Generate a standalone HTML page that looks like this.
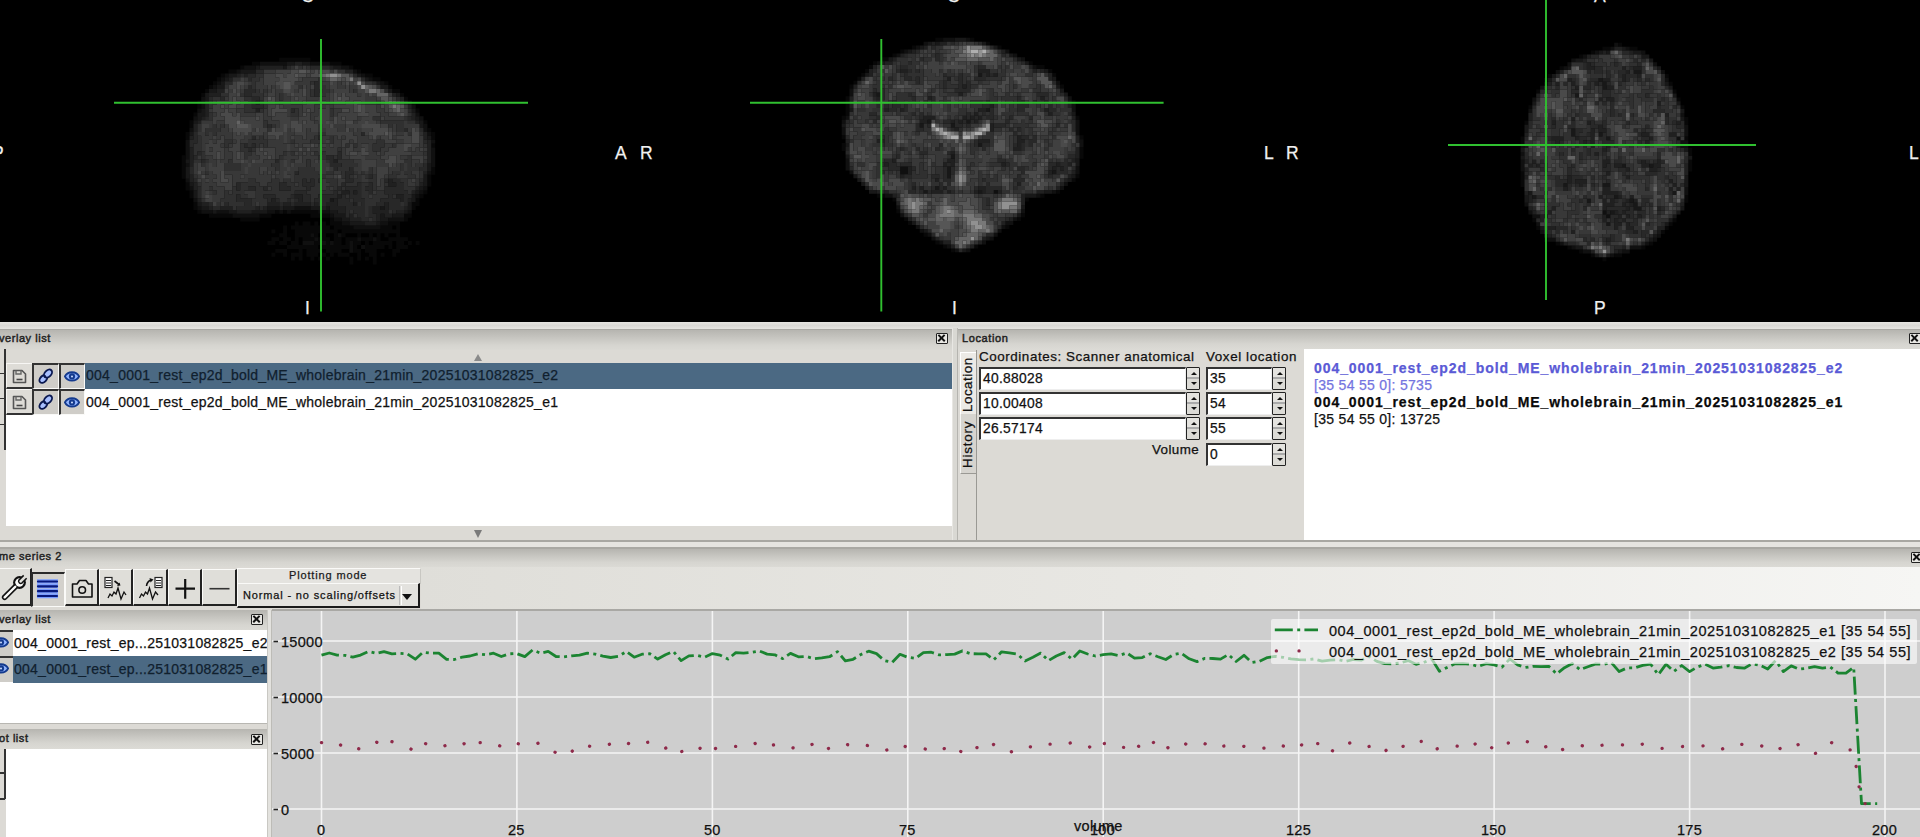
<!DOCTYPE html>
<html><head><meta charset="utf-8">
<style>
*{box-sizing:border-box;margin:0;padding:0}
html,body{width:1920px;height:837px;overflow:hidden;background:#dcdad5;font-family:"Liberation Sans",sans-serif;color:#1a1a1a}
.a{position:absolute}
.t{position:absolute;white-space:nowrap;line-height:1;-webkit-text-stroke:0.25px currentColor}
.hdr{position:absolute;background:linear-gradient(#b6b5b0,#c4c3be 30%,#d6d5d0 70%,#dcdbd6)}
.wh{position:absolute;background:#fff}
.sel{position:absolute;background:#4b6983}
.cls{position:absolute;width:12px;height:11px;border:1.5px solid #222;border-radius:1px;background:#e8e7e3}
.cls:before,.cls:after{content:"";position:absolute;left:0px;top:3px;width:9px;height:2.2px;background:#111;transform:rotate(45deg)}
.cls:after{transform:rotate(-45deg)}
.inp{position:absolute;background:#fff;border-top:2px solid #333;border-left:2px solid #333;border-right:1px solid #eee;border-bottom:1px solid #eee}
.spin{position:absolute;background:linear-gradient(#e4e3df 0,#e4e3df 45%,#aaa 45%,#aaa 52%,#dcdbd6 52%);border:1.5px solid #222;border-radius:1px}
.spin:before{content:"";position:absolute;left:3.5px;top:4px;border-left:3px solid transparent;border-right:3px solid transparent;border-bottom:3.5px solid #111}
.spin:after{content:"";position:absolute;left:3.5px;top:14px;border-left:3px solid transparent;border-right:3px solid transparent;border-top:3.5px solid #111}
.btn{position:absolute;background:#dcdad5;border-top:1px solid #fafaf8;border-left:1px solid #fafaf8;border-right:3px solid #222;border-bottom:3px solid #222}
</style></head><body>

<!-- ===== canvas ===== -->
<div class="a" id="cv" style="left:0;top:0;width:1920px;height:322px;background:#000;overflow:hidden">
<svg class="a" style="left:0;top:0;width:1920px;height:322px" viewBox="0 0 1920 322">
<defs>
<filter id="tex" x="-10%" y="-10%" width="120%" height="120%">
 <feGaussianBlur in="SourceAlpha" stdDeviation="3.5" result="ma"/>
 <feTurbulence type="fractalNoise" baseFrequency="0.3" numOctaves="2" seed="4" result="n"/>
 <feColorMatrix in="n" type="matrix" values="0 0 0 0 0  0 0 0 0 0  0 0 0 0 0  2.2 0 0 0 -1.0" result="na"/>
 <feFlood flood-color="#8c8c8c" result="fl"/>
 <feComposite in="fl" in2="na" operator="in" result="spk"/>
 <feMerge result="m"><feMergeNode in="SourceGraphic"/><feMergeNode in="spk"/></feMerge>
 <feGaussianBlur in="m" stdDeviation="0.9" result="mb"/>
 <feComposite in="mb" in2="ma" operator="in"/>
</filter>
<filter id="soft"><feGaussianBlur stdDeviation="4"/></filter>
<filter id="b2"><feGaussianBlur stdDeviation="2"/></filter>
</defs>
<rect width="1920" height="322" fill="#000"/>

<path fill="#080808" d="M279.2 57.8h31.2v3.9h-31.2zM251.9 61.7h7.8v3.9h-7.8zM329.9 61.7h11.7v3.9h-11.7zM240.2 65.6h3.9v3.9h-3.9zM349.4 65.6h3.9v3.9h-3.9zM228.5 69.5h7.8v3.9h-7.8zM357.2 69.5h3.9v3.9h-3.9zM220.7 73.4h3.9v3.9h-3.9zM365.0 73.4h7.8v3.9h-7.8zM216.8 77.3h3.9v3.9h-3.9zM372.8 77.3h7.8v3.9h-7.8zM212.9 81.2h3.9v3.9h-3.9zM384.5 81.2h3.9v3.9h-3.9zM209.0 85.1h3.9v3.9h-3.9zM388.4 85.1h3.9v3.9h-3.9zM205.1 89.0h3.9v3.9h-3.9zM392.3 89.0h7.8v3.9h-7.8zM201.2 92.9h3.9v3.9h-3.9zM400.1 92.9h3.9v3.9h-3.9zM404.0 96.8h3.9v3.9h-3.9zM197.3 100.7h3.9v3.9h-3.9zM197.3 104.6h3.9v3.9h-3.9zM415.7 108.5h3.9v3.9h-3.9zM193.4 112.4h3.9v3.9h-3.9zM189.5 120.2h3.9v3.9h-3.9zM423.5 120.2h3.9v3.9h-3.9zM189.5 124.1h3.9v3.9h-3.9zM427.4 128.0h3.9v3.9h-3.9zM185.6 131.9h3.9v3.9h-3.9zM431.3 131.9h3.9v3.9h-3.9zM185.6 135.8h3.9v3.9h-3.9zM431.3 135.8h3.9v3.9h-3.9zM431.3 143.6h3.9v3.9h-3.9zM181.7 155.3h3.9v3.9h-3.9zM181.7 159.2h3.9v3.9h-3.9zM181.7 163.1h3.9v3.9h-3.9zM181.7 167.0h3.9v3.9h-3.9zM431.3 167.0h3.9v3.9h-3.9zM181.7 170.9h3.9v3.9h-3.9zM431.3 170.9h3.9v3.9h-3.9zM181.7 174.8h3.9v3.9h-3.9zM427.4 174.8h3.9v3.9h-3.9zM427.4 178.7h3.9v3.9h-3.9zM185.6 182.6h3.9v3.9h-3.9zM427.4 182.6h3.9v3.9h-3.9zM185.6 186.5h3.9v3.9h-3.9zM189.5 190.4h3.9v3.9h-3.9zM423.5 190.4h3.9v3.9h-3.9zM189.5 194.3h3.9v3.9h-3.9zM419.6 194.3h3.9v3.9h-3.9zM415.7 198.2h3.9v3.9h-3.9zM193.4 202.1h3.9v3.9h-3.9zM411.8 202.1h7.8v3.9h-7.8zM193.4 206.0h3.9v3.9h-3.9zM411.8 206.0h3.9v3.9h-3.9zM197.3 209.9h3.9v3.9h-3.9zM275.3 209.9h3.9v3.9h-3.9zM283.1 209.9h3.9v3.9h-3.9zM290.9 209.9h27.3v3.9h-27.3zM209.0 213.8h23.4v3.9h-23.4zM259.7 213.8h11.7v3.9h-11.7zM310.4 213.8h19.5v3.9h-19.5zM404.0 213.8h7.8v3.9h-7.8zM240.2 217.7h19.5v3.9h-19.5zM329.9 217.7h3.9v3.9h-3.9zM404.0 217.7h3.9v3.9h-3.9zM294.8 221.6h3.9v3.9h-3.9zM302.6 221.6h7.8v3.9h-7.8zM314.3 221.6h3.9v3.9h-3.9zM322.1 221.6h3.9v3.9h-3.9zM329.9 221.6h11.7v3.9h-11.7zM388.4 221.6h11.7v3.9h-11.7zM283.1 225.5h3.9v3.9h-3.9zM290.9 225.5h39.0v3.9h-39.0zM333.8 225.5h19.5v3.9h-19.5zM380.6 225.5h11.7v3.9h-11.7zM396.2 225.5h3.9v3.9h-3.9zM271.4 229.4h3.9v3.9h-3.9zM283.1 229.4h3.9v3.9h-3.9zM294.8 229.4h42.9v3.9h-42.9zM341.6 229.4h58.5v3.9h-58.5zM279.2 233.3h7.8v3.9h-7.8zM294.8 233.3h15.6v3.9h-15.6zM314.3 233.3h3.9v3.9h-3.9zM322.1 233.3h3.9v3.9h-3.9zM333.8 233.3h3.9v3.9h-3.9zM341.6 233.3h3.9v3.9h-3.9zM357.2 233.3h3.9v3.9h-3.9zM368.9 233.3h3.9v3.9h-3.9zM376.7 233.3h3.9v3.9h-3.9zM384.5 233.3h3.9v3.9h-3.9zM396.2 233.3h3.9v3.9h-3.9zM271.4 237.2h7.8v3.9h-7.8zM283.1 237.2h7.8v3.9h-7.8zM294.8 237.2h3.9v3.9h-3.9zM302.6 237.2h11.7v3.9h-11.7zM318.2 237.2h11.7v3.9h-11.7zM333.8 237.2h7.8v3.9h-7.8zM345.5 237.2h11.7v3.9h-11.7zM361.1 237.2h11.7v3.9h-11.7zM376.7 237.2h3.9v3.9h-3.9zM388.4 237.2h19.5v3.9h-19.5zM267.5 241.1h7.8v3.9h-7.8zM279.2 241.1h7.8v3.9h-7.8zM290.9 241.1h7.8v3.9h-7.8zM314.3 241.1h7.8v3.9h-7.8zM326.0 241.1h3.9v3.9h-3.9zM333.8 241.1h7.8v3.9h-7.8zM345.5 241.1h3.9v3.9h-3.9zM353.3 241.1h7.8v3.9h-7.8zM365.0 241.1h3.9v3.9h-3.9zM372.8 241.1h19.5v3.9h-19.5zM396.2 241.1h7.8v3.9h-7.8zM407.9 241.1h3.9v3.9h-3.9zM415.7 241.1h3.9v3.9h-3.9zM287.0 245.0h31.2v3.9h-31.2zM322.1 245.0h27.3v3.9h-27.3zM353.3 245.0h3.9v3.9h-3.9zM365.0 245.0h19.5v3.9h-19.5zM388.4 245.0h3.9v3.9h-3.9zM396.2 245.0h11.7v3.9h-11.7zM275.3 248.9h11.7v3.9h-11.7zM298.7 248.9h3.9v3.9h-3.9zM306.5 248.9h15.6v3.9h-15.6zM326.0 248.9h15.6v3.9h-15.6zM353.3 248.9h7.8v3.9h-7.8zM365.0 248.9h11.7v3.9h-11.7zM392.3 248.9h7.8v3.9h-7.8zM271.4 252.8h3.9v3.9h-3.9zM283.1 252.8h3.9v3.9h-3.9zM290.9 252.8h11.7v3.9h-11.7zM306.5 252.8h11.7v3.9h-11.7zM322.1 252.8h3.9v3.9h-3.9zM329.9 252.8h3.9v3.9h-3.9zM337.7 252.8h11.7v3.9h-11.7zM357.2 252.8h3.9v3.9h-3.9zM368.9 252.8h7.8v3.9h-7.8zM380.6 252.8h3.9v3.9h-3.9zM392.3 252.8h3.9v3.9h-3.9zM290.9 256.7h3.9v3.9h-3.9zM298.7 256.7h3.9v3.9h-3.9zM310.4 256.7h3.9v3.9h-3.9zM318.2 256.7h3.9v3.9h-3.9zM326.0 256.7h3.9v3.9h-3.9zM349.4 256.7h3.9v3.9h-3.9zM357.2 256.7h3.9v3.9h-3.9zM365.0 256.7h3.9v3.9h-3.9zM372.8 256.7h3.9v3.9h-3.9zM349.4 260.6h3.9v3.9h-3.9zM372.8 260.6h3.9v3.9h-3.9z"/>
<path fill="#101010" d="M259.7 61.7h27.3v3.9h-27.3zM310.4 61.7h19.5v3.9h-19.5zM244.1 65.6h11.7v3.9h-11.7zM341.6 65.6h7.8v3.9h-7.8zM236.3 69.5h3.9v3.9h-3.9zM353.3 69.5h3.9v3.9h-3.9zM224.6 73.4h3.9v3.9h-3.9zM361.1 73.4h3.9v3.9h-3.9zM220.7 77.3h3.9v3.9h-3.9zM368.9 77.3h3.9v3.9h-3.9zM216.8 81.2h3.9v3.9h-3.9zM380.6 81.2h3.9v3.9h-3.9zM212.9 85.1h3.9v3.9h-3.9zM201.2 96.8h3.9v3.9h-3.9zM201.2 100.7h3.9v3.9h-3.9zM407.9 100.7h3.9v3.9h-3.9zM201.2 104.6h3.9v3.9h-3.9zM411.8 104.6h3.9v3.9h-3.9zM197.3 108.5h3.9v3.9h-3.9zM415.7 112.4h3.9v3.9h-3.9zM193.4 116.3h3.9v3.9h-3.9zM419.6 116.3h3.9v3.9h-3.9zM423.5 124.1h3.9v3.9h-3.9zM189.5 128.0h3.9v3.9h-3.9zM423.5 128.0h3.9v3.9h-3.9zM427.4 131.9h3.9v3.9h-3.9zM185.6 139.7h3.9v3.9h-3.9zM431.3 139.7h3.9v3.9h-3.9zM185.6 143.6h3.9v3.9h-3.9zM185.6 147.5h3.9v3.9h-3.9zM431.3 147.5h3.9v3.9h-3.9zM185.6 151.4h3.9v3.9h-3.9zM431.3 151.4h3.9v3.9h-3.9zM185.6 155.3h3.9v3.9h-3.9zM431.3 155.3h3.9v3.9h-3.9zM431.3 159.2h3.9v3.9h-3.9zM185.6 163.1h3.9v3.9h-3.9zM431.3 163.1h3.9v3.9h-3.9zM427.4 170.9h3.9v3.9h-3.9zM185.6 178.7h3.9v3.9h-3.9zM189.5 186.5h3.9v3.9h-3.9zM423.5 186.5h3.9v3.9h-3.9zM419.6 190.4h3.9v3.9h-3.9zM415.7 194.3h3.9v3.9h-3.9zM193.4 198.2h3.9v3.9h-3.9zM197.3 206.0h3.9v3.9h-3.9zM294.8 206.0h15.6v3.9h-15.6zM201.2 209.9h11.7v3.9h-11.7zM216.8 209.9h11.7v3.9h-11.7zM267.5 209.9h7.8v3.9h-7.8zM279.2 209.9h3.9v3.9h-3.9zM287.0 209.9h3.9v3.9h-3.9zM318.2 209.9h11.7v3.9h-11.7zM407.9 209.9h3.9v3.9h-3.9zM232.4 213.8h27.3v3.9h-27.3zM329.9 213.8h3.9v3.9h-3.9zM333.8 217.7h7.8v3.9h-7.8zM388.4 217.7h15.6v3.9h-15.6zM341.6 221.6h7.8v3.9h-7.8zM380.6 221.6h7.8v3.9h-7.8zM353.3 225.5h27.3v3.9h-27.3zM310.4 233.3h3.9v3.9h-3.9zM337.7 233.3h3.9v3.9h-3.9zM314.3 237.2h3.9v3.9h-3.9zM357.2 237.2h3.9v3.9h-3.9zM372.8 237.2h3.9v3.9h-3.9zM302.6 241.1h11.7v3.9h-11.7zM322.1 241.1h3.9v3.9h-3.9zM329.9 241.1h3.9v3.9h-3.9zM349.4 241.1h3.9v3.9h-3.9zM349.4 245.0h3.9v3.9h-3.9zM361.1 245.0h3.9v3.9h-3.9zM349.4 248.9h3.9v3.9h-3.9z"/>
<path fill="#181818" d="M287.0 61.7h7.8v3.9h-7.8zM302.6 61.7h7.8v3.9h-7.8zM255.8 65.6h3.9v3.9h-3.9zM283.1 65.6h3.9v3.9h-3.9zM333.8 65.6h7.8v3.9h-7.8zM240.2 69.5h15.6v3.9h-15.6zM228.5 73.4h7.8v3.9h-7.8zM357.2 73.4h3.9v3.9h-3.9zM224.6 77.3h3.9v3.9h-3.9zM365.0 77.3h3.9v3.9h-3.9zM220.7 81.2h3.9v3.9h-3.9zM376.7 81.2h3.9v3.9h-3.9zM216.8 85.1h7.8v3.9h-7.8zM380.6 85.1h7.8v3.9h-7.8zM209.0 89.0h7.8v3.9h-7.8zM388.4 89.0h3.9v3.9h-3.9zM205.1 92.9h3.9v3.9h-3.9zM396.2 92.9h3.9v3.9h-3.9zM205.1 96.8h3.9v3.9h-3.9zM201.2 108.5h3.9v3.9h-3.9zM411.8 108.5h3.9v3.9h-3.9zM197.3 112.4h7.8v3.9h-7.8zM197.3 116.3h3.9v3.9h-3.9zM415.7 116.3h3.9v3.9h-3.9zM193.4 120.2h3.9v3.9h-3.9zM419.6 120.2h3.9v3.9h-3.9zM419.6 124.1h3.9v3.9h-3.9zM189.5 131.9h3.9v3.9h-3.9zM427.4 135.8h3.9v3.9h-3.9zM185.6 159.2h3.9v3.9h-3.9zM427.4 163.1h3.9v3.9h-3.9zM185.6 167.0h3.9v3.9h-3.9zM427.4 167.0h3.9v3.9h-3.9zM185.6 170.9h3.9v3.9h-3.9zM185.6 174.8h3.9v3.9h-3.9zM423.5 174.8h3.9v3.9h-3.9zM423.5 178.7h3.9v3.9h-3.9zM189.5 182.6h3.9v3.9h-3.9zM423.5 182.6h3.9v3.9h-3.9zM419.6 186.5h3.9v3.9h-3.9zM193.4 190.4h3.9v3.9h-3.9zM415.7 190.4h3.9v3.9h-3.9zM193.4 194.3h3.9v3.9h-3.9zM411.8 194.3h3.9v3.9h-3.9zM329.9 198.2h3.9v3.9h-3.9zM411.8 198.2h3.9v3.9h-3.9zM197.3 202.1h3.9v3.9h-3.9zM407.9 202.1h3.9v3.9h-3.9zM201.2 206.0h7.8v3.9h-7.8zM267.5 206.0h11.7v3.9h-11.7zM283.1 206.0h11.7v3.9h-11.7zM310.4 206.0h11.7v3.9h-11.7zM326.0 206.0h3.9v3.9h-3.9zM380.6 206.0h3.9v3.9h-3.9zM407.9 206.0h3.9v3.9h-3.9zM212.9 209.9h3.9v3.9h-3.9zM228.5 209.9h7.8v3.9h-7.8zM251.9 209.9h15.6v3.9h-15.6zM329.9 209.9h7.8v3.9h-7.8zM404.0 209.9h3.9v3.9h-3.9zM333.8 213.8h11.7v3.9h-11.7zM380.6 213.8h3.9v3.9h-3.9zM392.3 213.8h11.7v3.9h-11.7zM341.6 217.7h7.8v3.9h-7.8zM380.6 217.7h7.8v3.9h-7.8zM349.4 221.6h15.6v3.9h-15.6zM376.7 221.6h3.9v3.9h-3.9z"/>
<path fill="#202020" d="M294.8 61.7h7.8v3.9h-7.8zM259.7 65.6h23.4v3.9h-23.4zM329.9 65.6h3.9v3.9h-3.9zM345.5 69.5h7.8v3.9h-7.8zM236.3 73.4h3.9v3.9h-3.9zM244.1 73.4h3.9v3.9h-3.9zM228.5 77.3h3.9v3.9h-3.9zM216.8 89.0h7.8v3.9h-7.8zM209.0 92.9h11.7v3.9h-11.7zM392.3 92.9h3.9v3.9h-3.9zM400.1 96.8h3.9v3.9h-3.9zM205.1 100.7h3.9v3.9h-3.9zM255.8 100.7h3.9v3.9h-3.9zM404.0 100.7h3.9v3.9h-3.9zM205.1 104.6h3.9v3.9h-3.9zM407.9 104.6h3.9v3.9h-3.9zM205.1 108.5h3.9v3.9h-3.9zM255.8 108.5h3.9v3.9h-3.9zM205.1 112.4h3.9v3.9h-3.9zM411.8 112.4h3.9v3.9h-3.9zM201.2 116.3h3.9v3.9h-3.9zM411.8 116.3h3.9v3.9h-3.9zM197.3 120.2h3.9v3.9h-3.9zM415.7 120.2h3.9v3.9h-3.9zM193.4 124.1h3.9v3.9h-3.9zM193.4 128.0h3.9v3.9h-3.9zM423.5 131.9h3.9v3.9h-3.9zM189.5 135.8h3.9v3.9h-3.9zM423.5 135.8h3.9v3.9h-3.9zM427.4 139.7h3.9v3.9h-3.9zM427.4 143.6h3.9v3.9h-3.9zM189.5 147.5h3.9v3.9h-3.9zM427.4 147.5h3.9v3.9h-3.9zM189.5 151.4h3.9v3.9h-3.9zM427.4 151.4h3.9v3.9h-3.9zM189.5 155.3h3.9v3.9h-3.9zM427.4 155.3h3.9v3.9h-3.9zM189.5 159.2h3.9v3.9h-3.9zM333.8 159.2h3.9v3.9h-3.9zM427.4 159.2h3.9v3.9h-3.9zM189.5 163.1h3.9v3.9h-3.9zM423.5 170.9h3.9v3.9h-3.9zM189.5 174.8h3.9v3.9h-3.9zM189.5 178.7h3.9v3.9h-3.9zM388.4 178.7h3.9v3.9h-3.9zM193.4 182.6h3.9v3.9h-3.9zM388.4 182.6h7.8v3.9h-7.8zM419.6 182.6h3.9v3.9h-3.9zM193.4 186.5h3.9v3.9h-3.9zM415.7 186.5h3.9v3.9h-3.9zM341.6 190.4h7.8v3.9h-7.8zM353.3 190.4h3.9v3.9h-3.9zM411.8 190.4h3.9v3.9h-3.9zM294.8 194.3h7.8v3.9h-7.8zM337.7 194.3h3.9v3.9h-3.9zM396.2 194.3h7.8v3.9h-7.8zM197.3 198.2h3.9v3.9h-3.9zM271.4 198.2h3.9v3.9h-3.9zM298.7 198.2h3.9v3.9h-3.9zM333.8 198.2h3.9v3.9h-3.9zM400.1 198.2h3.9v3.9h-3.9zM407.9 198.2h3.9v3.9h-3.9zM201.2 202.1h7.8v3.9h-7.8zM267.5 202.1h11.7v3.9h-11.7zM283.1 202.1h7.8v3.9h-7.8zM294.8 202.1h15.6v3.9h-15.6zM314.3 202.1h3.9v3.9h-3.9zM326.0 202.1h11.7v3.9h-11.7zM353.3 202.1h3.9v3.9h-3.9zM384.5 202.1h3.9v3.9h-3.9zM209.0 206.0h3.9v3.9h-3.9zM220.7 206.0h11.7v3.9h-11.7zM255.8 206.0h3.9v3.9h-3.9zM263.6 206.0h3.9v3.9h-3.9zM279.2 206.0h3.9v3.9h-3.9zM322.1 206.0h3.9v3.9h-3.9zM329.9 206.0h15.6v3.9h-15.6zM372.8 206.0h7.8v3.9h-7.8zM384.5 206.0h3.9v3.9h-3.9zM404.0 206.0h3.9v3.9h-3.9zM236.3 209.9h15.6v3.9h-15.6zM337.7 209.9h7.8v3.9h-7.8zM372.8 209.9h15.6v3.9h-15.6zM396.2 209.9h7.8v3.9h-7.8zM349.4 213.8h3.9v3.9h-3.9zM376.7 213.8h3.9v3.9h-3.9zM384.5 213.8h7.8v3.9h-7.8zM349.4 217.7h11.7v3.9h-11.7zM376.7 217.7h3.9v3.9h-3.9zM365.0 221.6h11.7v3.9h-11.7z"/>
<path fill="#282828" d="M287.0 65.6h3.9v3.9h-3.9zM310.4 65.6h19.5v3.9h-19.5zM255.8 69.5h7.8v3.9h-7.8zM240.2 73.4h3.9v3.9h-3.9zM248.0 73.4h7.8v3.9h-7.8zM353.3 73.4h3.9v3.9h-3.9zM248.0 77.3h3.9v3.9h-3.9zM361.1 77.3h3.9v3.9h-3.9zM224.6 81.2h7.8v3.9h-7.8zM314.3 81.2h3.9v3.9h-3.9zM372.8 81.2h3.9v3.9h-3.9zM248.0 85.1h3.9v3.9h-3.9zM314.3 85.1h3.9v3.9h-3.9zM244.1 89.0h11.7v3.9h-11.7zM314.3 89.0h7.8v3.9h-7.8zM384.5 89.0h3.9v3.9h-3.9zM244.1 92.9h7.8v3.9h-7.8zM314.3 92.9h3.9v3.9h-3.9zM209.0 96.8h3.9v3.9h-3.9zM220.7 96.8h3.9v3.9h-3.9zM251.9 96.8h7.8v3.9h-7.8zM396.2 96.8h3.9v3.9h-3.9zM251.9 100.7h3.9v3.9h-3.9zM259.7 100.7h3.9v3.9h-3.9zM251.9 104.6h11.7v3.9h-11.7zM290.9 108.5h3.9v3.9h-3.9zM407.9 108.5h3.9v3.9h-3.9zM205.1 116.3h3.9v3.9h-3.9zM407.9 116.3h3.9v3.9h-3.9zM267.5 124.1h3.9v3.9h-3.9zM404.0 128.0h3.9v3.9h-3.9zM419.6 128.0h3.9v3.9h-3.9zM193.4 131.9h3.9v3.9h-3.9zM361.1 131.9h3.9v3.9h-3.9zM193.4 135.8h3.9v3.9h-3.9zM251.9 135.8h3.9v3.9h-3.9zM318.2 135.8h3.9v3.9h-3.9zM189.5 139.7h7.8v3.9h-7.8zM423.5 139.7h3.9v3.9h-3.9zM189.5 143.6h3.9v3.9h-3.9zM244.1 143.6h3.9v3.9h-3.9zM251.9 143.6h3.9v3.9h-3.9zM248.0 147.5h3.9v3.9h-3.9zM197.3 151.4h3.9v3.9h-3.9zM337.7 151.4h3.9v3.9h-3.9zM193.4 155.3h3.9v3.9h-3.9zM326.0 155.3h7.8v3.9h-7.8zM337.7 155.3h3.9v3.9h-3.9zM201.2 159.2h3.9v3.9h-3.9zM275.3 159.2h3.9v3.9h-3.9zM329.9 159.2h3.9v3.9h-3.9zM329.9 163.1h11.7v3.9h-11.7zM423.5 163.1h3.9v3.9h-3.9zM189.5 167.0h3.9v3.9h-3.9zM333.8 167.0h3.9v3.9h-3.9zM349.4 167.0h3.9v3.9h-3.9zM419.6 167.0h7.8v3.9h-7.8zM189.5 170.9h3.9v3.9h-3.9zM294.8 170.9h3.9v3.9h-3.9zM345.5 170.9h7.8v3.9h-7.8zM345.5 174.8h3.9v3.9h-3.9zM368.9 174.8h3.9v3.9h-3.9zM193.4 178.7h3.9v3.9h-3.9zM302.6 178.7h3.9v3.9h-3.9zM310.4 178.7h3.9v3.9h-3.9zM318.2 178.7h3.9v3.9h-3.9zM345.5 178.7h7.8v3.9h-7.8zM384.5 178.7h3.9v3.9h-3.9zM392.3 178.7h7.8v3.9h-7.8zM419.6 178.7h3.9v3.9h-3.9zM236.3 182.6h3.9v3.9h-3.9zM279.2 182.6h7.8v3.9h-7.8zM302.6 182.6h11.7v3.9h-11.7zM341.6 182.6h3.9v3.9h-3.9zM357.2 182.6h3.9v3.9h-3.9zM368.9 182.6h3.9v3.9h-3.9zM396.2 182.6h7.8v3.9h-7.8zM197.3 186.5h3.9v3.9h-3.9zM236.3 186.5h3.9v3.9h-3.9zM248.0 186.5h7.8v3.9h-7.8zM263.6 186.5h3.9v3.9h-3.9zM279.2 186.5h11.7v3.9h-11.7zM306.5 186.5h3.9v3.9h-3.9zM337.7 186.5h3.9v3.9h-3.9zM345.5 186.5h15.6v3.9h-15.6zM365.0 186.5h7.8v3.9h-7.8zM384.5 186.5h19.5v3.9h-19.5zM197.3 190.4h3.9v3.9h-3.9zM294.8 190.4h11.7v3.9h-11.7zM333.8 190.4h3.9v3.9h-3.9zM349.4 190.4h3.9v3.9h-3.9zM357.2 190.4h3.9v3.9h-3.9zM368.9 190.4h3.9v3.9h-3.9zM384.5 190.4h23.4v3.9h-23.4zM197.3 194.3h3.9v3.9h-3.9zM236.3 194.3h3.9v3.9h-3.9zM263.6 194.3h11.7v3.9h-11.7zM290.9 194.3h3.9v3.9h-3.9zM302.6 194.3h7.8v3.9h-7.8zM318.2 194.3h19.5v3.9h-19.5zM341.6 194.3h3.9v3.9h-3.9zM349.4 194.3h11.7v3.9h-11.7zM388.4 194.3h3.9v3.9h-3.9zM404.0 194.3h7.8v3.9h-7.8zM236.3 198.2h15.6v3.9h-15.6zM267.5 198.2h3.9v3.9h-3.9zM275.3 198.2h3.9v3.9h-3.9zM287.0 198.2h3.9v3.9h-3.9zM294.8 198.2h3.9v3.9h-3.9zM302.6 198.2h7.8v3.9h-7.8zM314.3 198.2h15.6v3.9h-15.6zM337.7 198.2h11.7v3.9h-11.7zM353.3 198.2h11.7v3.9h-11.7zM380.6 198.2h19.5v3.9h-19.5zM404.0 198.2h3.9v3.9h-3.9zM209.0 202.1h3.9v3.9h-3.9zM224.6 202.1h3.9v3.9h-3.9zM244.1 202.1h7.8v3.9h-7.8zM279.2 202.1h3.9v3.9h-3.9zM290.9 202.1h3.9v3.9h-3.9zM310.4 202.1h3.9v3.9h-3.9zM318.2 202.1h7.8v3.9h-7.8zM337.7 202.1h15.6v3.9h-15.6zM361.1 202.1h3.9v3.9h-3.9zM376.7 202.1h7.8v3.9h-7.8zM388.4 202.1h11.7v3.9h-11.7zM404.0 202.1h3.9v3.9h-3.9zM212.9 206.0h7.8v3.9h-7.8zM236.3 206.0h19.5v3.9h-19.5zM259.7 206.0h3.9v3.9h-3.9zM345.5 206.0h19.5v3.9h-19.5zM368.9 206.0h3.9v3.9h-3.9zM388.4 206.0h15.6v3.9h-15.6zM345.5 209.9h3.9v3.9h-3.9zM353.3 209.9h11.7v3.9h-11.7zM368.9 209.9h3.9v3.9h-3.9zM392.3 209.9h3.9v3.9h-3.9zM345.5 213.8h3.9v3.9h-3.9zM357.2 213.8h7.8v3.9h-7.8zM368.9 213.8h7.8v3.9h-7.8zM361.1 217.7h7.8v3.9h-7.8zM372.8 217.7h3.9v3.9h-3.9z"/>
<path fill="#303030" d="M290.9 65.6h3.9v3.9h-3.9zM298.7 65.6h3.9v3.9h-3.9zM306.5 65.6h3.9v3.9h-3.9zM337.7 69.5h7.8v3.9h-7.8zM255.8 73.4h7.8v3.9h-7.8zM232.4 77.3h7.8v3.9h-7.8zM251.9 77.3h7.8v3.9h-7.8zM318.2 77.3h3.9v3.9h-3.9zM251.9 81.2h3.9v3.9h-3.9zM310.4 81.2h3.9v3.9h-3.9zM318.2 81.2h3.9v3.9h-3.9zM365.0 81.2h7.8v3.9h-7.8zM224.6 85.1h3.9v3.9h-3.9zM251.9 85.1h3.9v3.9h-3.9zM298.7 85.1h3.9v3.9h-3.9zM318.2 85.1h7.8v3.9h-7.8zM376.7 85.1h3.9v3.9h-3.9zM255.8 89.0h3.9v3.9h-3.9zM263.6 89.0h3.9v3.9h-3.9zM310.4 89.0h3.9v3.9h-3.9zM322.1 89.0h7.8v3.9h-7.8zM353.3 89.0h3.9v3.9h-3.9zM220.7 92.9h7.8v3.9h-7.8zM240.2 92.9h3.9v3.9h-3.9zM251.9 92.9h11.7v3.9h-11.7zM279.2 92.9h3.9v3.9h-3.9zM310.4 92.9h3.9v3.9h-3.9zM318.2 92.9h7.8v3.9h-7.8zM212.9 96.8h7.8v3.9h-7.8zM244.1 96.8h7.8v3.9h-7.8zM259.7 96.8h3.9v3.9h-3.9zM279.2 96.8h3.9v3.9h-3.9zM209.0 100.7h3.9v3.9h-3.9zM248.0 100.7h3.9v3.9h-3.9zM376.7 100.7h3.9v3.9h-3.9zM209.0 104.6h3.9v3.9h-3.9zM244.1 104.6h7.8v3.9h-7.8zM263.6 104.6h3.9v3.9h-3.9zM244.1 108.5h11.7v3.9h-11.7zM259.7 108.5h3.9v3.9h-3.9zM294.8 108.5h3.9v3.9h-3.9zM329.9 108.5h3.9v3.9h-3.9zM209.0 112.4h3.9v3.9h-3.9zM290.9 112.4h7.8v3.9h-7.8zM329.9 112.4h3.9v3.9h-3.9zM407.9 112.4h3.9v3.9h-3.9zM209.0 116.3h3.9v3.9h-3.9zM372.8 116.3h7.8v3.9h-7.8zM404.0 116.3h3.9v3.9h-3.9zM263.6 120.2h3.9v3.9h-3.9zM380.6 120.2h23.4v3.9h-23.4zM407.9 120.2h7.8v3.9h-7.8zM197.3 124.1h3.9v3.9h-3.9zM212.9 124.1h3.9v3.9h-3.9zM220.7 124.1h3.9v3.9h-3.9zM263.6 124.1h3.9v3.9h-3.9zM271.4 124.1h3.9v3.9h-3.9zM388.4 124.1h3.9v3.9h-3.9zM396.2 124.1h7.8v3.9h-7.8zM197.3 128.0h3.9v3.9h-3.9zM205.1 128.0h15.6v3.9h-15.6zM267.5 128.0h3.9v3.9h-3.9zM396.2 128.0h7.8v3.9h-7.8zM205.1 131.9h3.9v3.9h-3.9zM212.9 131.9h3.9v3.9h-3.9zM318.2 131.9h7.8v3.9h-7.8zM407.9 131.9h3.9v3.9h-3.9zM419.6 131.9h3.9v3.9h-3.9zM197.3 135.8h3.9v3.9h-3.9zM259.7 135.8h3.9v3.9h-3.9zM314.3 135.8h3.9v3.9h-3.9zM329.9 135.8h3.9v3.9h-3.9zM197.3 139.7h3.9v3.9h-3.9zM224.6 139.7h7.8v3.9h-7.8zM248.0 139.7h19.5v3.9h-19.5zM290.9 139.7h3.9v3.9h-3.9zM310.4 139.7h11.7v3.9h-11.7zM329.9 139.7h3.9v3.9h-3.9zM376.7 139.7h7.8v3.9h-7.8zM193.4 143.6h7.8v3.9h-7.8zM224.6 143.6h3.9v3.9h-3.9zM240.2 143.6h3.9v3.9h-3.9zM248.0 143.6h3.9v3.9h-3.9zM255.8 143.6h3.9v3.9h-3.9zM263.6 143.6h3.9v3.9h-3.9zM345.5 143.6h3.9v3.9h-3.9zM353.3 143.6h3.9v3.9h-3.9zM372.8 143.6h11.7v3.9h-11.7zM392.3 143.6h3.9v3.9h-3.9zM423.5 143.6h3.9v3.9h-3.9zM193.4 147.5h7.8v3.9h-7.8zM240.2 147.5h7.8v3.9h-7.8zM251.9 147.5h3.9v3.9h-3.9zM337.7 147.5h3.9v3.9h-3.9zM372.8 147.5h7.8v3.9h-7.8zM193.4 151.4h3.9v3.9h-3.9zM201.2 151.4h3.9v3.9h-3.9zM244.1 151.4h7.8v3.9h-7.8zM283.1 151.4h3.9v3.9h-3.9zM290.9 151.4h3.9v3.9h-3.9zM314.3 151.4h3.9v3.9h-3.9zM322.1 151.4h3.9v3.9h-3.9zM423.5 151.4h3.9v3.9h-3.9zM201.2 155.3h3.9v3.9h-3.9zM244.1 155.3h3.9v3.9h-3.9zM279.2 155.3h3.9v3.9h-3.9zM318.2 155.3h7.8v3.9h-7.8zM333.8 155.3h3.9v3.9h-3.9zM407.9 155.3h3.9v3.9h-3.9zM193.4 159.2h7.8v3.9h-7.8zM205.1 159.2h3.9v3.9h-3.9zM228.5 159.2h3.9v3.9h-3.9zM290.9 159.2h3.9v3.9h-3.9zM306.5 159.2h3.9v3.9h-3.9zM326.0 159.2h3.9v3.9h-3.9zM337.7 159.2h15.6v3.9h-15.6zM404.0 159.2h7.8v3.9h-7.8zM423.5 159.2h3.9v3.9h-3.9zM201.2 163.1h3.9v3.9h-3.9zM224.6 163.1h15.6v3.9h-15.6zM271.4 163.1h7.8v3.9h-7.8zM306.5 163.1h3.9v3.9h-3.9zM341.6 163.1h15.6v3.9h-15.6zM400.1 163.1h3.9v3.9h-3.9zM407.9 163.1h3.9v3.9h-3.9zM415.7 163.1h7.8v3.9h-7.8zM224.6 167.0h15.6v3.9h-15.6zM275.3 167.0h3.9v3.9h-3.9zM298.7 167.0h15.6v3.9h-15.6zM337.7 167.0h11.7v3.9h-11.7zM368.9 167.0h3.9v3.9h-3.9zM400.1 167.0h3.9v3.9h-3.9zM407.9 167.0h11.7v3.9h-11.7zM205.1 170.9h3.9v3.9h-3.9zM298.7 170.9h19.5v3.9h-19.5zM326.0 170.9h7.8v3.9h-7.8zM341.6 170.9h3.9v3.9h-3.9zM353.3 170.9h3.9v3.9h-3.9zM361.1 170.9h3.9v3.9h-3.9zM368.9 170.9h3.9v3.9h-3.9zM392.3 170.9h7.8v3.9h-7.8zM404.0 170.9h7.8v3.9h-7.8zM419.6 170.9h3.9v3.9h-3.9zM193.4 174.8h3.9v3.9h-3.9zM294.8 174.8h31.2v3.9h-31.2zM341.6 174.8h3.9v3.9h-3.9zM349.4 174.8h3.9v3.9h-3.9zM357.2 174.8h3.9v3.9h-3.9zM365.0 174.8h3.9v3.9h-3.9zM372.8 174.8h3.9v3.9h-3.9zM388.4 174.8h7.8v3.9h-7.8zM407.9 174.8h7.8v3.9h-7.8zM419.6 174.8h3.9v3.9h-3.9zM248.0 178.7h7.8v3.9h-7.8zM271.4 178.7h7.8v3.9h-7.8zM283.1 178.7h7.8v3.9h-7.8zM294.8 178.7h7.8v3.9h-7.8zM306.5 178.7h3.9v3.9h-3.9zM314.3 178.7h3.9v3.9h-3.9zM326.0 178.7h11.7v3.9h-11.7zM353.3 178.7h7.8v3.9h-7.8zM368.9 178.7h7.8v3.9h-7.8zM400.1 178.7h7.8v3.9h-7.8zM415.7 178.7h3.9v3.9h-3.9zM197.3 182.6h3.9v3.9h-3.9zM240.2 182.6h19.5v3.9h-19.5zM267.5 182.6h11.7v3.9h-11.7zM287.0 182.6h7.8v3.9h-7.8zM298.7 182.6h3.9v3.9h-3.9zM314.3 182.6h7.8v3.9h-7.8zM329.9 182.6h7.8v3.9h-7.8zM345.5 182.6h11.7v3.9h-11.7zM361.1 182.6h7.8v3.9h-7.8zM372.8 182.6h3.9v3.9h-3.9zM384.5 182.6h3.9v3.9h-3.9zM404.0 182.6h3.9v3.9h-3.9zM415.7 182.6h3.9v3.9h-3.9zM209.0 186.5h3.9v3.9h-3.9zM232.4 186.5h3.9v3.9h-3.9zM240.2 186.5h7.8v3.9h-7.8zM255.8 186.5h7.8v3.9h-7.8zM271.4 186.5h7.8v3.9h-7.8zM290.9 186.5h15.6v3.9h-15.6zM310.4 186.5h11.7v3.9h-11.7zM326.0 186.5h3.9v3.9h-3.9zM333.8 186.5h3.9v3.9h-3.9zM341.6 186.5h3.9v3.9h-3.9zM361.1 186.5h3.9v3.9h-3.9zM372.8 186.5h3.9v3.9h-3.9zM404.0 186.5h11.7v3.9h-11.7zM212.9 190.4h3.9v3.9h-3.9zM224.6 190.4h3.9v3.9h-3.9zM232.4 190.4h11.7v3.9h-11.7zM255.8 190.4h39.0v3.9h-39.0zM306.5 190.4h27.3v3.9h-27.3zM337.7 190.4h3.9v3.9h-3.9zM361.1 190.4h7.8v3.9h-7.8zM376.7 190.4h7.8v3.9h-7.8zM407.9 190.4h3.9v3.9h-3.9zM224.6 194.3h11.7v3.9h-11.7zM240.2 194.3h7.8v3.9h-7.8zM255.8 194.3h7.8v3.9h-7.8zM275.3 194.3h15.6v3.9h-15.6zM310.4 194.3h7.8v3.9h-7.8zM345.5 194.3h3.9v3.9h-3.9zM361.1 194.3h7.8v3.9h-7.8zM372.8 194.3h15.6v3.9h-15.6zM392.3 194.3h3.9v3.9h-3.9zM201.2 198.2h3.9v3.9h-3.9zM220.7 198.2h15.6v3.9h-15.6zM251.9 198.2h15.6v3.9h-15.6zM279.2 198.2h7.8v3.9h-7.8zM290.9 198.2h3.9v3.9h-3.9zM310.4 198.2h3.9v3.9h-3.9zM349.4 198.2h3.9v3.9h-3.9zM365.0 198.2h15.6v3.9h-15.6zM216.8 202.1h3.9v3.9h-3.9zM228.5 202.1h15.6v3.9h-15.6zM251.9 202.1h3.9v3.9h-3.9zM259.7 202.1h7.8v3.9h-7.8zM357.2 202.1h3.9v3.9h-3.9zM365.0 202.1h11.7v3.9h-11.7zM400.1 202.1h3.9v3.9h-3.9zM232.4 206.0h3.9v3.9h-3.9zM365.0 206.0h3.9v3.9h-3.9zM349.4 209.9h3.9v3.9h-3.9zM365.0 209.9h3.9v3.9h-3.9zM388.4 209.9h3.9v3.9h-3.9zM353.3 213.8h3.9v3.9h-3.9zM365.0 213.8h3.9v3.9h-3.9zM368.9 217.7h3.9v3.9h-3.9z"/>
<path fill="#383838" d="M302.6 65.6h3.9v3.9h-3.9zM263.6 69.5h11.7v3.9h-11.7zM329.9 69.5h3.9v3.9h-3.9zM244.1 77.3h3.9v3.9h-3.9zM259.7 77.3h3.9v3.9h-3.9zM302.6 77.3h15.6v3.9h-15.6zM248.0 81.2h3.9v3.9h-3.9zM255.8 81.2h7.8v3.9h-7.8zM294.8 81.2h15.6v3.9h-15.6zM322.1 81.2h7.8v3.9h-7.8zM337.7 81.2h3.9v3.9h-3.9zM244.1 85.1h3.9v3.9h-3.9zM255.8 85.1h11.7v3.9h-11.7zM271.4 85.1h3.9v3.9h-3.9zM306.5 85.1h3.9v3.9h-3.9zM326.0 85.1h3.9v3.9h-3.9zM337.7 85.1h7.8v3.9h-7.8zM349.4 85.1h7.8v3.9h-7.8zM228.5 89.0h3.9v3.9h-3.9zM240.2 89.0h3.9v3.9h-3.9zM259.7 89.0h3.9v3.9h-3.9zM267.5 89.0h3.9v3.9h-3.9zM275.3 89.0h7.8v3.9h-7.8zM294.8 89.0h3.9v3.9h-3.9zM306.5 89.0h3.9v3.9h-3.9zM329.9 89.0h3.9v3.9h-3.9zM349.4 89.0h3.9v3.9h-3.9zM263.6 92.9h3.9v3.9h-3.9zM275.3 92.9h3.9v3.9h-3.9zM283.1 92.9h3.9v3.9h-3.9zM306.5 92.9h3.9v3.9h-3.9zM326.0 92.9h3.9v3.9h-3.9zM357.2 92.9h3.9v3.9h-3.9zM365.0 92.9h3.9v3.9h-3.9zM388.4 92.9h3.9v3.9h-3.9zM224.6 96.8h3.9v3.9h-3.9zM275.3 96.8h3.9v3.9h-3.9zM283.1 96.8h7.8v3.9h-7.8zM306.5 96.8h11.7v3.9h-11.7zM322.1 96.8h7.8v3.9h-7.8zM365.0 96.8h11.7v3.9h-11.7zM392.3 96.8h3.9v3.9h-3.9zM212.9 100.7h3.9v3.9h-3.9zM275.3 100.7h15.6v3.9h-15.6zM326.0 100.7h3.9v3.9h-3.9zM365.0 100.7h11.7v3.9h-11.7zM400.1 100.7h3.9v3.9h-3.9zM283.1 104.6h19.5v3.9h-19.5zM314.3 104.6h11.7v3.9h-11.7zM329.9 104.6h3.9v3.9h-3.9zM376.7 104.6h3.9v3.9h-3.9zM404.0 104.6h3.9v3.9h-3.9zM209.0 108.5h3.9v3.9h-3.9zM236.3 108.5h7.8v3.9h-7.8zM263.6 108.5h3.9v3.9h-3.9zM287.0 108.5h3.9v3.9h-3.9zM298.7 108.5h3.9v3.9h-3.9zM314.3 108.5h3.9v3.9h-3.9zM333.8 108.5h7.8v3.9h-7.8zM376.7 108.5h7.8v3.9h-7.8zM212.9 112.4h3.9v3.9h-3.9zM240.2 112.4h15.6v3.9h-15.6zM263.6 112.4h3.9v3.9h-3.9zM287.0 112.4h3.9v3.9h-3.9zM298.7 112.4h3.9v3.9h-3.9zM310.4 112.4h7.8v3.9h-7.8zM333.8 112.4h3.9v3.9h-3.9zM380.6 112.4h7.8v3.9h-7.8zM263.6 116.3h7.8v3.9h-7.8zM290.9 116.3h7.8v3.9h-7.8zM310.4 116.3h3.9v3.9h-3.9zM329.9 116.3h3.9v3.9h-3.9zM357.2 116.3h3.9v3.9h-3.9zM384.5 116.3h19.5v3.9h-19.5zM201.2 120.2h11.7v3.9h-11.7zM216.8 120.2h7.8v3.9h-7.8zM267.5 120.2h11.7v3.9h-11.7zM314.3 120.2h3.9v3.9h-3.9zM353.3 120.2h3.9v3.9h-3.9zM376.7 120.2h3.9v3.9h-3.9zM404.0 120.2h3.9v3.9h-3.9zM209.0 124.1h3.9v3.9h-3.9zM216.8 124.1h3.9v3.9h-3.9zM224.6 124.1h3.9v3.9h-3.9zM275.3 124.1h3.9v3.9h-3.9zM318.2 124.1h3.9v3.9h-3.9zM333.8 124.1h11.7v3.9h-11.7zM392.3 124.1h3.9v3.9h-3.9zM404.0 124.1h15.6v3.9h-15.6zM220.7 128.0h7.8v3.9h-7.8zM251.9 128.0h3.9v3.9h-3.9zM287.0 128.0h3.9v3.9h-3.9zM306.5 128.0h3.9v3.9h-3.9zM318.2 128.0h7.8v3.9h-7.8zM337.7 128.0h7.8v3.9h-7.8zM349.4 128.0h3.9v3.9h-3.9zM357.2 128.0h3.9v3.9h-3.9zM392.3 128.0h3.9v3.9h-3.9zM407.9 128.0h3.9v3.9h-3.9zM197.3 131.9h7.8v3.9h-7.8zM209.0 131.9h3.9v3.9h-3.9zM216.8 131.9h15.6v3.9h-15.6zM248.0 131.9h3.9v3.9h-3.9zM263.6 131.9h3.9v3.9h-3.9zM287.0 131.9h7.8v3.9h-7.8zM306.5 131.9h11.7v3.9h-11.7zM353.3 131.9h7.8v3.9h-7.8zM396.2 131.9h7.8v3.9h-7.8zM201.2 135.8h11.7v3.9h-11.7zM216.8 135.8h3.9v3.9h-3.9zM224.6 135.8h7.8v3.9h-7.8zM244.1 135.8h7.8v3.9h-7.8zM255.8 135.8h3.9v3.9h-3.9zM263.6 135.8h3.9v3.9h-3.9zM279.2 135.8h3.9v3.9h-3.9zM287.0 135.8h3.9v3.9h-3.9zM294.8 135.8h7.8v3.9h-7.8zM306.5 135.8h7.8v3.9h-7.8zM322.1 135.8h7.8v3.9h-7.8zM333.8 135.8h3.9v3.9h-3.9zM341.6 135.8h3.9v3.9h-3.9zM357.2 135.8h11.7v3.9h-11.7zM376.7 135.8h3.9v3.9h-3.9zM392.3 135.8h3.9v3.9h-3.9zM419.6 135.8h3.9v3.9h-3.9zM201.2 139.7h7.8v3.9h-7.8zM212.9 139.7h3.9v3.9h-3.9zM232.4 139.7h3.9v3.9h-3.9zM240.2 139.7h7.8v3.9h-7.8zM267.5 139.7h15.6v3.9h-15.6zM287.0 139.7h3.9v3.9h-3.9zM294.8 139.7h15.6v3.9h-15.6zM322.1 139.7h3.9v3.9h-3.9zM333.8 139.7h7.8v3.9h-7.8zM349.4 139.7h3.9v3.9h-3.9zM357.2 139.7h19.5v3.9h-19.5zM396.2 139.7h7.8v3.9h-7.8zM419.6 139.7h3.9v3.9h-3.9zM201.2 143.6h3.9v3.9h-3.9zM220.7 143.6h3.9v3.9h-3.9zM228.5 143.6h3.9v3.9h-3.9zM259.7 143.6h3.9v3.9h-3.9zM267.5 143.6h19.5v3.9h-19.5zM290.9 143.6h3.9v3.9h-3.9zM298.7 143.6h3.9v3.9h-3.9zM318.2 143.6h3.9v3.9h-3.9zM326.0 143.6h3.9v3.9h-3.9zM333.8 143.6h7.8v3.9h-7.8zM357.2 143.6h3.9v3.9h-3.9zM368.9 143.6h3.9v3.9h-3.9zM384.5 143.6h7.8v3.9h-7.8zM419.6 143.6h3.9v3.9h-3.9zM201.2 147.5h3.9v3.9h-3.9zM209.0 147.5h3.9v3.9h-3.9zM224.6 147.5h3.9v3.9h-3.9zM275.3 147.5h11.7v3.9h-11.7zM290.9 147.5h7.8v3.9h-7.8zM302.6 147.5h3.9v3.9h-3.9zM310.4 147.5h27.3v3.9h-27.3zM341.6 147.5h3.9v3.9h-3.9zM353.3 147.5h7.8v3.9h-7.8zM368.9 147.5h3.9v3.9h-3.9zM380.6 147.5h7.8v3.9h-7.8zM407.9 147.5h3.9v3.9h-3.9zM415.7 147.5h3.9v3.9h-3.9zM423.5 147.5h3.9v3.9h-3.9zM224.6 151.4h7.8v3.9h-7.8zM251.9 151.4h3.9v3.9h-3.9zM275.3 151.4h7.8v3.9h-7.8zM287.0 151.4h3.9v3.9h-3.9zM298.7 151.4h3.9v3.9h-3.9zM306.5 151.4h3.9v3.9h-3.9zM318.2 151.4h3.9v3.9h-3.9zM326.0 151.4h11.7v3.9h-11.7zM341.6 151.4h3.9v3.9h-3.9zM368.9 151.4h7.8v3.9h-7.8zM380.6 151.4h3.9v3.9h-3.9zM411.8 151.4h11.7v3.9h-11.7zM197.3 155.3h3.9v3.9h-3.9zM205.1 155.3h7.8v3.9h-7.8zM224.6 155.3h7.8v3.9h-7.8zM248.0 155.3h11.7v3.9h-11.7zM275.3 155.3h3.9v3.9h-3.9zM283.1 155.3h15.6v3.9h-15.6zM302.6 155.3h15.6v3.9h-15.6zM341.6 155.3h7.8v3.9h-7.8zM365.0 155.3h15.6v3.9h-15.6zM400.1 155.3h7.8v3.9h-7.8zM423.5 155.3h3.9v3.9h-3.9zM209.0 159.2h7.8v3.9h-7.8zM220.7 159.2h7.8v3.9h-7.8zM248.0 159.2h3.9v3.9h-3.9zM263.6 159.2h11.7v3.9h-11.7zM279.2 159.2h3.9v3.9h-3.9zM287.0 159.2h3.9v3.9h-3.9zM302.6 159.2h3.9v3.9h-3.9zM310.4 159.2h3.9v3.9h-3.9zM318.2 159.2h7.8v3.9h-7.8zM353.3 159.2h7.8v3.9h-7.8zM376.7 159.2h7.8v3.9h-7.8zM411.8 159.2h7.8v3.9h-7.8zM193.4 163.1h3.9v3.9h-3.9zM205.1 163.1h3.9v3.9h-3.9zM212.9 163.1h3.9v3.9h-3.9zM240.2 163.1h7.8v3.9h-7.8zM251.9 163.1h19.5v3.9h-19.5zM279.2 163.1h3.9v3.9h-3.9zM287.0 163.1h3.9v3.9h-3.9zM294.8 163.1h11.7v3.9h-11.7zM310.4 163.1h19.5v3.9h-19.5zM357.2 163.1h3.9v3.9h-3.9zM376.7 163.1h11.7v3.9h-11.7zM396.2 163.1h3.9v3.9h-3.9zM404.0 163.1h3.9v3.9h-3.9zM411.8 163.1h3.9v3.9h-3.9zM193.4 167.0h3.9v3.9h-3.9zM205.1 167.0h3.9v3.9h-3.9zM240.2 167.0h3.9v3.9h-3.9zM248.0 167.0h11.7v3.9h-11.7zM267.5 167.0h7.8v3.9h-7.8zM279.2 167.0h7.8v3.9h-7.8zM290.9 167.0h7.8v3.9h-7.8zM314.3 167.0h11.7v3.9h-11.7zM329.9 167.0h3.9v3.9h-3.9zM353.3 167.0h7.8v3.9h-7.8zM372.8 167.0h3.9v3.9h-3.9zM388.4 167.0h11.7v3.9h-11.7zM404.0 167.0h3.9v3.9h-3.9zM193.4 170.9h3.9v3.9h-3.9zM201.2 170.9h3.9v3.9h-3.9zM209.0 170.9h3.9v3.9h-3.9zM224.6 170.9h19.5v3.9h-19.5zM248.0 170.9h11.7v3.9h-11.7zM263.6 170.9h3.9v3.9h-3.9zM271.4 170.9h3.9v3.9h-3.9zM279.2 170.9h3.9v3.9h-3.9zM287.0 170.9h7.8v3.9h-7.8zM318.2 170.9h7.8v3.9h-7.8zM333.8 170.9h7.8v3.9h-7.8zM357.2 170.9h3.9v3.9h-3.9zM365.0 170.9h3.9v3.9h-3.9zM372.8 170.9h3.9v3.9h-3.9zM388.4 170.9h3.9v3.9h-3.9zM400.1 170.9h3.9v3.9h-3.9zM411.8 170.9h7.8v3.9h-7.8zM197.3 174.8h3.9v3.9h-3.9zM205.1 174.8h11.7v3.9h-11.7zM232.4 174.8h7.8v3.9h-7.8zM244.1 174.8h27.3v3.9h-27.3zM275.3 174.8h7.8v3.9h-7.8zM290.9 174.8h3.9v3.9h-3.9zM326.0 174.8h7.8v3.9h-7.8zM353.3 174.8h3.9v3.9h-3.9zM361.1 174.8h3.9v3.9h-3.9zM384.5 174.8h3.9v3.9h-3.9zM396.2 174.8h11.7v3.9h-11.7zM415.7 174.8h3.9v3.9h-3.9zM201.2 178.7h3.9v3.9h-3.9zM209.0 178.7h3.9v3.9h-3.9zM232.4 178.7h15.6v3.9h-15.6zM255.8 178.7h15.6v3.9h-15.6zM279.2 178.7h3.9v3.9h-3.9zM290.9 178.7h3.9v3.9h-3.9zM322.1 178.7h3.9v3.9h-3.9zM337.7 178.7h7.8v3.9h-7.8zM361.1 178.7h7.8v3.9h-7.8zM380.6 178.7h3.9v3.9h-3.9zM407.9 178.7h3.9v3.9h-3.9zM201.2 182.6h15.6v3.9h-15.6zM232.4 182.6h3.9v3.9h-3.9zM259.7 182.6h7.8v3.9h-7.8zM294.8 182.6h3.9v3.9h-3.9zM322.1 182.6h7.8v3.9h-7.8zM337.7 182.6h3.9v3.9h-3.9zM380.6 182.6h3.9v3.9h-3.9zM407.9 182.6h7.8v3.9h-7.8zM201.2 186.5h7.8v3.9h-7.8zM212.9 186.5h11.7v3.9h-11.7zM267.5 186.5h3.9v3.9h-3.9zM322.1 186.5h3.9v3.9h-3.9zM329.9 186.5h3.9v3.9h-3.9zM376.7 186.5h7.8v3.9h-7.8zM201.2 190.4h3.9v3.9h-3.9zM209.0 190.4h3.9v3.9h-3.9zM216.8 190.4h7.8v3.9h-7.8zM228.5 190.4h3.9v3.9h-3.9zM244.1 190.4h11.7v3.9h-11.7zM372.8 190.4h3.9v3.9h-3.9zM201.2 194.3h3.9v3.9h-3.9zM212.9 194.3h11.7v3.9h-11.7zM248.0 194.3h7.8v3.9h-7.8zM368.9 194.3h3.9v3.9h-3.9zM212.9 198.2h7.8v3.9h-7.8zM220.7 202.1h3.9v3.9h-3.9zM255.8 202.1h3.9v3.9h-3.9z"/>
<path fill="#404040" d="M294.8 65.6h3.9v3.9h-3.9zM275.3 69.5h15.6v3.9h-15.6zM310.4 69.5h3.9v3.9h-3.9zM318.2 69.5h3.9v3.9h-3.9zM263.6 73.4h11.7v3.9h-11.7zM283.1 73.4h3.9v3.9h-3.9zM306.5 73.4h3.9v3.9h-3.9zM349.4 73.4h3.9v3.9h-3.9zM240.2 77.3h3.9v3.9h-3.9zM263.6 77.3h15.6v3.9h-15.6zM298.7 77.3h3.9v3.9h-3.9zM322.1 77.3h3.9v3.9h-3.9zM353.3 77.3h3.9v3.9h-3.9zM232.4 81.2h3.9v3.9h-3.9zM244.1 81.2h3.9v3.9h-3.9zM263.6 81.2h11.7v3.9h-11.7zM333.8 81.2h3.9v3.9h-3.9zM341.6 81.2h3.9v3.9h-3.9zM349.4 81.2h3.9v3.9h-3.9zM228.5 85.1h7.8v3.9h-7.8zM240.2 85.1h3.9v3.9h-3.9zM267.5 85.1h3.9v3.9h-3.9zM275.3 85.1h3.9v3.9h-3.9zM290.9 85.1h7.8v3.9h-7.8zM302.6 85.1h3.9v3.9h-3.9zM310.4 85.1h3.9v3.9h-3.9zM329.9 85.1h7.8v3.9h-7.8zM345.5 85.1h3.9v3.9h-3.9zM224.6 89.0h3.9v3.9h-3.9zM236.3 89.0h3.9v3.9h-3.9zM271.4 89.0h3.9v3.9h-3.9zM290.9 89.0h3.9v3.9h-3.9zM298.7 89.0h3.9v3.9h-3.9zM333.8 89.0h15.6v3.9h-15.6zM357.2 89.0h7.8v3.9h-7.8zM228.5 92.9h7.8v3.9h-7.8zM267.5 92.9h7.8v3.9h-7.8zM287.0 92.9h3.9v3.9h-3.9zM294.8 92.9h7.8v3.9h-7.8zM329.9 92.9h3.9v3.9h-3.9zM337.7 92.9h3.9v3.9h-3.9zM345.5 92.9h11.7v3.9h-11.7zM361.1 92.9h3.9v3.9h-3.9zM372.8 92.9h3.9v3.9h-3.9zM228.5 96.8h3.9v3.9h-3.9zM236.3 96.8h7.8v3.9h-7.8zM263.6 96.8h3.9v3.9h-3.9zM290.9 96.8h3.9v3.9h-3.9zM298.7 96.8h7.8v3.9h-7.8zM318.2 96.8h3.9v3.9h-3.9zM329.9 96.8h3.9v3.9h-3.9zM349.4 96.8h15.6v3.9h-15.6zM376.7 96.8h3.9v3.9h-3.9zM216.8 100.7h15.6v3.9h-15.6zM240.2 100.7h7.8v3.9h-7.8zM263.6 100.7h3.9v3.9h-3.9zM290.9 100.7h11.7v3.9h-11.7zM306.5 100.7h19.5v3.9h-19.5zM329.9 100.7h3.9v3.9h-3.9zM345.5 100.7h7.8v3.9h-7.8zM361.1 100.7h3.9v3.9h-3.9zM380.6 100.7h3.9v3.9h-3.9zM212.9 104.6h7.8v3.9h-7.8zM224.6 104.6h3.9v3.9h-3.9zM236.3 104.6h7.8v3.9h-7.8zM267.5 104.6h7.8v3.9h-7.8zM279.2 104.6h3.9v3.9h-3.9zM302.6 104.6h11.7v3.9h-11.7zM326.0 104.6h3.9v3.9h-3.9zM333.8 104.6h19.5v3.9h-19.5zM365.0 104.6h11.7v3.9h-11.7zM384.5 104.6h3.9v3.9h-3.9zM212.9 108.5h11.7v3.9h-11.7zM228.5 108.5h7.8v3.9h-7.8zM267.5 108.5h3.9v3.9h-3.9zM302.6 108.5h3.9v3.9h-3.9zM310.4 108.5h3.9v3.9h-3.9zM318.2 108.5h11.7v3.9h-11.7zM349.4 108.5h3.9v3.9h-3.9zM365.0 108.5h11.7v3.9h-11.7zM384.5 108.5h3.9v3.9h-3.9zM404.0 108.5h3.9v3.9h-3.9zM216.8 112.4h3.9v3.9h-3.9zM232.4 112.4h3.9v3.9h-3.9zM255.8 112.4h7.8v3.9h-7.8zM267.5 112.4h3.9v3.9h-3.9zM275.3 112.4h11.7v3.9h-11.7zM306.5 112.4h3.9v3.9h-3.9zM318.2 112.4h11.7v3.9h-11.7zM337.7 112.4h19.5v3.9h-19.5zM368.9 112.4h11.7v3.9h-11.7zM388.4 112.4h7.8v3.9h-7.8zM404.0 112.4h3.9v3.9h-3.9zM212.9 116.3h11.7v3.9h-11.7zM240.2 116.3h15.6v3.9h-15.6zM259.7 116.3h3.9v3.9h-3.9zM271.4 116.3h19.5v3.9h-19.5zM298.7 116.3h11.7v3.9h-11.7zM314.3 116.3h15.6v3.9h-15.6zM337.7 116.3h3.9v3.9h-3.9zM345.5 116.3h11.7v3.9h-11.7zM361.1 116.3h11.7v3.9h-11.7zM380.6 116.3h3.9v3.9h-3.9zM212.9 120.2h3.9v3.9h-3.9zM244.1 120.2h19.5v3.9h-19.5zM279.2 120.2h11.7v3.9h-11.7zM298.7 120.2h3.9v3.9h-3.9zM306.5 120.2h7.8v3.9h-7.8zM318.2 120.2h7.8v3.9h-7.8zM329.9 120.2h3.9v3.9h-3.9zM337.7 120.2h7.8v3.9h-7.8zM357.2 120.2h7.8v3.9h-7.8zM368.9 120.2h7.8v3.9h-7.8zM201.2 124.1h7.8v3.9h-7.8zM251.9 124.1h11.7v3.9h-11.7zM279.2 124.1h3.9v3.9h-3.9zM287.0 124.1h3.9v3.9h-3.9zM302.6 124.1h15.6v3.9h-15.6zM322.1 124.1h7.8v3.9h-7.8zM345.5 124.1h15.6v3.9h-15.6zM380.6 124.1h7.8v3.9h-7.8zM201.2 128.0h3.9v3.9h-3.9zM228.5 128.0h3.9v3.9h-3.9zM259.7 128.0h7.8v3.9h-7.8zM275.3 128.0h7.8v3.9h-7.8zM290.9 128.0h3.9v3.9h-3.9zM302.6 128.0h3.9v3.9h-3.9zM310.4 128.0h7.8v3.9h-7.8zM326.0 128.0h11.7v3.9h-11.7zM353.3 128.0h3.9v3.9h-3.9zM361.1 128.0h11.7v3.9h-11.7zM388.4 128.0h3.9v3.9h-3.9zM415.7 128.0h3.9v3.9h-3.9zM232.4 131.9h3.9v3.9h-3.9zM240.2 131.9h3.9v3.9h-3.9zM251.9 131.9h11.7v3.9h-11.7zM283.1 131.9h3.9v3.9h-3.9zM294.8 131.9h11.7v3.9h-11.7zM326.0 131.9h27.3v3.9h-27.3zM365.0 131.9h3.9v3.9h-3.9zM392.3 131.9h3.9v3.9h-3.9zM404.0 131.9h3.9v3.9h-3.9zM212.9 135.8h3.9v3.9h-3.9zM220.7 135.8h3.9v3.9h-3.9zM232.4 135.8h11.7v3.9h-11.7zM267.5 135.8h7.8v3.9h-7.8zM283.1 135.8h3.9v3.9h-3.9zM290.9 135.8h3.9v3.9h-3.9zM302.6 135.8h3.9v3.9h-3.9zM337.7 135.8h3.9v3.9h-3.9zM345.5 135.8h11.7v3.9h-11.7zM368.9 135.8h3.9v3.9h-3.9zM380.6 135.8h7.8v3.9h-7.8zM396.2 135.8h15.6v3.9h-15.6zM209.0 139.7h3.9v3.9h-3.9zM216.8 139.7h7.8v3.9h-7.8zM236.3 139.7h3.9v3.9h-3.9zM283.1 139.7h3.9v3.9h-3.9zM326.0 139.7h3.9v3.9h-3.9zM341.6 139.7h7.8v3.9h-7.8zM353.3 139.7h3.9v3.9h-3.9zM384.5 139.7h11.7v3.9h-11.7zM404.0 139.7h7.8v3.9h-7.8zM205.1 143.6h15.6v3.9h-15.6zM232.4 143.6h7.8v3.9h-7.8zM287.0 143.6h3.9v3.9h-3.9zM294.8 143.6h3.9v3.9h-3.9zM302.6 143.6h7.8v3.9h-7.8zM314.3 143.6h3.9v3.9h-3.9zM322.1 143.6h3.9v3.9h-3.9zM329.9 143.6h3.9v3.9h-3.9zM341.6 143.6h3.9v3.9h-3.9zM349.4 143.6h3.9v3.9h-3.9zM361.1 143.6h7.8v3.9h-7.8zM396.2 143.6h7.8v3.9h-7.8zM411.8 143.6h7.8v3.9h-7.8zM205.1 147.5h3.9v3.9h-3.9zM212.9 147.5h11.7v3.9h-11.7zM228.5 147.5h11.7v3.9h-11.7zM255.8 147.5h3.9v3.9h-3.9zM263.6 147.5h11.7v3.9h-11.7zM287.0 147.5h3.9v3.9h-3.9zM345.5 147.5h7.8v3.9h-7.8zM365.0 147.5h3.9v3.9h-3.9zM388.4 147.5h15.6v3.9h-15.6zM411.8 147.5h3.9v3.9h-3.9zM419.6 147.5h3.9v3.9h-3.9zM205.1 151.4h11.7v3.9h-11.7zM220.7 151.4h3.9v3.9h-3.9zM232.4 151.4h3.9v3.9h-3.9zM240.2 151.4h3.9v3.9h-3.9zM255.8 151.4h7.8v3.9h-7.8zM267.5 151.4h7.8v3.9h-7.8zM294.8 151.4h3.9v3.9h-3.9zM302.6 151.4h3.9v3.9h-3.9zM310.4 151.4h3.9v3.9h-3.9zM345.5 151.4h3.9v3.9h-3.9zM357.2 151.4h3.9v3.9h-3.9zM376.7 151.4h3.9v3.9h-3.9zM384.5 151.4h27.3v3.9h-27.3zM212.9 155.3h3.9v3.9h-3.9zM220.7 155.3h3.9v3.9h-3.9zM232.4 155.3h3.9v3.9h-3.9zM240.2 155.3h3.9v3.9h-3.9zM259.7 155.3h7.8v3.9h-7.8zM271.4 155.3h3.9v3.9h-3.9zM298.7 155.3h3.9v3.9h-3.9zM349.4 155.3h15.6v3.9h-15.6zM380.6 155.3h7.8v3.9h-7.8zM396.2 155.3h3.9v3.9h-3.9zM411.8 155.3h11.7v3.9h-11.7zM216.8 159.2h3.9v3.9h-3.9zM232.4 159.2h7.8v3.9h-7.8zM244.1 159.2h3.9v3.9h-3.9zM255.8 159.2h7.8v3.9h-7.8zM283.1 159.2h3.9v3.9h-3.9zM294.8 159.2h7.8v3.9h-7.8zM314.3 159.2h3.9v3.9h-3.9zM361.1 159.2h15.6v3.9h-15.6zM396.2 159.2h7.8v3.9h-7.8zM419.6 159.2h3.9v3.9h-3.9zM197.3 163.1h3.9v3.9h-3.9zM209.0 163.1h3.9v3.9h-3.9zM216.8 163.1h7.8v3.9h-7.8zM248.0 163.1h3.9v3.9h-3.9zM283.1 163.1h3.9v3.9h-3.9zM290.9 163.1h3.9v3.9h-3.9zM361.1 163.1h15.6v3.9h-15.6zM392.3 163.1h3.9v3.9h-3.9zM197.3 167.0h7.8v3.9h-7.8zM209.0 167.0h15.6v3.9h-15.6zM244.1 167.0h3.9v3.9h-3.9zM259.7 167.0h7.8v3.9h-7.8zM287.0 167.0h3.9v3.9h-3.9zM326.0 167.0h3.9v3.9h-3.9zM361.1 167.0h7.8v3.9h-7.8zM376.7 167.0h11.7v3.9h-11.7zM212.9 170.9h7.8v3.9h-7.8zM244.1 170.9h3.9v3.9h-3.9zM259.7 170.9h3.9v3.9h-3.9zM267.5 170.9h3.9v3.9h-3.9zM275.3 170.9h3.9v3.9h-3.9zM283.1 170.9h3.9v3.9h-3.9zM376.7 170.9h11.7v3.9h-11.7zM216.8 174.8h3.9v3.9h-3.9zM224.6 174.8h7.8v3.9h-7.8zM240.2 174.8h3.9v3.9h-3.9zM271.4 174.8h3.9v3.9h-3.9zM283.1 174.8h7.8v3.9h-7.8zM333.8 174.8h3.9v3.9h-3.9zM376.7 174.8h7.8v3.9h-7.8zM197.3 178.7h3.9v3.9h-3.9zM205.1 178.7h3.9v3.9h-3.9zM212.9 178.7h7.8v3.9h-7.8zM228.5 178.7h3.9v3.9h-3.9zM376.7 178.7h3.9v3.9h-3.9zM411.8 178.7h3.9v3.9h-3.9zM216.8 182.6h15.6v3.9h-15.6zM376.7 182.6h3.9v3.9h-3.9zM224.6 186.5h7.8v3.9h-7.8zM205.1 190.4h3.9v3.9h-3.9zM209.0 194.3h3.9v3.9h-3.9zM205.1 198.2h7.8v3.9h-7.8zM212.9 202.1h3.9v3.9h-3.9z"/>
<path fill="#4a4a4a" d="M290.9 69.5h7.8v3.9h-7.8zM306.5 69.5h3.9v3.9h-3.9zM314.3 69.5h3.9v3.9h-3.9zM322.1 69.5h7.8v3.9h-7.8zM333.8 69.5h3.9v3.9h-3.9zM275.3 73.4h7.8v3.9h-7.8zM287.0 73.4h7.8v3.9h-7.8zM298.7 73.4h7.8v3.9h-7.8zM310.4 73.4h7.8v3.9h-7.8zM279.2 77.3h19.5v3.9h-19.5zM326.0 77.3h3.9v3.9h-3.9zM341.6 77.3h3.9v3.9h-3.9zM357.2 77.3h3.9v3.9h-3.9zM236.3 81.2h7.8v3.9h-7.8zM275.3 81.2h7.8v3.9h-7.8zM290.9 81.2h3.9v3.9h-3.9zM329.9 81.2h3.9v3.9h-3.9zM345.5 81.2h3.9v3.9h-3.9zM353.3 81.2h3.9v3.9h-3.9zM361.1 81.2h3.9v3.9h-3.9zM236.3 85.1h3.9v3.9h-3.9zM279.2 85.1h3.9v3.9h-3.9zM357.2 85.1h3.9v3.9h-3.9zM372.8 85.1h3.9v3.9h-3.9zM232.4 89.0h3.9v3.9h-3.9zM283.1 89.0h7.8v3.9h-7.8zM302.6 89.0h3.9v3.9h-3.9zM380.6 89.0h3.9v3.9h-3.9zM236.3 92.9h3.9v3.9h-3.9zM290.9 92.9h3.9v3.9h-3.9zM302.6 92.9h3.9v3.9h-3.9zM333.8 92.9h3.9v3.9h-3.9zM341.6 92.9h3.9v3.9h-3.9zM368.9 92.9h3.9v3.9h-3.9zM232.4 96.8h3.9v3.9h-3.9zM271.4 96.8h3.9v3.9h-3.9zM294.8 96.8h3.9v3.9h-3.9zM333.8 96.8h3.9v3.9h-3.9zM341.6 96.8h7.8v3.9h-7.8zM388.4 96.8h3.9v3.9h-3.9zM232.4 100.7h7.8v3.9h-7.8zM267.5 100.7h7.8v3.9h-7.8zM302.6 100.7h3.9v3.9h-3.9zM333.8 100.7h11.7v3.9h-11.7zM353.3 100.7h7.8v3.9h-7.8zM396.2 100.7h3.9v3.9h-3.9zM220.7 104.6h3.9v3.9h-3.9zM228.5 104.6h7.8v3.9h-7.8zM275.3 104.6h3.9v3.9h-3.9zM353.3 104.6h3.9v3.9h-3.9zM361.1 104.6h3.9v3.9h-3.9zM380.6 104.6h3.9v3.9h-3.9zM224.6 108.5h3.9v3.9h-3.9zM271.4 108.5h15.6v3.9h-15.6zM306.5 108.5h3.9v3.9h-3.9zM341.6 108.5h7.8v3.9h-7.8zM353.3 108.5h3.9v3.9h-3.9zM361.1 108.5h3.9v3.9h-3.9zM388.4 108.5h3.9v3.9h-3.9zM400.1 108.5h3.9v3.9h-3.9zM220.7 112.4h11.7v3.9h-11.7zM236.3 112.4h3.9v3.9h-3.9zM271.4 112.4h3.9v3.9h-3.9zM302.6 112.4h3.9v3.9h-3.9zM357.2 112.4h11.7v3.9h-11.7zM396.2 112.4h3.9v3.9h-3.9zM224.6 116.3h15.6v3.9h-15.6zM255.8 116.3h3.9v3.9h-3.9zM333.8 116.3h3.9v3.9h-3.9zM341.6 116.3h3.9v3.9h-3.9zM224.6 120.2h11.7v3.9h-11.7zM240.2 120.2h3.9v3.9h-3.9zM290.9 120.2h7.8v3.9h-7.8zM302.6 120.2h3.9v3.9h-3.9zM326.0 120.2h3.9v3.9h-3.9zM333.8 120.2h3.9v3.9h-3.9zM345.5 120.2h7.8v3.9h-7.8zM365.0 120.2h3.9v3.9h-3.9zM228.5 124.1h7.8v3.9h-7.8zM248.0 124.1h3.9v3.9h-3.9zM283.1 124.1h3.9v3.9h-3.9zM290.9 124.1h11.7v3.9h-11.7zM329.9 124.1h3.9v3.9h-3.9zM361.1 124.1h19.5v3.9h-19.5zM232.4 128.0h19.5v3.9h-19.5zM255.8 128.0h3.9v3.9h-3.9zM271.4 128.0h3.9v3.9h-3.9zM283.1 128.0h3.9v3.9h-3.9zM294.8 128.0h7.8v3.9h-7.8zM345.5 128.0h3.9v3.9h-3.9zM372.8 128.0h15.6v3.9h-15.6zM411.8 128.0h3.9v3.9h-3.9zM236.3 131.9h3.9v3.9h-3.9zM244.1 131.9h3.9v3.9h-3.9zM267.5 131.9h15.6v3.9h-15.6zM368.9 131.9h15.6v3.9h-15.6zM388.4 131.9h3.9v3.9h-3.9zM411.8 131.9h7.8v3.9h-7.8zM275.3 135.8h3.9v3.9h-3.9zM372.8 135.8h3.9v3.9h-3.9zM388.4 135.8h3.9v3.9h-3.9zM411.8 135.8h7.8v3.9h-7.8zM411.8 139.7h7.8v3.9h-7.8zM310.4 143.6h3.9v3.9h-3.9zM404.0 143.6h7.8v3.9h-7.8zM259.7 147.5h3.9v3.9h-3.9zM298.7 147.5h3.9v3.9h-3.9zM306.5 147.5h3.9v3.9h-3.9zM361.1 147.5h3.9v3.9h-3.9zM404.0 147.5h3.9v3.9h-3.9zM216.8 151.4h3.9v3.9h-3.9zM236.3 151.4h3.9v3.9h-3.9zM263.6 151.4h3.9v3.9h-3.9zM349.4 151.4h7.8v3.9h-7.8zM361.1 151.4h7.8v3.9h-7.8zM216.8 155.3h3.9v3.9h-3.9zM236.3 155.3h3.9v3.9h-3.9zM267.5 155.3h3.9v3.9h-3.9zM388.4 155.3h7.8v3.9h-7.8zM240.2 159.2h3.9v3.9h-3.9zM251.9 159.2h3.9v3.9h-3.9zM384.5 159.2h11.7v3.9h-11.7zM388.4 163.1h3.9v3.9h-3.9zM197.3 170.9h3.9v3.9h-3.9zM220.7 170.9h3.9v3.9h-3.9zM201.2 174.8h3.9v3.9h-3.9zM220.7 174.8h3.9v3.9h-3.9zM337.7 174.8h3.9v3.9h-3.9zM220.7 178.7h7.8v3.9h-7.8zM205.1 194.3h3.9v3.9h-3.9z"/>
<path fill="#565656" d="M298.7 69.5h7.8v3.9h-7.8zM294.8 73.4h3.9v3.9h-3.9zM318.2 73.4h3.9v3.9h-3.9zM341.6 73.4h7.8v3.9h-7.8zM337.7 77.3h3.9v3.9h-3.9zM345.5 77.3h3.9v3.9h-3.9zM283.1 81.2h7.8v3.9h-7.8zM283.1 85.1h7.8v3.9h-7.8zM368.9 85.1h3.9v3.9h-3.9zM365.0 89.0h3.9v3.9h-3.9zM267.5 96.8h3.9v3.9h-3.9zM337.7 96.8h3.9v3.9h-3.9zM380.6 96.8h7.8v3.9h-7.8zM384.5 100.7h3.9v3.9h-3.9zM392.3 100.7h3.9v3.9h-3.9zM357.2 104.6h3.9v3.9h-3.9zM388.4 104.6h3.9v3.9h-3.9zM400.1 104.6h3.9v3.9h-3.9zM357.2 108.5h3.9v3.9h-3.9zM392.3 108.5h3.9v3.9h-3.9zM400.1 112.4h3.9v3.9h-3.9zM236.3 124.1h11.7v3.9h-11.7zM384.5 131.9h3.9v3.9h-3.9z"/>
<path fill="#646464" d="M322.1 73.4h3.9v3.9h-3.9zM329.9 77.3h7.8v3.9h-7.8zM365.0 85.1h3.9v3.9h-3.9zM376.7 89.0h3.9v3.9h-3.9zM376.7 92.9h11.7v3.9h-11.7zM388.4 100.7h3.9v3.9h-3.9zM396.2 104.6h3.9v3.9h-3.9zM396.2 108.5h3.9v3.9h-3.9zM236.3 120.2h3.9v3.9h-3.9z"/>
<path fill="#787878" d="M326.0 73.4h3.9v3.9h-3.9zM337.7 73.4h3.9v3.9h-3.9zM349.4 77.3h3.9v3.9h-3.9zM368.9 89.0h7.8v3.9h-7.8zM392.3 104.6h3.9v3.9h-3.9z"/>
<path fill="#919191" d="M329.9 73.4h7.8v3.9h-7.8zM357.2 81.2h3.9v3.9h-3.9zM361.1 85.1h3.9v3.9h-3.9z"/>
<path fill="#080808" d="M935.3 37.8h7.8v3.9h-7.8zM970.4 37.8h3.9v3.9h-3.9zM986.0 41.7h3.9v3.9h-3.9zM911.9 45.6h3.9v3.9h-3.9zM997.7 45.6h3.9v3.9h-3.9zM900.2 49.5h3.9v3.9h-3.9zM892.4 53.4h3.9v3.9h-3.9zM880.7 57.3h7.8v3.9h-7.8zM872.9 61.2h3.9v3.9h-3.9zM1028.9 61.2h3.9v3.9h-3.9zM869.0 65.1h3.9v3.9h-3.9zM1036.7 65.1h7.8v3.9h-7.8zM865.1 69.0h3.9v3.9h-3.9zM1048.4 69.0h3.9v3.9h-3.9zM861.2 72.9h3.9v3.9h-3.9zM1052.3 72.9h3.9v3.9h-3.9zM857.3 76.8h3.9v3.9h-3.9zM853.4 80.7h3.9v3.9h-3.9zM849.5 84.6h3.9v3.9h-3.9zM1060.1 84.6h3.9v3.9h-3.9zM845.6 96.3h3.9v3.9h-3.9zM845.6 100.2h3.9v3.9h-3.9zM1071.8 100.2h3.9v3.9h-3.9zM845.6 104.1h3.9v3.9h-3.9zM845.6 108.0h3.9v3.9h-3.9zM845.6 111.9h3.9v3.9h-3.9zM841.7 115.8h3.9v3.9h-3.9zM1075.7 115.8h3.9v3.9h-3.9zM841.7 135.3h3.9v3.9h-3.9zM1079.6 135.3h3.9v3.9h-3.9zM841.7 143.1h3.9v3.9h-3.9zM841.7 147.0h3.9v3.9h-3.9zM1079.6 147.0h3.9v3.9h-3.9zM1079.6 150.9h3.9v3.9h-3.9zM1079.6 154.8h3.9v3.9h-3.9zM1075.7 174.3h3.9v3.9h-3.9zM1071.8 178.2h3.9v3.9h-3.9zM1056.2 189.9h3.9v3.9h-3.9zM876.8 193.8h7.8v3.9h-7.8zM1040.6 193.8h3.9v3.9h-3.9zM892.4 197.7h3.9v3.9h-3.9zM1025.0 197.7h3.9v3.9h-3.9zM896.3 209.4h3.9v3.9h-3.9zM1021.1 213.3h3.9v3.9h-3.9zM904.1 217.2h3.9v3.9h-3.9zM1017.2 217.2h3.9v3.9h-3.9zM908.0 221.1h3.9v3.9h-3.9zM1005.5 225.0h3.9v3.9h-3.9zM923.6 232.8h3.9v3.9h-3.9zM935.3 240.6h3.9v3.9h-3.9zM943.1 244.5h3.9v3.9h-3.9zM974.3 244.5h3.9v3.9h-3.9zM950.9 248.4h3.9v3.9h-3.9z"/>
<path fill="#101010" d="M943.1 37.8h11.7v3.9h-11.7zM966.5 37.8h3.9v3.9h-3.9zM923.6 41.7h3.9v3.9h-3.9zM915.8 45.6h3.9v3.9h-3.9zM904.1 49.5h3.9v3.9h-3.9zM1005.5 49.5h3.9v3.9h-3.9zM896.3 53.4h3.9v3.9h-3.9zM1013.3 53.4h3.9v3.9h-3.9zM1021.1 57.3h3.9v3.9h-3.9zM876.8 61.2h3.9v3.9h-3.9zM1032.8 65.1h3.9v3.9h-3.9zM1056.2 80.7h3.9v3.9h-3.9zM849.5 88.5h3.9v3.9h-3.9zM849.5 92.4h3.9v3.9h-3.9zM1067.9 96.3h3.9v3.9h-3.9zM1071.8 104.1h3.9v3.9h-3.9zM1071.8 108.0h3.9v3.9h-3.9zM845.6 115.8h3.9v3.9h-3.9zM841.7 119.7h3.9v3.9h-3.9zM1075.7 119.7h3.9v3.9h-3.9zM1075.7 123.6h3.9v3.9h-3.9zM841.7 127.5h3.9v3.9h-3.9zM1075.7 127.5h3.9v3.9h-3.9zM841.7 131.4h3.9v3.9h-3.9zM1075.7 131.4h3.9v3.9h-3.9zM1079.6 139.2h3.9v3.9h-3.9zM1079.6 143.1h3.9v3.9h-3.9zM845.6 158.7h3.9v3.9h-3.9zM845.6 162.6h3.9v3.9h-3.9zM845.6 166.5h3.9v3.9h-3.9zM900.2 166.5h7.8v3.9h-7.8zM1075.7 166.5h3.9v3.9h-3.9zM849.5 170.4h3.9v3.9h-3.9zM900.2 170.4h7.8v3.9h-7.8zM1075.7 170.4h3.9v3.9h-3.9zM1064.0 182.1h3.9v3.9h-3.9zM1060.1 186.0h3.9v3.9h-3.9zM993.8 189.9h3.9v3.9h-3.9zM1052.3 189.9h3.9v3.9h-3.9zM884.6 193.8h7.8v3.9h-7.8zM1036.7 193.8h3.9v3.9h-3.9zM896.3 205.5h3.9v3.9h-3.9zM1021.1 209.4h3.9v3.9h-3.9zM900.2 213.3h3.9v3.9h-3.9zM1013.3 217.2h3.9v3.9h-3.9zM1005.5 221.1h7.8v3.9h-7.8zM915.8 225.0h3.9v3.9h-3.9zM1001.6 225.0h3.9v3.9h-3.9zM919.7 228.9h3.9v3.9h-3.9zM997.7 228.9h3.9v3.9h-3.9zM927.5 232.8h3.9v3.9h-3.9zM993.8 232.8h3.9v3.9h-3.9zM931.4 236.7h3.9v3.9h-3.9zM989.9 236.7h3.9v3.9h-3.9zM939.2 240.6h3.9v3.9h-3.9zM982.1 240.6h3.9v3.9h-3.9zM947.0 244.5h3.9v3.9h-3.9zM954.8 248.4h3.9v3.9h-3.9zM966.5 248.4h3.9v3.9h-3.9z"/>
<path fill="#181818" d="M954.8 37.8h11.7v3.9h-11.7zM927.5 41.7h3.9v3.9h-3.9zM935.3 41.7h3.9v3.9h-3.9zM982.1 41.7h3.9v3.9h-3.9zM919.7 45.6h3.9v3.9h-3.9zM993.8 45.6h3.9v3.9h-3.9zM908.0 49.5h3.9v3.9h-3.9zM1009.4 53.4h3.9v3.9h-3.9zM888.5 57.3h3.9v3.9h-3.9zM1017.2 57.3h3.9v3.9h-3.9zM880.7 61.2h3.9v3.9h-3.9zM1025.0 61.2h3.9v3.9h-3.9zM1044.5 69.0h3.9v3.9h-3.9zM865.1 72.9h3.9v3.9h-3.9zM978.2 72.9h3.9v3.9h-3.9zM1052.3 76.8h3.9v3.9h-3.9zM1056.2 84.6h3.9v3.9h-3.9zM1060.1 88.5h3.9v3.9h-3.9zM876.8 92.4h3.9v3.9h-3.9zM1064.0 92.4h3.9v3.9h-3.9zM1067.9 100.2h3.9v3.9h-3.9zM849.5 108.0h3.9v3.9h-3.9zM986.0 108.0h3.9v3.9h-3.9zM1071.8 111.9h3.9v3.9h-3.9zM927.5 119.7h3.9v3.9h-3.9zM966.5 119.7h3.9v3.9h-3.9zM841.7 123.6h3.9v3.9h-3.9zM919.7 123.6h3.9v3.9h-3.9zM950.9 123.6h3.9v3.9h-3.9zM845.6 143.1h3.9v3.9h-3.9zM978.2 143.1h3.9v3.9h-3.9zM845.6 154.8h3.9v3.9h-3.9zM950.9 154.8h3.9v3.9h-3.9zM1075.7 158.7h3.9v3.9h-3.9zM1075.7 162.6h3.9v3.9h-3.9zM947.0 166.5h3.9v3.9h-3.9zM947.0 170.4h3.9v3.9h-3.9zM1052.3 170.4h3.9v3.9h-3.9zM853.4 174.3h3.9v3.9h-3.9zM947.0 174.3h3.9v3.9h-3.9zM1071.8 174.3h3.9v3.9h-3.9zM857.3 178.2h3.9v3.9h-3.9zM1067.9 178.2h3.9v3.9h-3.9zM861.2 182.1h3.9v3.9h-3.9zM865.1 186.0h3.9v3.9h-3.9zM935.3 186.0h3.9v3.9h-3.9zM869.0 189.9h7.8v3.9h-7.8zM923.6 189.9h3.9v3.9h-3.9zM978.2 189.9h3.9v3.9h-3.9zM1044.5 189.9h7.8v3.9h-7.8zM1025.0 193.8h11.7v3.9h-11.7zM1021.1 205.5h3.9v3.9h-3.9zM1017.2 213.3h3.9v3.9h-3.9zM911.9 221.1h3.9v3.9h-3.9zM923.6 228.9h3.9v3.9h-3.9zM986.0 236.7h3.9v3.9h-3.9zM962.6 248.4h3.9v3.9h-3.9z"/>
<path fill="#202020" d="M931.4 41.7h3.9v3.9h-3.9zM939.2 41.7h7.8v3.9h-7.8zM923.6 45.6h3.9v3.9h-3.9zM911.9 49.5h3.9v3.9h-3.9zM1001.6 49.5h3.9v3.9h-3.9zM900.2 53.4h3.9v3.9h-3.9zM892.4 57.3h3.9v3.9h-3.9zM884.6 61.2h7.8v3.9h-7.8zM872.9 65.1h3.9v3.9h-3.9zM1028.9 65.1h3.9v3.9h-3.9zM869.0 69.0h3.9v3.9h-3.9zM900.2 69.0h7.8v3.9h-7.8zM978.2 69.0h11.7v3.9h-11.7zM1032.8 69.0h3.9v3.9h-3.9zM1040.6 69.0h3.9v3.9h-3.9zM869.0 72.9h3.9v3.9h-3.9zM986.0 72.9h3.9v3.9h-3.9zM993.8 72.9h3.9v3.9h-3.9zM1048.4 72.9h3.9v3.9h-3.9zM861.2 76.8h3.9v3.9h-3.9zM947.0 76.8h3.9v3.9h-3.9zM1048.4 76.8h3.9v3.9h-3.9zM853.4 84.6h3.9v3.9h-3.9zM962.6 84.6h3.9v3.9h-3.9zM872.9 92.4h3.9v3.9h-3.9zM958.7 92.4h3.9v3.9h-3.9zM849.5 96.3h3.9v3.9h-3.9zM876.8 96.3h3.9v3.9h-3.9zM927.5 96.3h3.9v3.9h-3.9zM1040.6 96.3h3.9v3.9h-3.9zM849.5 100.2h3.9v3.9h-3.9zM849.5 104.1h3.9v3.9h-3.9zM989.9 104.1h3.9v3.9h-3.9zM1067.9 104.1h3.9v3.9h-3.9zM884.6 108.0h3.9v3.9h-3.9zM900.2 108.0h3.9v3.9h-3.9zM978.2 108.0h7.8v3.9h-7.8zM1044.5 108.0h3.9v3.9h-3.9zM974.3 111.9h3.9v3.9h-3.9zM1048.4 111.9h3.9v3.9h-3.9zM923.6 115.8h11.7v3.9h-11.7zM962.6 115.8h3.9v3.9h-3.9zM970.4 115.8h3.9v3.9h-3.9zM978.2 115.8h3.9v3.9h-3.9zM1071.8 115.8h3.9v3.9h-3.9zM919.7 119.7h7.8v3.9h-7.8zM950.9 119.7h3.9v3.9h-3.9zM958.7 119.7h3.9v3.9h-3.9zM974.3 119.7h3.9v3.9h-3.9zM989.9 123.6h3.9v3.9h-3.9zM954.8 127.5h3.9v3.9h-3.9zM989.9 127.5h3.9v3.9h-3.9zM1017.2 135.3h3.9v3.9h-3.9zM1075.7 135.3h3.9v3.9h-3.9zM845.6 139.2h3.9v3.9h-3.9zM876.8 139.2h7.8v3.9h-7.8zM978.2 139.2h11.7v3.9h-11.7zM1017.2 139.2h7.8v3.9h-7.8zM1075.7 139.2h3.9v3.9h-3.9zM1017.2 143.1h3.9v3.9h-3.9zM845.6 147.0h3.9v3.9h-3.9zM1013.3 147.0h7.8v3.9h-7.8zM1075.7 147.0h3.9v3.9h-3.9zM950.9 150.9h3.9v3.9h-3.9zM1075.7 150.9h3.9v3.9h-3.9zM1075.7 154.8h3.9v3.9h-3.9zM892.4 158.7h3.9v3.9h-3.9zM947.0 158.7h7.8v3.9h-7.8zM1071.8 158.7h3.9v3.9h-3.9zM884.6 162.6h3.9v3.9h-3.9zM943.1 162.6h3.9v3.9h-3.9zM950.9 162.6h3.9v3.9h-3.9zM1001.6 162.6h3.9v3.9h-3.9zM1056.2 162.6h3.9v3.9h-3.9zM1067.9 162.6h3.9v3.9h-3.9zM908.0 166.5h3.9v3.9h-3.9zM1052.3 166.5h3.9v3.9h-3.9zM1060.1 166.5h3.9v3.9h-3.9zM908.0 170.4h3.9v3.9h-3.9zM1048.4 170.4h3.9v3.9h-3.9zM1071.8 170.4h3.9v3.9h-3.9zM900.2 174.3h3.9v3.9h-3.9zM1067.9 174.3h3.9v3.9h-3.9zM935.3 178.2h3.9v3.9h-3.9zM1064.0 178.2h3.9v3.9h-3.9zM1017.2 182.1h3.9v3.9h-3.9zM1060.1 182.1h3.9v3.9h-3.9zM911.9 186.0h3.9v3.9h-3.9zM919.7 186.0h3.9v3.9h-3.9zM943.1 186.0h3.9v3.9h-3.9zM978.2 186.0h7.8v3.9h-7.8zM1056.2 186.0h3.9v3.9h-3.9zM876.8 189.9h3.9v3.9h-3.9zM884.6 189.9h3.9v3.9h-3.9zM931.4 189.9h11.7v3.9h-11.7zM947.0 189.9h3.9v3.9h-3.9zM974.3 189.9h3.9v3.9h-3.9zM982.1 189.9h3.9v3.9h-3.9zM997.7 189.9h3.9v3.9h-3.9zM1036.7 189.9h7.8v3.9h-7.8zM892.4 193.8h3.9v3.9h-3.9zM1021.1 193.8h3.9v3.9h-3.9zM1021.1 197.7h3.9v3.9h-3.9zM896.3 201.6h3.9v3.9h-3.9zM1021.1 201.6h3.9v3.9h-3.9zM908.0 217.2h3.9v3.9h-3.9zM1009.4 217.2h3.9v3.9h-3.9zM1001.6 221.1h3.9v3.9h-3.9zM935.3 236.7h3.9v3.9h-3.9zM982.1 236.7h3.9v3.9h-3.9zM943.1 240.6h7.8v3.9h-7.8zM978.2 240.6h3.9v3.9h-3.9zM950.9 244.5h3.9v3.9h-3.9zM970.4 244.5h3.9v3.9h-3.9z"/>
<path fill="#282828" d="M950.9 41.7h3.9v3.9h-3.9zM978.2 41.7h3.9v3.9h-3.9zM931.4 45.6h3.9v3.9h-3.9zM989.9 45.6h3.9v3.9h-3.9zM915.8 49.5h3.9v3.9h-3.9zM904.1 53.4h3.9v3.9h-3.9zM935.3 53.4h3.9v3.9h-3.9zM1001.6 53.4h3.9v3.9h-3.9zM919.7 57.3h3.9v3.9h-3.9zM935.3 57.3h3.9v3.9h-3.9zM1013.3 57.3h3.9v3.9h-3.9zM908.0 61.2h3.9v3.9h-3.9zM1021.1 61.2h3.9v3.9h-3.9zM900.2 65.1h7.8v3.9h-7.8zM978.2 65.1h7.8v3.9h-7.8zM872.9 69.0h3.9v3.9h-3.9zM896.3 69.0h3.9v3.9h-3.9zM908.0 69.0h3.9v3.9h-3.9zM915.8 69.0h3.9v3.9h-3.9zM1036.7 69.0h3.9v3.9h-3.9zM904.1 72.9h3.9v3.9h-3.9zM943.1 72.9h3.9v3.9h-3.9zM958.7 72.9h3.9v3.9h-3.9zM982.1 72.9h3.9v3.9h-3.9zM989.9 72.9h3.9v3.9h-3.9zM888.5 76.8h3.9v3.9h-3.9zM904.1 76.8h7.8v3.9h-7.8zM915.8 76.8h3.9v3.9h-3.9zM958.7 76.8h3.9v3.9h-3.9zM974.3 76.8h11.7v3.9h-11.7zM857.3 80.7h3.9v3.9h-3.9zM915.8 80.7h3.9v3.9h-3.9zM943.1 80.7h3.9v3.9h-3.9zM958.7 80.7h3.9v3.9h-3.9zM966.5 80.7h3.9v3.9h-3.9zM1052.3 80.7h3.9v3.9h-3.9zM943.1 84.6h3.9v3.9h-3.9zM958.7 84.6h3.9v3.9h-3.9zM966.5 84.6h3.9v3.9h-3.9zM872.9 88.5h3.9v3.9h-3.9zM880.7 88.5h3.9v3.9h-3.9zM954.8 88.5h15.6v3.9h-15.6zM880.7 92.4h3.9v3.9h-3.9zM908.0 92.4h3.9v3.9h-3.9zM1036.7 92.4h11.7v3.9h-11.7zM1060.1 92.4h3.9v3.9h-3.9zM872.9 96.3h3.9v3.9h-3.9zM880.7 96.3h3.9v3.9h-3.9zM911.9 96.3h3.9v3.9h-3.9zM931.4 96.3h3.9v3.9h-3.9zM1017.2 96.3h3.9v3.9h-3.9zM1064.0 96.3h3.9v3.9h-3.9zM892.4 100.2h3.9v3.9h-3.9zM986.0 100.2h3.9v3.9h-3.9zM1017.2 100.2h7.8v3.9h-7.8zM1032.8 100.2h3.9v3.9h-3.9zM1044.5 100.2h3.9v3.9h-3.9zM876.8 104.1h3.9v3.9h-3.9zM884.6 104.1h3.9v3.9h-3.9zM892.4 104.1h7.8v3.9h-7.8zM904.1 104.1h3.9v3.9h-3.9zM982.1 104.1h7.8v3.9h-7.8zM1017.2 104.1h11.7v3.9h-11.7zM1048.4 104.1h3.9v3.9h-3.9zM888.5 108.0h7.8v3.9h-7.8zM904.1 108.0h3.9v3.9h-3.9zM989.9 108.0h3.9v3.9h-3.9zM1017.2 108.0h7.8v3.9h-7.8zM1048.4 108.0h7.8v3.9h-7.8zM869.0 111.9h7.8v3.9h-7.8zM911.9 111.9h3.9v3.9h-3.9zM919.7 111.9h3.9v3.9h-3.9zM966.5 111.9h3.9v3.9h-3.9zM982.1 111.9h3.9v3.9h-3.9zM989.9 111.9h3.9v3.9h-3.9zM1067.9 111.9h3.9v3.9h-3.9zM876.8 115.8h3.9v3.9h-3.9zM919.7 115.8h3.9v3.9h-3.9zM966.5 115.8h3.9v3.9h-3.9zM974.3 115.8h3.9v3.9h-3.9zM986.0 115.8h7.8v3.9h-7.8zM1009.4 115.8h3.9v3.9h-3.9zM1028.9 115.8h3.9v3.9h-3.9zM845.6 119.7h3.9v3.9h-3.9zM872.9 119.7h3.9v3.9h-3.9zM943.1 119.7h7.8v3.9h-7.8zM954.8 119.7h3.9v3.9h-3.9zM962.6 119.7h3.9v3.9h-3.9zM970.4 119.7h3.9v3.9h-3.9zM1005.5 119.7h3.9v3.9h-3.9zM1071.8 119.7h3.9v3.9h-3.9zM915.8 123.6h3.9v3.9h-3.9zM927.5 123.6h3.9v3.9h-3.9zM954.8 123.6h7.8v3.9h-7.8zM966.5 123.6h3.9v3.9h-3.9zM993.8 123.6h11.7v3.9h-11.7zM1056.2 123.6h3.9v3.9h-3.9zM1071.8 123.6h3.9v3.9h-3.9zM915.8 127.5h7.8v3.9h-7.8zM950.9 127.5h3.9v3.9h-3.9zM1009.4 127.5h3.9v3.9h-3.9zM1017.2 127.5h3.9v3.9h-3.9zM1071.8 127.5h3.9v3.9h-3.9zM1013.3 131.4h3.9v3.9h-3.9zM845.6 135.3h3.9v3.9h-3.9zM880.7 135.3h3.9v3.9h-3.9zM1021.1 135.3h7.8v3.9h-7.8zM1032.8 135.3h3.9v3.9h-3.9zM974.3 139.2h3.9v3.9h-3.9zM1028.9 139.2h7.8v3.9h-7.8zM880.7 143.1h3.9v3.9h-3.9zM939.2 143.1h3.9v3.9h-3.9zM974.3 143.1h3.9v3.9h-3.9zM982.1 143.1h7.8v3.9h-7.8zM1013.3 143.1h3.9v3.9h-3.9zM1021.1 143.1h3.9v3.9h-3.9zM1028.9 143.1h3.9v3.9h-3.9zM900.2 147.0h3.9v3.9h-3.9zM915.8 147.0h3.9v3.9h-3.9zM935.3 147.0h3.9v3.9h-3.9zM982.1 147.0h3.9v3.9h-3.9zM1021.1 147.0h3.9v3.9h-3.9zM845.6 150.9h3.9v3.9h-3.9zM919.7 150.9h7.8v3.9h-7.8zM947.0 150.9h3.9v3.9h-3.9zM896.3 154.8h3.9v3.9h-3.9zM1067.9 154.8h7.8v3.9h-7.8zM884.6 158.7h7.8v3.9h-7.8zM997.7 158.7h7.8v3.9h-7.8zM1064.0 158.7h3.9v3.9h-3.9zM880.7 162.6h3.9v3.9h-3.9zM888.5 162.6h7.8v3.9h-7.8zM900.2 162.6h11.7v3.9h-11.7zM947.0 162.6h3.9v3.9h-3.9zM1005.5 162.6h3.9v3.9h-3.9zM1048.4 162.6h7.8v3.9h-7.8zM1060.1 162.6h7.8v3.9h-7.8zM849.5 166.5h3.9v3.9h-3.9zM888.5 166.5h11.7v3.9h-11.7zM911.9 166.5h3.9v3.9h-3.9zM943.1 166.5h3.9v3.9h-3.9zM950.9 166.5h3.9v3.9h-3.9zM1017.2 166.5h7.8v3.9h-7.8zM1048.4 166.5h3.9v3.9h-3.9zM1056.2 166.5h3.9v3.9h-3.9zM1064.0 166.5h3.9v3.9h-3.9zM1071.8 166.5h3.9v3.9h-3.9zM880.7 170.4h3.9v3.9h-3.9zM943.1 170.4h3.9v3.9h-3.9zM950.9 170.4h3.9v3.9h-3.9zM1021.1 170.4h3.9v3.9h-3.9zM1056.2 170.4h11.7v3.9h-11.7zM904.1 174.3h7.8v3.9h-7.8zM931.4 174.3h7.8v3.9h-7.8zM943.1 174.3h3.9v3.9h-3.9zM1017.2 174.3h3.9v3.9h-3.9zM1048.4 174.3h3.9v3.9h-3.9zM943.1 178.2h7.8v3.9h-7.8zM982.1 178.2h3.9v3.9h-3.9zM1013.3 178.2h11.7v3.9h-11.7zM911.9 182.1h3.9v3.9h-3.9zM939.2 182.1h3.9v3.9h-3.9zM947.0 182.1h3.9v3.9h-3.9zM986.0 182.1h3.9v3.9h-3.9zM931.4 186.0h3.9v3.9h-3.9zM939.2 186.0h3.9v3.9h-3.9zM974.3 186.0h3.9v3.9h-3.9zM986.0 186.0h15.6v3.9h-15.6zM1013.3 186.0h3.9v3.9h-3.9zM880.7 189.9h3.9v3.9h-3.9zM908.0 189.9h7.8v3.9h-7.8zM919.7 189.9h3.9v3.9h-3.9zM927.5 189.9h3.9v3.9h-3.9zM950.9 189.9h3.9v3.9h-3.9zM986.0 189.9h7.8v3.9h-7.8zM896.3 193.8h3.9v3.9h-3.9zM986.0 197.7h3.9v3.9h-3.9zM986.0 201.6h3.9v3.9h-3.9zM900.2 209.4h3.9v3.9h-3.9zM904.1 213.3h3.9v3.9h-3.9zM1005.5 217.2h3.9v3.9h-3.9zM919.7 225.0h3.9v3.9h-3.9zM997.7 225.0h3.9v3.9h-3.9zM927.5 228.9h3.9v3.9h-3.9zM931.4 232.8h3.9v3.9h-3.9zM986.0 232.8h7.8v3.9h-7.8zM958.7 248.4h3.9v3.9h-3.9z"/>
<path fill="#303030" d="M947.0 41.7h3.9v3.9h-3.9zM954.8 41.7h3.9v3.9h-3.9zM974.3 41.7h3.9v3.9h-3.9zM935.3 45.6h7.8v3.9h-7.8zM935.3 49.5h3.9v3.9h-3.9zM997.7 49.5h3.9v3.9h-3.9zM908.0 53.4h7.8v3.9h-7.8zM931.4 53.4h3.9v3.9h-3.9zM939.2 53.4h3.9v3.9h-3.9zM1005.5 53.4h3.9v3.9h-3.9zM896.3 57.3h11.7v3.9h-11.7zM911.9 57.3h3.9v3.9h-3.9zM923.6 57.3h7.8v3.9h-7.8zM939.2 57.3h3.9v3.9h-3.9zM892.4 61.2h3.9v3.9h-3.9zM900.2 61.2h7.8v3.9h-7.8zM911.9 61.2h7.8v3.9h-7.8zM1017.2 61.2h3.9v3.9h-3.9zM876.8 65.1h3.9v3.9h-3.9zM896.3 65.1h3.9v3.9h-3.9zM908.0 65.1h7.8v3.9h-7.8zM974.3 65.1h3.9v3.9h-3.9zM997.7 65.1h3.9v3.9h-3.9zM1005.5 65.1h3.9v3.9h-3.9zM880.7 69.0h3.9v3.9h-3.9zM911.9 69.0h3.9v3.9h-3.9zM919.7 69.0h3.9v3.9h-3.9zM939.2 69.0h3.9v3.9h-3.9zM947.0 69.0h3.9v3.9h-3.9zM974.3 69.0h3.9v3.9h-3.9zM989.9 69.0h7.8v3.9h-7.8zM1001.6 69.0h3.9v3.9h-3.9zM1028.9 69.0h3.9v3.9h-3.9zM876.8 72.9h3.9v3.9h-3.9zM892.4 72.9h3.9v3.9h-3.9zM900.2 72.9h3.9v3.9h-3.9zM908.0 72.9h15.6v3.9h-15.6zM947.0 72.9h7.8v3.9h-7.8zM962.6 72.9h7.8v3.9h-7.8zM997.7 72.9h7.8v3.9h-7.8zM1025.0 72.9h7.8v3.9h-7.8zM1044.5 72.9h3.9v3.9h-3.9zM872.9 76.8h3.9v3.9h-3.9zM880.7 76.8h3.9v3.9h-3.9zM892.4 76.8h3.9v3.9h-3.9zM911.9 76.8h3.9v3.9h-3.9zM919.7 76.8h3.9v3.9h-3.9zM943.1 76.8h3.9v3.9h-3.9zM954.8 76.8h3.9v3.9h-3.9zM962.6 76.8h3.9v3.9h-3.9zM986.0 76.8h15.6v3.9h-15.6zM876.8 80.7h3.9v3.9h-3.9zM919.7 80.7h3.9v3.9h-3.9zM939.2 80.7h3.9v3.9h-3.9zM947.0 80.7h3.9v3.9h-3.9zM962.6 80.7h3.9v3.9h-3.9zM978.2 80.7h3.9v3.9h-3.9zM872.9 84.6h11.7v3.9h-11.7zM888.5 84.6h3.9v3.9h-3.9zM939.2 84.6h3.9v3.9h-3.9zM947.0 84.6h11.7v3.9h-11.7zM970.4 84.6h7.8v3.9h-7.8zM1013.3 84.6h3.9v3.9h-3.9zM1036.7 84.6h3.9v3.9h-3.9zM853.4 88.5h3.9v3.9h-3.9zM876.8 88.5h3.9v3.9h-3.9zM931.4 88.5h3.9v3.9h-3.9zM943.1 88.5h3.9v3.9h-3.9zM989.9 88.5h3.9v3.9h-3.9zM1032.8 88.5h7.8v3.9h-7.8zM1056.2 88.5h3.9v3.9h-3.9zM869.0 92.4h3.9v3.9h-3.9zM896.3 92.4h11.7v3.9h-11.7zM911.9 92.4h3.9v3.9h-3.9zM927.5 92.4h3.9v3.9h-3.9zM947.0 92.4h11.7v3.9h-11.7zM962.6 92.4h3.9v3.9h-3.9zM989.9 92.4h3.9v3.9h-3.9zM1005.5 92.4h3.9v3.9h-3.9zM1017.2 92.4h3.9v3.9h-3.9zM1056.2 92.4h3.9v3.9h-3.9zM896.3 96.3h15.6v3.9h-15.6zM943.1 96.3h3.9v3.9h-3.9zM989.9 96.3h7.8v3.9h-7.8zM1001.6 96.3h15.6v3.9h-15.6zM1036.7 96.3h3.9v3.9h-3.9zM1044.5 96.3h3.9v3.9h-3.9zM1052.3 96.3h3.9v3.9h-3.9zM876.8 100.2h3.9v3.9h-3.9zM888.5 100.2h3.9v3.9h-3.9zM896.3 100.2h7.8v3.9h-7.8zM908.0 100.2h7.8v3.9h-7.8zM923.6 100.2h3.9v3.9h-3.9zM931.4 100.2h3.9v3.9h-3.9zM943.1 100.2h3.9v3.9h-3.9zM970.4 100.2h11.7v3.9h-11.7zM989.9 100.2h7.8v3.9h-7.8zM1013.3 100.2h3.9v3.9h-3.9zM1036.7 100.2h7.8v3.9h-7.8zM888.5 104.1h3.9v3.9h-3.9zM900.2 104.1h3.9v3.9h-3.9zM927.5 104.1h3.9v3.9h-3.9zM947.0 104.1h3.9v3.9h-3.9zM970.4 104.1h11.7v3.9h-11.7zM993.8 104.1h3.9v3.9h-3.9zM1009.4 104.1h3.9v3.9h-3.9zM1036.7 104.1h3.9v3.9h-3.9zM1056.2 104.1h3.9v3.9h-3.9zM1064.0 104.1h3.9v3.9h-3.9zM857.3 108.0h7.8v3.9h-7.8zM872.9 108.0h11.7v3.9h-11.7zM896.3 108.0h3.9v3.9h-3.9zM915.8 108.0h3.9v3.9h-3.9zM947.0 108.0h3.9v3.9h-3.9zM958.7 108.0h7.8v3.9h-7.8zM974.3 108.0h3.9v3.9h-3.9zM1009.4 108.0h7.8v3.9h-7.8zM1040.6 108.0h3.9v3.9h-3.9zM1060.1 108.0h11.7v3.9h-11.7zM849.5 111.9h3.9v3.9h-3.9zM896.3 111.9h3.9v3.9h-3.9zM908.0 111.9h3.9v3.9h-3.9zM927.5 111.9h3.9v3.9h-3.9zM958.7 111.9h7.8v3.9h-7.8zM970.4 111.9h3.9v3.9h-3.9zM978.2 111.9h3.9v3.9h-3.9zM986.0 111.9h3.9v3.9h-3.9zM1001.6 111.9h11.7v3.9h-11.7zM1017.2 111.9h11.7v3.9h-11.7zM1044.5 111.9h3.9v3.9h-3.9zM1052.3 111.9h7.8v3.9h-7.8zM853.4 115.8h3.9v3.9h-3.9zM869.0 115.8h7.8v3.9h-7.8zM904.1 115.8h7.8v3.9h-7.8zM915.8 115.8h3.9v3.9h-3.9zM947.0 115.8h3.9v3.9h-3.9zM954.8 115.8h3.9v3.9h-3.9zM982.1 115.8h3.9v3.9h-3.9zM993.8 115.8h3.9v3.9h-3.9zM1005.5 115.8h3.9v3.9h-3.9zM849.5 119.7h3.9v3.9h-3.9zM865.1 119.7h3.9v3.9h-3.9zM935.3 119.7h3.9v3.9h-3.9zM978.2 119.7h3.9v3.9h-3.9zM989.9 119.7h3.9v3.9h-3.9zM1021.1 119.7h3.9v3.9h-3.9zM1028.9 119.7h3.9v3.9h-3.9zM1056.2 119.7h3.9v3.9h-3.9zM1067.9 119.7h3.9v3.9h-3.9zM845.6 123.6h3.9v3.9h-3.9zM923.6 123.6h3.9v3.9h-3.9zM943.1 123.6h7.8v3.9h-7.8zM962.6 123.6h3.9v3.9h-3.9zM1005.5 123.6h3.9v3.9h-3.9zM1013.3 123.6h15.6v3.9h-15.6zM1064.0 123.6h3.9v3.9h-3.9zM884.6 127.5h3.9v3.9h-3.9zM923.6 127.5h7.8v3.9h-7.8zM958.7 127.5h3.9v3.9h-3.9zM993.8 127.5h7.8v3.9h-7.8zM1021.1 127.5h3.9v3.9h-3.9zM1028.9 127.5h3.9v3.9h-3.9zM1052.3 127.5h3.9v3.9h-3.9zM880.7 131.4h11.7v3.9h-11.7zM915.8 131.4h3.9v3.9h-3.9zM927.5 131.4h3.9v3.9h-3.9zM986.0 131.4h7.8v3.9h-7.8zM1021.1 131.4h3.9v3.9h-3.9zM1028.9 131.4h3.9v3.9h-3.9zM1048.4 131.4h3.9v3.9h-3.9zM876.8 135.3h3.9v3.9h-3.9zM884.6 135.3h3.9v3.9h-3.9zM982.1 135.3h11.7v3.9h-11.7zM1013.3 135.3h3.9v3.9h-3.9zM1052.3 135.3h3.9v3.9h-3.9zM849.5 139.2h3.9v3.9h-3.9zM884.6 139.2h3.9v3.9h-3.9zM989.9 139.2h3.9v3.9h-3.9zM1013.3 139.2h3.9v3.9h-3.9zM1025.0 139.2h3.9v3.9h-3.9zM1044.5 139.2h3.9v3.9h-3.9zM872.9 143.1h7.8v3.9h-7.8zM884.6 143.1h7.8v3.9h-7.8zM911.9 143.1h3.9v3.9h-3.9zM970.4 143.1h3.9v3.9h-3.9zM989.9 143.1h3.9v3.9h-3.9zM1025.0 143.1h3.9v3.9h-3.9zM1048.4 143.1h3.9v3.9h-3.9zM1071.8 143.1h3.9v3.9h-3.9zM896.3 147.0h3.9v3.9h-3.9zM904.1 147.0h3.9v3.9h-3.9zM923.6 147.0h3.9v3.9h-3.9zM939.2 147.0h3.9v3.9h-3.9zM950.9 147.0h3.9v3.9h-3.9zM970.4 147.0h7.8v3.9h-7.8zM1044.5 147.0h3.9v3.9h-3.9zM896.3 150.9h3.9v3.9h-3.9zM908.0 150.9h3.9v3.9h-3.9zM970.4 150.9h3.9v3.9h-3.9zM1013.3 150.9h7.8v3.9h-7.8zM1067.9 150.9h7.8v3.9h-7.8zM892.4 154.8h3.9v3.9h-3.9zM919.7 154.8h3.9v3.9h-3.9zM947.0 154.8h3.9v3.9h-3.9zM954.8 154.8h3.9v3.9h-3.9zM997.7 154.8h3.9v3.9h-3.9zM880.7 158.7h3.9v3.9h-3.9zM908.0 158.7h3.9v3.9h-3.9zM943.1 158.7h3.9v3.9h-3.9zM954.8 158.7h3.9v3.9h-3.9zM1005.5 158.7h7.8v3.9h-7.8zM1048.4 158.7h3.9v3.9h-3.9zM1056.2 158.7h3.9v3.9h-3.9zM1067.9 158.7h3.9v3.9h-3.9zM849.5 162.6h3.9v3.9h-3.9zM857.3 162.6h7.8v3.9h-7.8zM876.8 162.6h3.9v3.9h-3.9zM896.3 162.6h3.9v3.9h-3.9zM919.7 162.6h3.9v3.9h-3.9zM931.4 162.6h3.9v3.9h-3.9zM970.4 162.6h3.9v3.9h-3.9zM989.9 162.6h11.7v3.9h-11.7zM1009.4 162.6h7.8v3.9h-7.8zM1032.8 162.6h3.9v3.9h-3.9zM876.8 166.5h11.7v3.9h-11.7zM919.7 166.5h3.9v3.9h-3.9zM935.3 166.5h7.8v3.9h-7.8zM966.5 166.5h3.9v3.9h-3.9zM1001.6 166.5h3.9v3.9h-3.9zM1009.4 166.5h3.9v3.9h-3.9zM1025.0 166.5h3.9v3.9h-3.9zM876.8 170.4h3.9v3.9h-3.9zM888.5 170.4h3.9v3.9h-3.9zM896.3 170.4h3.9v3.9h-3.9zM911.9 170.4h3.9v3.9h-3.9zM919.7 170.4h7.8v3.9h-7.8zM935.3 170.4h7.8v3.9h-7.8zM978.2 170.4h3.9v3.9h-3.9zM1067.9 170.4h3.9v3.9h-3.9zM857.3 174.3h3.9v3.9h-3.9zM876.8 174.3h3.9v3.9h-3.9zM896.3 174.3h3.9v3.9h-3.9zM911.9 174.3h15.6v3.9h-15.6zM939.2 174.3h3.9v3.9h-3.9zM950.9 174.3h3.9v3.9h-3.9zM978.2 174.3h3.9v3.9h-3.9zM986.0 174.3h3.9v3.9h-3.9zM993.8 174.3h3.9v3.9h-3.9zM1044.5 174.3h3.9v3.9h-3.9zM1052.3 174.3h7.8v3.9h-7.8zM861.2 178.2h3.9v3.9h-3.9zM908.0 178.2h3.9v3.9h-3.9zM931.4 178.2h3.9v3.9h-3.9zM950.9 178.2h3.9v3.9h-3.9zM978.2 178.2h3.9v3.9h-3.9zM986.0 178.2h11.7v3.9h-11.7zM1060.1 178.2h3.9v3.9h-3.9zM865.1 182.1h3.9v3.9h-3.9zM908.0 182.1h3.9v3.9h-3.9zM931.4 182.1h7.8v3.9h-7.8zM978.2 182.1h3.9v3.9h-3.9zM1013.3 182.1h3.9v3.9h-3.9zM1056.2 182.1h3.9v3.9h-3.9zM869.0 186.0h3.9v3.9h-3.9zM908.0 186.0h3.9v3.9h-3.9zM915.8 186.0h3.9v3.9h-3.9zM923.6 186.0h7.8v3.9h-7.8zM947.0 186.0h7.8v3.9h-7.8zM1017.2 186.0h7.8v3.9h-7.8zM1048.4 186.0h3.9v3.9h-3.9zM888.5 189.9h7.8v3.9h-7.8zM915.8 189.9h3.9v3.9h-3.9zM943.1 189.9h3.9v3.9h-3.9zM958.7 189.9h3.9v3.9h-3.9zM970.4 189.9h3.9v3.9h-3.9zM1001.6 189.9h7.8v3.9h-7.8zM1013.3 189.9h7.8v3.9h-7.8zM1025.0 189.9h7.8v3.9h-7.8zM978.2 193.8h3.9v3.9h-3.9zM993.8 193.8h3.9v3.9h-3.9zM896.3 197.7h3.9v3.9h-3.9zM982.1 197.7h3.9v3.9h-3.9zM982.1 201.6h3.9v3.9h-3.9zM982.1 205.5h7.8v3.9h-7.8zM1013.3 213.3h3.9v3.9h-3.9zM911.9 217.2h3.9v3.9h-3.9zM997.7 217.2h7.8v3.9h-7.8zM915.8 221.1h3.9v3.9h-3.9zM993.8 221.1h3.9v3.9h-3.9zM993.8 228.9h3.9v3.9h-3.9zM939.2 236.7h3.9v3.9h-3.9zM974.3 240.6h3.9v3.9h-3.9zM966.5 244.5h3.9v3.9h-3.9z"/>
<path fill="#383838" d="M958.7 41.7h3.9v3.9h-3.9zM966.5 41.7h7.8v3.9h-7.8zM927.5 45.6h3.9v3.9h-3.9zM919.7 49.5h3.9v3.9h-3.9zM927.5 49.5h3.9v3.9h-3.9zM939.2 49.5h7.8v3.9h-7.8zM915.8 53.4h3.9v3.9h-3.9zM923.6 53.4h3.9v3.9h-3.9zM908.0 57.3h3.9v3.9h-3.9zM943.1 57.3h3.9v3.9h-3.9zM1005.5 57.3h7.8v3.9h-7.8zM896.3 61.2h3.9v3.9h-3.9zM923.6 61.2h3.9v3.9h-3.9zM939.2 61.2h3.9v3.9h-3.9zM978.2 61.2h3.9v3.9h-3.9zM1001.6 61.2h3.9v3.9h-3.9zM1013.3 61.2h3.9v3.9h-3.9zM884.6 65.1h3.9v3.9h-3.9zM892.4 65.1h3.9v3.9h-3.9zM919.7 65.1h3.9v3.9h-3.9zM1001.6 65.1h3.9v3.9h-3.9zM1013.3 65.1h7.8v3.9h-7.8zM876.8 69.0h3.9v3.9h-3.9zM892.4 69.0h3.9v3.9h-3.9zM923.6 69.0h7.8v3.9h-7.8zM950.9 69.0h3.9v3.9h-3.9zM958.7 69.0h3.9v3.9h-3.9zM997.7 69.0h3.9v3.9h-3.9zM1005.5 69.0h7.8v3.9h-7.8zM1021.1 69.0h3.9v3.9h-3.9zM872.9 72.9h3.9v3.9h-3.9zM884.6 72.9h7.8v3.9h-7.8zM923.6 72.9h11.7v3.9h-11.7zM939.2 72.9h3.9v3.9h-3.9zM954.8 72.9h3.9v3.9h-3.9zM974.3 72.9h3.9v3.9h-3.9zM1032.8 72.9h3.9v3.9h-3.9zM876.8 76.8h3.9v3.9h-3.9zM884.6 76.8h3.9v3.9h-3.9zM900.2 76.8h3.9v3.9h-3.9zM927.5 76.8h15.6v3.9h-15.6zM950.9 76.8h3.9v3.9h-3.9zM966.5 76.8h3.9v3.9h-3.9zM1001.6 76.8h3.9v3.9h-3.9zM1009.4 76.8h3.9v3.9h-3.9zM1032.8 76.8h3.9v3.9h-3.9zM872.9 80.7h3.9v3.9h-3.9zM880.7 80.7h7.8v3.9h-7.8zM892.4 80.7h3.9v3.9h-3.9zM900.2 80.7h3.9v3.9h-3.9zM908.0 80.7h7.8v3.9h-7.8zM950.9 80.7h7.8v3.9h-7.8zM970.4 80.7h7.8v3.9h-7.8zM982.1 80.7h7.8v3.9h-7.8zM997.7 80.7h3.9v3.9h-3.9zM1009.4 80.7h3.9v3.9h-3.9zM1032.8 80.7h3.9v3.9h-3.9zM869.0 84.6h3.9v3.9h-3.9zM935.3 84.6h3.9v3.9h-3.9zM1009.4 84.6h3.9v3.9h-3.9zM1028.9 84.6h7.8v3.9h-7.8zM1040.6 84.6h3.9v3.9h-3.9zM869.0 88.5h3.9v3.9h-3.9zM884.6 88.5h3.9v3.9h-3.9zM927.5 88.5h3.9v3.9h-3.9zM939.2 88.5h3.9v3.9h-3.9zM947.0 88.5h7.8v3.9h-7.8zM986.0 88.5h3.9v3.9h-3.9zM1009.4 88.5h3.9v3.9h-3.9zM1021.1 88.5h7.8v3.9h-7.8zM1040.6 88.5h7.8v3.9h-7.8zM884.6 92.4h3.9v3.9h-3.9zM923.6 92.4h3.9v3.9h-3.9zM939.2 92.4h7.8v3.9h-7.8zM986.0 92.4h3.9v3.9h-3.9zM993.8 92.4h3.9v3.9h-3.9zM1013.3 92.4h3.9v3.9h-3.9zM1032.8 92.4h3.9v3.9h-3.9zM1048.4 92.4h3.9v3.9h-3.9zM884.6 96.3h3.9v3.9h-3.9zM892.4 96.3h3.9v3.9h-3.9zM915.8 96.3h7.8v3.9h-7.8zM986.0 96.3h3.9v3.9h-3.9zM997.7 96.3h3.9v3.9h-3.9zM1021.1 96.3h3.9v3.9h-3.9zM1032.8 96.3h3.9v3.9h-3.9zM1048.4 96.3h3.9v3.9h-3.9zM872.9 100.2h3.9v3.9h-3.9zM880.7 100.2h7.8v3.9h-7.8zM904.1 100.2h3.9v3.9h-3.9zM915.8 100.2h3.9v3.9h-3.9zM927.5 100.2h3.9v3.9h-3.9zM939.2 100.2h3.9v3.9h-3.9zM947.0 100.2h3.9v3.9h-3.9zM982.1 100.2h3.9v3.9h-3.9zM1005.5 100.2h7.8v3.9h-7.8zM1025.0 100.2h3.9v3.9h-3.9zM1052.3 100.2h3.9v3.9h-3.9zM1064.0 100.2h3.9v3.9h-3.9zM861.2 104.1h3.9v3.9h-3.9zM869.0 104.1h7.8v3.9h-7.8zM880.7 104.1h3.9v3.9h-3.9zM908.0 104.1h3.9v3.9h-3.9zM943.1 104.1h3.9v3.9h-3.9zM954.8 104.1h3.9v3.9h-3.9zM962.6 104.1h3.9v3.9h-3.9zM1001.6 104.1h3.9v3.9h-3.9zM1013.3 104.1h3.9v3.9h-3.9zM1028.9 104.1h7.8v3.9h-7.8zM1040.6 104.1h3.9v3.9h-3.9zM1052.3 104.1h3.9v3.9h-3.9zM1060.1 104.1h3.9v3.9h-3.9zM865.1 108.0h7.8v3.9h-7.8zM908.0 108.0h7.8v3.9h-7.8zM923.6 108.0h7.8v3.9h-7.8zM943.1 108.0h3.9v3.9h-3.9zM966.5 108.0h7.8v3.9h-7.8zM993.8 108.0h3.9v3.9h-3.9zM1005.5 108.0h3.9v3.9h-3.9zM1032.8 108.0h3.9v3.9h-3.9zM1056.2 108.0h3.9v3.9h-3.9zM857.3 111.9h11.7v3.9h-11.7zM876.8 111.9h15.6v3.9h-15.6zM900.2 111.9h7.8v3.9h-7.8zM915.8 111.9h3.9v3.9h-3.9zM923.6 111.9h3.9v3.9h-3.9zM947.0 111.9h11.7v3.9h-11.7zM993.8 111.9h3.9v3.9h-3.9zM1013.3 111.9h3.9v3.9h-3.9zM1032.8 111.9h3.9v3.9h-3.9zM1060.1 111.9h3.9v3.9h-3.9zM861.2 115.8h7.8v3.9h-7.8zM911.9 115.8h3.9v3.9h-3.9zM935.3 115.8h3.9v3.9h-3.9zM950.9 115.8h3.9v3.9h-3.9zM958.7 115.8h3.9v3.9h-3.9zM997.7 115.8h3.9v3.9h-3.9zM1025.0 115.8h3.9v3.9h-3.9zM1044.5 115.8h7.8v3.9h-7.8zM1056.2 115.8h11.7v3.9h-11.7zM857.3 119.7h7.8v3.9h-7.8zM880.7 119.7h3.9v3.9h-3.9zM908.0 119.7h3.9v3.9h-3.9zM915.8 119.7h3.9v3.9h-3.9zM939.2 119.7h3.9v3.9h-3.9zM993.8 119.7h11.7v3.9h-11.7zM1009.4 119.7h7.8v3.9h-7.8zM1025.0 119.7h3.9v3.9h-3.9zM1060.1 119.7h3.9v3.9h-3.9zM849.5 123.6h3.9v3.9h-3.9zM869.0 123.6h3.9v3.9h-3.9zM876.8 123.6h3.9v3.9h-3.9zM970.4 123.6h7.8v3.9h-7.8zM1028.9 123.6h7.8v3.9h-7.8zM1052.3 123.6h3.9v3.9h-3.9zM845.6 127.5h3.9v3.9h-3.9zM853.4 127.5h7.8v3.9h-7.8zM888.5 127.5h7.8v3.9h-7.8zM947.0 127.5h3.9v3.9h-3.9zM966.5 127.5h3.9v3.9h-3.9zM1005.5 127.5h3.9v3.9h-3.9zM1013.3 127.5h3.9v3.9h-3.9zM1025.0 127.5h3.9v3.9h-3.9zM1048.4 127.5h3.9v3.9h-3.9zM1060.1 127.5h7.8v3.9h-7.8zM845.6 131.4h3.9v3.9h-3.9zM857.3 131.4h7.8v3.9h-7.8zM904.1 131.4h3.9v3.9h-3.9zM911.9 131.4h3.9v3.9h-3.9zM958.7 131.4h3.9v3.9h-3.9zM1017.2 131.4h3.9v3.9h-3.9zM1025.0 131.4h3.9v3.9h-3.9zM1032.8 131.4h3.9v3.9h-3.9zM1052.3 131.4h7.8v3.9h-7.8zM853.4 135.3h7.8v3.9h-7.8zM872.9 135.3h3.9v3.9h-3.9zM888.5 135.3h3.9v3.9h-3.9zM978.2 135.3h3.9v3.9h-3.9zM1009.4 135.3h3.9v3.9h-3.9zM1028.9 135.3h3.9v3.9h-3.9zM1040.6 135.3h7.8v3.9h-7.8zM861.2 139.2h3.9v3.9h-3.9zM872.9 139.2h3.9v3.9h-3.9zM888.5 139.2h3.9v3.9h-3.9zM908.0 139.2h3.9v3.9h-3.9zM923.6 139.2h15.6v3.9h-15.6zM970.4 139.2h3.9v3.9h-3.9zM1009.4 139.2h3.9v3.9h-3.9zM1048.4 139.2h3.9v3.9h-3.9zM861.2 143.1h3.9v3.9h-3.9zM869.0 143.1h3.9v3.9h-3.9zM892.4 143.1h3.9v3.9h-3.9zM900.2 143.1h3.9v3.9h-3.9zM908.0 143.1h3.9v3.9h-3.9zM915.8 143.1h7.8v3.9h-7.8zM931.4 143.1h7.8v3.9h-7.8zM947.0 143.1h3.9v3.9h-3.9zM966.5 143.1h3.9v3.9h-3.9zM1009.4 143.1h3.9v3.9h-3.9zM1036.7 143.1h3.9v3.9h-3.9zM1044.5 143.1h3.9v3.9h-3.9zM1075.7 143.1h3.9v3.9h-3.9zM865.1 147.0h7.8v3.9h-7.8zM876.8 147.0h7.8v3.9h-7.8zM888.5 147.0h3.9v3.9h-3.9zM908.0 147.0h3.9v3.9h-3.9zM919.7 147.0h3.9v3.9h-3.9zM927.5 147.0h3.9v3.9h-3.9zM943.1 147.0h3.9v3.9h-3.9zM978.2 147.0h3.9v3.9h-3.9zM986.0 147.0h3.9v3.9h-3.9zM1009.4 147.0h3.9v3.9h-3.9zM1025.0 147.0h7.8v3.9h-7.8zM1064.0 147.0h3.9v3.9h-3.9zM1071.8 147.0h3.9v3.9h-3.9zM872.9 150.9h3.9v3.9h-3.9zM892.4 150.9h3.9v3.9h-3.9zM904.1 150.9h3.9v3.9h-3.9zM915.8 150.9h3.9v3.9h-3.9zM927.5 150.9h15.6v3.9h-15.6zM954.8 150.9h3.9v3.9h-3.9zM974.3 150.9h3.9v3.9h-3.9zM986.0 150.9h3.9v3.9h-3.9zM1021.1 150.9h3.9v3.9h-3.9zM1032.8 150.9h3.9v3.9h-3.9zM1064.0 150.9h3.9v3.9h-3.9zM849.5 154.8h3.9v3.9h-3.9zM876.8 154.8h3.9v3.9h-3.9zM908.0 154.8h3.9v3.9h-3.9zM923.6 154.8h3.9v3.9h-3.9zM935.3 154.8h11.7v3.9h-11.7zM974.3 154.8h3.9v3.9h-3.9zM1009.4 154.8h3.9v3.9h-3.9zM1028.9 154.8h3.9v3.9h-3.9zM1044.5 154.8h3.9v3.9h-3.9zM1064.0 154.8h3.9v3.9h-3.9zM876.8 158.7h3.9v3.9h-3.9zM904.1 158.7h3.9v3.9h-3.9zM911.9 158.7h11.7v3.9h-11.7zM935.3 158.7h7.8v3.9h-7.8zM966.5 158.7h15.6v3.9h-15.6zM989.9 158.7h7.8v3.9h-7.8zM1028.9 158.7h7.8v3.9h-7.8zM1052.3 158.7h3.9v3.9h-3.9zM1060.1 158.7h3.9v3.9h-3.9zM911.9 162.6h7.8v3.9h-7.8zM923.6 162.6h3.9v3.9h-3.9zM935.3 162.6h7.8v3.9h-7.8zM966.5 162.6h3.9v3.9h-3.9zM974.3 162.6h3.9v3.9h-3.9zM986.0 162.6h3.9v3.9h-3.9zM1021.1 162.6h11.7v3.9h-11.7zM1071.8 162.6h3.9v3.9h-3.9zM872.9 166.5h3.9v3.9h-3.9zM915.8 166.5h3.9v3.9h-3.9zM923.6 166.5h3.9v3.9h-3.9zM931.4 166.5h3.9v3.9h-3.9zM954.8 166.5h3.9v3.9h-3.9zM989.9 166.5h3.9v3.9h-3.9zM1005.5 166.5h3.9v3.9h-3.9zM1028.9 166.5h3.9v3.9h-3.9zM853.4 170.4h3.9v3.9h-3.9zM872.9 170.4h3.9v3.9h-3.9zM884.6 170.4h3.9v3.9h-3.9zM892.4 170.4h3.9v3.9h-3.9zM915.8 170.4h3.9v3.9h-3.9zM931.4 170.4h3.9v3.9h-3.9zM970.4 170.4h3.9v3.9h-3.9zM986.0 170.4h3.9v3.9h-3.9zM997.7 170.4h11.7v3.9h-11.7zM1013.3 170.4h7.8v3.9h-7.8zM1044.5 170.4h3.9v3.9h-3.9zM872.9 174.3h3.9v3.9h-3.9zM884.6 174.3h3.9v3.9h-3.9zM927.5 174.3h3.9v3.9h-3.9zM982.1 174.3h3.9v3.9h-3.9zM997.7 174.3h3.9v3.9h-3.9zM1009.4 174.3h7.8v3.9h-7.8zM1021.1 174.3h7.8v3.9h-7.8zM1064.0 174.3h3.9v3.9h-3.9zM884.6 178.2h3.9v3.9h-3.9zM900.2 178.2h3.9v3.9h-3.9zM911.9 178.2h19.5v3.9h-19.5zM939.2 178.2h3.9v3.9h-3.9zM970.4 178.2h7.8v3.9h-7.8zM997.7 178.2h3.9v3.9h-3.9zM1052.3 178.2h3.9v3.9h-3.9zM904.1 182.1h3.9v3.9h-3.9zM915.8 182.1h3.9v3.9h-3.9zM923.6 182.1h3.9v3.9h-3.9zM966.5 182.1h7.8v3.9h-7.8zM982.1 182.1h3.9v3.9h-3.9zM989.9 182.1h11.7v3.9h-11.7zM1009.4 182.1h3.9v3.9h-3.9zM1021.1 182.1h7.8v3.9h-7.8zM880.7 186.0h3.9v3.9h-3.9zM904.1 186.0h3.9v3.9h-3.9zM970.4 186.0h3.9v3.9h-3.9zM1001.6 186.0h3.9v3.9h-3.9zM1009.4 186.0h3.9v3.9h-3.9zM1044.5 186.0h3.9v3.9h-3.9zM1052.3 186.0h3.9v3.9h-3.9zM896.3 189.9h3.9v3.9h-3.9zM954.8 189.9h3.9v3.9h-3.9zM962.6 189.9h7.8v3.9h-7.8zM1021.1 189.9h3.9v3.9h-3.9zM1032.8 189.9h3.9v3.9h-3.9zM927.5 193.8h3.9v3.9h-3.9zM974.3 193.8h3.9v3.9h-3.9zM982.1 193.8h11.7v3.9h-11.7zM997.7 193.8h3.9v3.9h-3.9zM989.9 197.7h3.9v3.9h-3.9zM927.5 201.6h3.9v3.9h-3.9zM989.9 201.6h3.9v3.9h-3.9zM927.5 209.4h3.9v3.9h-3.9zM986.0 209.4h7.8v3.9h-7.8zM1017.2 209.4h3.9v3.9h-3.9zM908.0 213.3h3.9v3.9h-3.9zM923.6 213.3h3.9v3.9h-3.9zM993.8 213.3h3.9v3.9h-3.9zM1005.5 213.3h7.8v3.9h-7.8zM989.9 217.2h3.9v3.9h-3.9zM997.7 221.1h3.9v3.9h-3.9zM923.6 225.0h3.9v3.9h-3.9zM954.8 225.0h3.9v3.9h-3.9zM993.8 225.0h3.9v3.9h-3.9zM947.0 232.8h3.9v3.9h-3.9zM943.1 236.7h7.8v3.9h-7.8z"/>
<path fill="#404040" d="M962.6 41.7h3.9v3.9h-3.9zM986.0 45.6h3.9v3.9h-3.9zM923.6 49.5h3.9v3.9h-3.9zM931.4 49.5h3.9v3.9h-3.9zM947.0 49.5h3.9v3.9h-3.9zM919.7 53.4h3.9v3.9h-3.9zM927.5 53.4h3.9v3.9h-3.9zM943.1 53.4h3.9v3.9h-3.9zM997.7 53.4h3.9v3.9h-3.9zM915.8 57.3h3.9v3.9h-3.9zM931.4 57.3h3.9v3.9h-3.9zM950.9 57.3h3.9v3.9h-3.9zM997.7 57.3h3.9v3.9h-3.9zM919.7 61.2h3.9v3.9h-3.9zM927.5 61.2h11.7v3.9h-11.7zM947.0 61.2h3.9v3.9h-3.9zM958.7 61.2h7.8v3.9h-7.8zM970.4 61.2h7.8v3.9h-7.8zM997.7 61.2h3.9v3.9h-3.9zM1009.4 61.2h3.9v3.9h-3.9zM915.8 65.1h3.9v3.9h-3.9zM927.5 65.1h15.6v3.9h-15.6zM966.5 65.1h7.8v3.9h-7.8zM986.0 65.1h7.8v3.9h-7.8zM1025.0 65.1h3.9v3.9h-3.9zM888.5 69.0h3.9v3.9h-3.9zM931.4 69.0h7.8v3.9h-7.8zM943.1 69.0h3.9v3.9h-3.9zM954.8 69.0h3.9v3.9h-3.9zM962.6 69.0h3.9v3.9h-3.9zM970.4 69.0h3.9v3.9h-3.9zM1013.3 69.0h7.8v3.9h-7.8zM880.7 72.9h3.9v3.9h-3.9zM896.3 72.9h3.9v3.9h-3.9zM935.3 72.9h3.9v3.9h-3.9zM1005.5 72.9h3.9v3.9h-3.9zM1017.2 72.9h7.8v3.9h-7.8zM865.1 76.8h3.9v3.9h-3.9zM896.3 76.8h3.9v3.9h-3.9zM923.6 76.8h3.9v3.9h-3.9zM970.4 76.8h3.9v3.9h-3.9zM1028.9 76.8h3.9v3.9h-3.9zM861.2 80.7h3.9v3.9h-3.9zM888.5 80.7h3.9v3.9h-3.9zM927.5 80.7h11.7v3.9h-11.7zM989.9 80.7h7.8v3.9h-7.8zM1013.3 80.7h3.9v3.9h-3.9zM1036.7 80.7h3.9v3.9h-3.9zM857.3 84.6h3.9v3.9h-3.9zM884.6 84.6h3.9v3.9h-3.9zM911.9 84.6h11.7v3.9h-11.7zM931.4 84.6h3.9v3.9h-3.9zM982.1 84.6h15.6v3.9h-15.6zM1005.5 84.6h3.9v3.9h-3.9zM1017.2 84.6h3.9v3.9h-3.9zM1052.3 84.6h3.9v3.9h-3.9zM861.2 88.5h7.8v3.9h-7.8zM888.5 88.5h11.7v3.9h-11.7zM904.1 88.5h11.7v3.9h-11.7zM919.7 88.5h3.9v3.9h-3.9zM935.3 88.5h3.9v3.9h-3.9zM970.4 88.5h3.9v3.9h-3.9zM993.8 88.5h7.8v3.9h-7.8zM1005.5 88.5h3.9v3.9h-3.9zM1013.3 88.5h7.8v3.9h-7.8zM1048.4 88.5h3.9v3.9h-3.9zM853.4 92.4h3.9v3.9h-3.9zM865.1 92.4h3.9v3.9h-3.9zM892.4 92.4h3.9v3.9h-3.9zM931.4 92.4h7.8v3.9h-7.8zM966.5 92.4h3.9v3.9h-3.9zM982.1 92.4h3.9v3.9h-3.9zM997.7 92.4h7.8v3.9h-7.8zM1009.4 92.4h3.9v3.9h-3.9zM1021.1 92.4h11.7v3.9h-11.7zM1052.3 92.4h3.9v3.9h-3.9zM853.4 96.3h3.9v3.9h-3.9zM865.1 96.3h7.8v3.9h-7.8zM923.6 96.3h3.9v3.9h-3.9zM935.3 96.3h7.8v3.9h-7.8zM947.0 96.3h3.9v3.9h-3.9zM954.8 96.3h3.9v3.9h-3.9zM962.6 96.3h23.4v3.9h-23.4zM1028.9 96.3h3.9v3.9h-3.9zM857.3 100.2h7.8v3.9h-7.8zM935.3 100.2h3.9v3.9h-3.9zM958.7 100.2h11.7v3.9h-11.7zM1001.6 100.2h3.9v3.9h-3.9zM1028.9 100.2h3.9v3.9h-3.9zM1048.4 100.2h3.9v3.9h-3.9zM1056.2 100.2h3.9v3.9h-3.9zM857.3 104.1h3.9v3.9h-3.9zM911.9 104.1h3.9v3.9h-3.9zM919.7 104.1h3.9v3.9h-3.9zM931.4 104.1h7.8v3.9h-7.8zM950.9 104.1h3.9v3.9h-3.9zM958.7 104.1h3.9v3.9h-3.9zM966.5 104.1h3.9v3.9h-3.9zM1005.5 104.1h3.9v3.9h-3.9zM1044.5 104.1h3.9v3.9h-3.9zM853.4 108.0h3.9v3.9h-3.9zM919.7 108.0h3.9v3.9h-3.9zM931.4 108.0h11.7v3.9h-11.7zM950.9 108.0h7.8v3.9h-7.8zM1025.0 108.0h7.8v3.9h-7.8zM1036.7 108.0h3.9v3.9h-3.9zM853.4 111.9h3.9v3.9h-3.9zM892.4 111.9h3.9v3.9h-3.9zM931.4 111.9h3.9v3.9h-3.9zM939.2 111.9h3.9v3.9h-3.9zM1028.9 111.9h3.9v3.9h-3.9zM1064.0 111.9h3.9v3.9h-3.9zM849.5 115.8h3.9v3.9h-3.9zM857.3 115.8h3.9v3.9h-3.9zM880.7 115.8h3.9v3.9h-3.9zM900.2 115.8h3.9v3.9h-3.9zM943.1 115.8h3.9v3.9h-3.9zM1001.6 115.8h3.9v3.9h-3.9zM1013.3 115.8h11.7v3.9h-11.7zM1032.8 115.8h7.8v3.9h-7.8zM1052.3 115.8h3.9v3.9h-3.9zM1067.9 115.8h3.9v3.9h-3.9zM853.4 119.7h3.9v3.9h-3.9zM869.0 119.7h3.9v3.9h-3.9zM876.8 119.7h3.9v3.9h-3.9zM884.6 119.7h3.9v3.9h-3.9zM982.1 119.7h3.9v3.9h-3.9zM1017.2 119.7h3.9v3.9h-3.9zM1032.8 119.7h3.9v3.9h-3.9zM1052.3 119.7h3.9v3.9h-3.9zM1064.0 119.7h3.9v3.9h-3.9zM853.4 123.6h7.8v3.9h-7.8zM872.9 123.6h3.9v3.9h-3.9zM880.7 123.6h7.8v3.9h-7.8zM896.3 123.6h3.9v3.9h-3.9zM904.1 123.6h11.7v3.9h-11.7zM939.2 123.6h3.9v3.9h-3.9zM978.2 123.6h3.9v3.9h-3.9zM1009.4 123.6h3.9v3.9h-3.9zM1048.4 123.6h3.9v3.9h-3.9zM1060.1 123.6h3.9v3.9h-3.9zM876.8 127.5h7.8v3.9h-7.8zM896.3 127.5h19.5v3.9h-19.5zM962.6 127.5h3.9v3.9h-3.9zM970.4 127.5h3.9v3.9h-3.9zM1001.6 127.5h3.9v3.9h-3.9zM1032.8 127.5h7.8v3.9h-7.8zM1044.5 127.5h3.9v3.9h-3.9zM1056.2 127.5h3.9v3.9h-3.9zM849.5 131.4h7.8v3.9h-7.8zM865.1 131.4h7.8v3.9h-7.8zM908.0 131.4h3.9v3.9h-3.9zM919.7 131.4h7.8v3.9h-7.8zM993.8 131.4h7.8v3.9h-7.8zM1005.5 131.4h7.8v3.9h-7.8zM1040.6 131.4h7.8v3.9h-7.8zM1060.1 131.4h7.8v3.9h-7.8zM1071.8 131.4h3.9v3.9h-3.9zM849.5 135.3h3.9v3.9h-3.9zM861.2 135.3h7.8v3.9h-7.8zM904.1 135.3h7.8v3.9h-7.8zM915.8 135.3h11.7v3.9h-11.7zM931.4 135.3h3.9v3.9h-3.9zM958.7 135.3h3.9v3.9h-3.9zM1005.5 135.3h3.9v3.9h-3.9zM1036.7 135.3h3.9v3.9h-3.9zM1048.4 135.3h3.9v3.9h-3.9zM853.4 139.2h7.8v3.9h-7.8zM865.1 139.2h7.8v3.9h-7.8zM892.4 139.2h3.9v3.9h-3.9zM911.9 139.2h11.7v3.9h-11.7zM943.1 139.2h3.9v3.9h-3.9zM950.9 139.2h3.9v3.9h-3.9zM958.7 139.2h3.9v3.9h-3.9zM1005.5 139.2h3.9v3.9h-3.9zM1040.6 139.2h3.9v3.9h-3.9zM1052.3 139.2h7.8v3.9h-7.8zM1067.9 139.2h3.9v3.9h-3.9zM853.4 143.1h7.8v3.9h-7.8zM865.1 143.1h3.9v3.9h-3.9zM904.1 143.1h3.9v3.9h-3.9zM923.6 143.1h3.9v3.9h-3.9zM950.9 143.1h7.8v3.9h-7.8zM1005.5 143.1h3.9v3.9h-3.9zM1032.8 143.1h3.9v3.9h-3.9zM1052.3 143.1h7.8v3.9h-7.8zM1067.9 143.1h3.9v3.9h-3.9zM853.4 147.0h3.9v3.9h-3.9zM872.9 147.0h3.9v3.9h-3.9zM884.6 147.0h3.9v3.9h-3.9zM892.4 147.0h3.9v3.9h-3.9zM911.9 147.0h3.9v3.9h-3.9zM931.4 147.0h3.9v3.9h-3.9zM947.0 147.0h3.9v3.9h-3.9zM966.5 147.0h3.9v3.9h-3.9zM989.9 147.0h3.9v3.9h-3.9zM1032.8 147.0h3.9v3.9h-3.9zM1040.6 147.0h3.9v3.9h-3.9zM1048.4 147.0h15.6v3.9h-15.6zM1067.9 147.0h3.9v3.9h-3.9zM857.3 150.9h3.9v3.9h-3.9zM865.1 150.9h7.8v3.9h-7.8zM876.8 150.9h3.9v3.9h-3.9zM900.2 150.9h3.9v3.9h-3.9zM966.5 150.9h3.9v3.9h-3.9zM978.2 150.9h7.8v3.9h-7.8zM989.9 150.9h7.8v3.9h-7.8zM1005.5 150.9h3.9v3.9h-3.9zM1025.0 150.9h7.8v3.9h-7.8zM1040.6 150.9h3.9v3.9h-3.9zM1048.4 150.9h3.9v3.9h-3.9zM1060.1 150.9h3.9v3.9h-3.9zM869.0 154.8h7.8v3.9h-7.8zM880.7 154.8h11.7v3.9h-11.7zM900.2 154.8h7.8v3.9h-7.8zM911.9 154.8h7.8v3.9h-7.8zM927.5 154.8h7.8v3.9h-7.8zM962.6 154.8h11.7v3.9h-11.7zM982.1 154.8h15.6v3.9h-15.6zM1001.6 154.8h3.9v3.9h-3.9zM1017.2 154.8h3.9v3.9h-3.9zM1025.0 154.8h3.9v3.9h-3.9zM1032.8 154.8h11.7v3.9h-11.7zM1052.3 154.8h3.9v3.9h-3.9zM849.5 158.7h3.9v3.9h-3.9zM857.3 158.7h3.9v3.9h-3.9zM865.1 158.7h11.7v3.9h-11.7zM896.3 158.7h7.8v3.9h-7.8zM923.6 158.7h3.9v3.9h-3.9zM931.4 158.7h3.9v3.9h-3.9zM982.1 158.7h7.8v3.9h-7.8zM1017.2 158.7h3.9v3.9h-3.9zM1036.7 158.7h3.9v3.9h-3.9zM853.4 162.6h3.9v3.9h-3.9zM865.1 162.6h3.9v3.9h-3.9zM954.8 162.6h3.9v3.9h-3.9zM978.2 162.6h7.8v3.9h-7.8zM1017.2 162.6h3.9v3.9h-3.9zM853.4 166.5h3.9v3.9h-3.9zM861.2 166.5h7.8v3.9h-7.8zM927.5 166.5h3.9v3.9h-3.9zM970.4 166.5h7.8v3.9h-7.8zM986.0 166.5h3.9v3.9h-3.9zM993.8 166.5h7.8v3.9h-7.8zM1032.8 166.5h3.9v3.9h-3.9zM1044.5 166.5h3.9v3.9h-3.9zM1067.9 166.5h3.9v3.9h-3.9zM857.3 170.4h3.9v3.9h-3.9zM869.0 170.4h3.9v3.9h-3.9zM927.5 170.4h3.9v3.9h-3.9zM974.3 170.4h3.9v3.9h-3.9zM982.1 170.4h3.9v3.9h-3.9zM993.8 170.4h3.9v3.9h-3.9zM1009.4 170.4h3.9v3.9h-3.9zM869.0 174.3h3.9v3.9h-3.9zM888.5 174.3h7.8v3.9h-7.8zM966.5 174.3h11.7v3.9h-11.7zM989.9 174.3h3.9v3.9h-3.9zM1005.5 174.3h3.9v3.9h-3.9zM1040.6 174.3h3.9v3.9h-3.9zM872.9 178.2h3.9v3.9h-3.9zM904.1 178.2h3.9v3.9h-3.9zM966.5 178.2h3.9v3.9h-3.9zM1028.9 178.2h3.9v3.9h-3.9zM1044.5 178.2h7.8v3.9h-7.8zM888.5 182.1h3.9v3.9h-3.9zM919.7 182.1h3.9v3.9h-3.9zM943.1 182.1h3.9v3.9h-3.9zM974.3 182.1h3.9v3.9h-3.9zM1032.8 182.1h3.9v3.9h-3.9zM1048.4 182.1h7.8v3.9h-7.8zM872.9 186.0h3.9v3.9h-3.9zM896.3 186.0h7.8v3.9h-7.8zM954.8 186.0h3.9v3.9h-3.9zM962.6 186.0h7.8v3.9h-7.8zM1025.0 186.0h7.8v3.9h-7.8zM900.2 189.9h3.9v3.9h-3.9zM1009.4 189.9h3.9v3.9h-3.9zM919.7 193.8h3.9v3.9h-3.9zM931.4 193.8h11.7v3.9h-11.7zM950.9 193.8h3.9v3.9h-3.9zM1001.6 193.8h3.9v3.9h-3.9zM1017.2 193.8h3.9v3.9h-3.9zM935.3 197.7h3.9v3.9h-3.9zM950.9 197.7h3.9v3.9h-3.9zM978.2 197.7h3.9v3.9h-3.9zM993.8 197.7h3.9v3.9h-3.9zM978.2 201.6h3.9v3.9h-3.9zM900.2 205.5h3.9v3.9h-3.9zM931.4 205.5h3.9v3.9h-3.9zM978.2 205.5h3.9v3.9h-3.9zM989.9 205.5h3.9v3.9h-3.9zM978.2 209.4h7.8v3.9h-7.8zM989.9 213.3h3.9v3.9h-3.9zM997.7 213.3h7.8v3.9h-7.8zM993.8 217.2h3.9v3.9h-3.9zM919.7 221.1h3.9v3.9h-3.9zM927.5 221.1h7.8v3.9h-7.8zM954.8 221.1h3.9v3.9h-3.9zM927.5 225.0h11.7v3.9h-11.7zM958.7 225.0h3.9v3.9h-3.9zM950.9 228.9h7.8v3.9h-7.8zM939.2 232.8h3.9v3.9h-3.9zM950.9 232.8h7.8v3.9h-7.8zM982.1 232.8h3.9v3.9h-3.9zM950.9 236.7h3.9v3.9h-3.9zM950.9 240.6h3.9v3.9h-3.9zM970.4 240.6h3.9v3.9h-3.9zM954.8 244.5h3.9v3.9h-3.9z"/>
<path fill="#4a4a4a" d="M943.1 45.6h7.8v3.9h-7.8zM954.8 45.6h3.9v3.9h-3.9zM950.9 49.5h3.9v3.9h-3.9zM993.8 49.5h3.9v3.9h-3.9zM947.0 53.4h11.7v3.9h-11.7zM947.0 57.3h3.9v3.9h-3.9zM993.8 57.3h3.9v3.9h-3.9zM1001.6 57.3h3.9v3.9h-3.9zM943.1 61.2h3.9v3.9h-3.9zM954.8 61.2h3.9v3.9h-3.9zM966.5 61.2h3.9v3.9h-3.9zM982.1 61.2h15.6v3.9h-15.6zM1005.5 61.2h3.9v3.9h-3.9zM888.5 65.1h3.9v3.9h-3.9zM923.6 65.1h3.9v3.9h-3.9zM943.1 65.1h23.4v3.9h-23.4zM993.8 65.1h3.9v3.9h-3.9zM1009.4 65.1h3.9v3.9h-3.9zM1021.1 65.1h3.9v3.9h-3.9zM966.5 69.0h3.9v3.9h-3.9zM1025.0 69.0h3.9v3.9h-3.9zM970.4 72.9h3.9v3.9h-3.9zM1009.4 72.9h7.8v3.9h-7.8zM1036.7 72.9h3.9v3.9h-3.9zM869.0 76.8h3.9v3.9h-3.9zM1005.5 76.8h3.9v3.9h-3.9zM1021.1 76.8h7.8v3.9h-7.8zM869.0 80.7h3.9v3.9h-3.9zM896.3 80.7h3.9v3.9h-3.9zM904.1 80.7h3.9v3.9h-3.9zM923.6 80.7h3.9v3.9h-3.9zM1001.6 80.7h7.8v3.9h-7.8zM1021.1 80.7h11.7v3.9h-11.7zM861.2 84.6h7.8v3.9h-7.8zM892.4 84.6h3.9v3.9h-3.9zM904.1 84.6h7.8v3.9h-7.8zM923.6 84.6h7.8v3.9h-7.8zM978.2 84.6h3.9v3.9h-3.9zM997.7 84.6h7.8v3.9h-7.8zM1021.1 84.6h7.8v3.9h-7.8zM857.3 88.5h3.9v3.9h-3.9zM900.2 88.5h3.9v3.9h-3.9zM915.8 88.5h3.9v3.9h-3.9zM974.3 88.5h3.9v3.9h-3.9zM982.1 88.5h3.9v3.9h-3.9zM1001.6 88.5h3.9v3.9h-3.9zM1028.9 88.5h3.9v3.9h-3.9zM1052.3 88.5h3.9v3.9h-3.9zM861.2 92.4h3.9v3.9h-3.9zM888.5 92.4h3.9v3.9h-3.9zM915.8 92.4h7.8v3.9h-7.8zM970.4 92.4h7.8v3.9h-7.8zM857.3 96.3h7.8v3.9h-7.8zM888.5 96.3h3.9v3.9h-3.9zM950.9 96.3h3.9v3.9h-3.9zM958.7 96.3h3.9v3.9h-3.9zM1025.0 96.3h3.9v3.9h-3.9zM1056.2 96.3h7.8v3.9h-7.8zM869.0 100.2h3.9v3.9h-3.9zM919.7 100.2h3.9v3.9h-3.9zM950.9 100.2h7.8v3.9h-7.8zM997.7 100.2h3.9v3.9h-3.9zM1060.1 100.2h3.9v3.9h-3.9zM865.1 104.1h3.9v3.9h-3.9zM915.8 104.1h3.9v3.9h-3.9zM923.6 104.1h3.9v3.9h-3.9zM939.2 104.1h3.9v3.9h-3.9zM997.7 104.1h3.9v3.9h-3.9zM997.7 108.0h7.8v3.9h-7.8zM935.3 111.9h3.9v3.9h-3.9zM943.1 111.9h3.9v3.9h-3.9zM997.7 111.9h3.9v3.9h-3.9zM1036.7 111.9h7.8v3.9h-7.8zM884.6 115.8h15.6v3.9h-15.6zM939.2 115.8h3.9v3.9h-3.9zM1040.6 115.8h3.9v3.9h-3.9zM896.3 119.7h3.9v3.9h-3.9zM904.1 119.7h3.9v3.9h-3.9zM911.9 119.7h3.9v3.9h-3.9zM931.4 119.7h3.9v3.9h-3.9zM1044.5 119.7h7.8v3.9h-7.8zM861.2 123.6h7.8v3.9h-7.8zM888.5 123.6h7.8v3.9h-7.8zM900.2 123.6h3.9v3.9h-3.9zM1036.7 123.6h3.9v3.9h-3.9zM1067.9 123.6h3.9v3.9h-3.9zM849.5 127.5h3.9v3.9h-3.9zM865.1 127.5h11.7v3.9h-11.7zM1040.6 127.5h3.9v3.9h-3.9zM1067.9 127.5h3.9v3.9h-3.9zM872.9 131.4h7.8v3.9h-7.8zM892.4 131.4h3.9v3.9h-3.9zM900.2 131.4h3.9v3.9h-3.9zM931.4 131.4h3.9v3.9h-3.9zM1001.6 131.4h3.9v3.9h-3.9zM1036.7 131.4h3.9v3.9h-3.9zM1067.9 131.4h3.9v3.9h-3.9zM869.0 135.3h3.9v3.9h-3.9zM892.4 135.3h3.9v3.9h-3.9zM900.2 135.3h3.9v3.9h-3.9zM911.9 135.3h3.9v3.9h-3.9zM927.5 135.3h3.9v3.9h-3.9zM935.3 135.3h3.9v3.9h-3.9zM997.7 135.3h7.8v3.9h-7.8zM1056.2 135.3h11.7v3.9h-11.7zM1071.8 135.3h3.9v3.9h-3.9zM904.1 139.2h3.9v3.9h-3.9zM939.2 139.2h3.9v3.9h-3.9zM947.0 139.2h3.9v3.9h-3.9zM966.5 139.2h3.9v3.9h-3.9zM993.8 139.2h3.9v3.9h-3.9zM1036.7 139.2h3.9v3.9h-3.9zM1060.1 139.2h3.9v3.9h-3.9zM1071.8 139.2h3.9v3.9h-3.9zM849.5 143.1h3.9v3.9h-3.9zM896.3 143.1h3.9v3.9h-3.9zM927.5 143.1h3.9v3.9h-3.9zM943.1 143.1h3.9v3.9h-3.9zM962.6 143.1h3.9v3.9h-3.9zM1040.6 143.1h3.9v3.9h-3.9zM1060.1 143.1h7.8v3.9h-7.8zM849.5 147.0h3.9v3.9h-3.9zM857.3 147.0h7.8v3.9h-7.8zM954.8 147.0h3.9v3.9h-3.9zM1005.5 147.0h3.9v3.9h-3.9zM1036.7 147.0h3.9v3.9h-3.9zM849.5 150.9h7.8v3.9h-7.8zM861.2 150.9h3.9v3.9h-3.9zM880.7 150.9h11.7v3.9h-11.7zM911.9 150.9h3.9v3.9h-3.9zM943.1 150.9h3.9v3.9h-3.9zM962.6 150.9h3.9v3.9h-3.9zM997.7 150.9h7.8v3.9h-7.8zM1009.4 150.9h3.9v3.9h-3.9zM1036.7 150.9h3.9v3.9h-3.9zM1044.5 150.9h3.9v3.9h-3.9zM1052.3 150.9h7.8v3.9h-7.8zM861.2 154.8h7.8v3.9h-7.8zM958.7 154.8h3.9v3.9h-3.9zM978.2 154.8h3.9v3.9h-3.9zM1005.5 154.8h3.9v3.9h-3.9zM1013.3 154.8h3.9v3.9h-3.9zM1021.1 154.8h3.9v3.9h-3.9zM1048.4 154.8h3.9v3.9h-3.9zM1056.2 154.8h7.8v3.9h-7.8zM853.4 158.7h3.9v3.9h-3.9zM861.2 158.7h3.9v3.9h-3.9zM927.5 158.7h3.9v3.9h-3.9zM962.6 158.7h3.9v3.9h-3.9zM1013.3 158.7h3.9v3.9h-3.9zM1021.1 158.7h7.8v3.9h-7.8zM1040.6 158.7h3.9v3.9h-3.9zM869.0 162.6h7.8v3.9h-7.8zM927.5 162.6h3.9v3.9h-3.9zM962.6 162.6h3.9v3.9h-3.9zM1036.7 162.6h3.9v3.9h-3.9zM1044.5 162.6h3.9v3.9h-3.9zM857.3 166.5h3.9v3.9h-3.9zM869.0 166.5h3.9v3.9h-3.9zM978.2 166.5h7.8v3.9h-7.8zM1013.3 166.5h3.9v3.9h-3.9zM1036.7 166.5h7.8v3.9h-7.8zM861.2 170.4h3.9v3.9h-3.9zM954.8 170.4h3.9v3.9h-3.9zM966.5 170.4h3.9v3.9h-3.9zM989.9 170.4h3.9v3.9h-3.9zM1025.0 170.4h19.5v3.9h-19.5zM861.2 174.3h3.9v3.9h-3.9zM880.7 174.3h3.9v3.9h-3.9zM1001.6 174.3h3.9v3.9h-3.9zM1028.9 174.3h7.8v3.9h-7.8zM1060.1 174.3h3.9v3.9h-3.9zM869.0 178.2h3.9v3.9h-3.9zM876.8 178.2h7.8v3.9h-7.8zM888.5 178.2h11.7v3.9h-11.7zM1009.4 178.2h3.9v3.9h-3.9zM1025.0 178.2h3.9v3.9h-3.9zM1032.8 178.2h7.8v3.9h-7.8zM872.9 182.1h7.8v3.9h-7.8zM884.6 182.1h3.9v3.9h-3.9zM892.4 182.1h11.7v3.9h-11.7zM927.5 182.1h3.9v3.9h-3.9zM950.9 182.1h3.9v3.9h-3.9zM1001.6 182.1h7.8v3.9h-7.8zM1028.9 182.1h3.9v3.9h-3.9zM1040.6 182.1h7.8v3.9h-7.8zM876.8 186.0h3.9v3.9h-3.9zM884.6 186.0h11.7v3.9h-11.7zM958.7 186.0h3.9v3.9h-3.9zM1005.5 186.0h3.9v3.9h-3.9zM1036.7 186.0h7.8v3.9h-7.8zM904.1 189.9h3.9v3.9h-3.9zM904.1 193.8h3.9v3.9h-3.9zM911.9 193.8h7.8v3.9h-7.8zM923.6 193.8h3.9v3.9h-3.9zM943.1 193.8h7.8v3.9h-7.8zM954.8 193.8h3.9v3.9h-3.9zM962.6 193.8h11.7v3.9h-11.7zM1013.3 193.8h3.9v3.9h-3.9zM900.2 197.7h3.9v3.9h-3.9zM931.4 197.7h3.9v3.9h-3.9zM939.2 197.7h3.9v3.9h-3.9zM947.0 197.7h3.9v3.9h-3.9zM954.8 197.7h11.7v3.9h-11.7zM970.4 197.7h7.8v3.9h-7.8zM1017.2 197.7h3.9v3.9h-3.9zM931.4 201.6h7.8v3.9h-7.8zM947.0 201.6h11.7v3.9h-11.7zM970.4 201.6h7.8v3.9h-7.8zM927.5 205.5h3.9v3.9h-3.9zM958.7 205.5h3.9v3.9h-3.9zM974.3 205.5h3.9v3.9h-3.9zM904.1 209.4h3.9v3.9h-3.9zM923.6 209.4h3.9v3.9h-3.9zM931.4 209.4h3.9v3.9h-3.9zM958.7 209.4h3.9v3.9h-3.9zM919.7 213.3h3.9v3.9h-3.9zM927.5 213.3h7.8v3.9h-7.8zM982.1 213.3h7.8v3.9h-7.8zM915.8 217.2h3.9v3.9h-3.9zM923.6 217.2h3.9v3.9h-3.9zM954.8 217.2h3.9v3.9h-3.9zM986.0 217.2h3.9v3.9h-3.9zM950.9 221.1h3.9v3.9h-3.9zM958.7 221.1h3.9v3.9h-3.9zM986.0 221.1h7.8v3.9h-7.8zM950.9 225.0h3.9v3.9h-3.9zM931.4 228.9h7.8v3.9h-7.8zM943.1 228.9h7.8v3.9h-7.8zM958.7 228.9h7.8v3.9h-7.8zM943.1 232.8h3.9v3.9h-3.9zM958.7 232.8h3.9v3.9h-3.9zM978.2 236.7h3.9v3.9h-3.9zM962.6 244.5h3.9v3.9h-3.9z"/>
<path fill="#565656" d="M950.9 45.6h3.9v3.9h-3.9zM958.7 45.6h3.9v3.9h-3.9zM982.1 45.6h3.9v3.9h-3.9zM954.8 49.5h7.8v3.9h-7.8zM954.8 57.3h11.7v3.9h-11.7zM978.2 57.3h11.7v3.9h-11.7zM950.9 61.2h3.9v3.9h-3.9zM880.7 65.1h3.9v3.9h-3.9zM884.6 69.0h3.9v3.9h-3.9zM1040.6 72.9h3.9v3.9h-3.9zM1013.3 76.8h7.8v3.9h-7.8zM1036.7 76.8h11.7v3.9h-11.7zM1017.2 80.7h3.9v3.9h-3.9zM1040.6 80.7h11.7v3.9h-11.7zM896.3 84.6h7.8v3.9h-7.8zM1044.5 84.6h3.9v3.9h-3.9zM923.6 88.5h3.9v3.9h-3.9zM978.2 88.5h3.9v3.9h-3.9zM857.3 92.4h3.9v3.9h-3.9zM978.2 92.4h3.9v3.9h-3.9zM853.4 100.2h3.9v3.9h-3.9zM865.1 100.2h3.9v3.9h-3.9zM853.4 104.1h3.9v3.9h-3.9zM888.5 119.7h7.8v3.9h-7.8zM900.2 119.7h3.9v3.9h-3.9zM986.0 119.7h3.9v3.9h-3.9zM1036.7 119.7h7.8v3.9h-7.8zM935.3 123.6h3.9v3.9h-3.9zM1040.6 123.6h7.8v3.9h-7.8zM861.2 127.5h3.9v3.9h-3.9zM943.1 127.5h3.9v3.9h-3.9zM896.3 131.4h3.9v3.9h-3.9zM896.3 135.3h3.9v3.9h-3.9zM939.2 135.3h3.9v3.9h-3.9zM993.8 135.3h3.9v3.9h-3.9zM900.2 139.2h3.9v3.9h-3.9zM997.7 139.2h7.8v3.9h-7.8zM1064.0 139.2h3.9v3.9h-3.9zM958.7 143.1h3.9v3.9h-3.9zM993.8 143.1h11.7v3.9h-11.7zM962.6 147.0h3.9v3.9h-3.9zM993.8 147.0h11.7v3.9h-11.7zM958.7 150.9h3.9v3.9h-3.9zM853.4 154.8h7.8v3.9h-7.8zM958.7 158.7h3.9v3.9h-3.9zM1044.5 158.7h3.9v3.9h-3.9zM958.7 162.6h3.9v3.9h-3.9zM1040.6 162.6h3.9v3.9h-3.9zM962.6 166.5h3.9v3.9h-3.9zM865.1 170.4h3.9v3.9h-3.9zM865.1 174.3h3.9v3.9h-3.9zM1036.7 174.3h3.9v3.9h-3.9zM865.1 178.2h3.9v3.9h-3.9zM1001.6 178.2h7.8v3.9h-7.8zM1040.6 178.2h3.9v3.9h-3.9zM1056.2 178.2h3.9v3.9h-3.9zM869.0 182.1h3.9v3.9h-3.9zM880.7 182.1h3.9v3.9h-3.9zM954.8 182.1h3.9v3.9h-3.9zM962.6 182.1h3.9v3.9h-3.9zM1032.8 186.0h3.9v3.9h-3.9zM900.2 193.8h3.9v3.9h-3.9zM908.0 193.8h3.9v3.9h-3.9zM958.7 193.8h3.9v3.9h-3.9zM1009.4 193.8h3.9v3.9h-3.9zM923.6 197.7h7.8v3.9h-7.8zM966.5 197.7h3.9v3.9h-3.9zM997.7 197.7h3.9v3.9h-3.9zM900.2 201.6h3.9v3.9h-3.9zM939.2 201.6h3.9v3.9h-3.9zM958.7 201.6h11.7v3.9h-11.7zM993.8 201.6h3.9v3.9h-3.9zM1017.2 201.6h3.9v3.9h-3.9zM904.1 205.5h3.9v3.9h-3.9zM923.6 205.5h3.9v3.9h-3.9zM935.3 205.5h3.9v3.9h-3.9zM954.8 205.5h3.9v3.9h-3.9zM962.6 205.5h11.7v3.9h-11.7zM993.8 205.5h3.9v3.9h-3.9zM1017.2 205.5h3.9v3.9h-3.9zM919.7 209.4h3.9v3.9h-3.9zM935.3 209.4h3.9v3.9h-3.9zM974.3 209.4h3.9v3.9h-3.9zM993.8 209.4h3.9v3.9h-3.9zM1001.6 209.4h7.8v3.9h-7.8zM911.9 213.3h7.8v3.9h-7.8zM919.7 217.2h3.9v3.9h-3.9zM927.5 217.2h7.8v3.9h-7.8zM943.1 217.2h3.9v3.9h-3.9zM958.7 217.2h3.9v3.9h-3.9zM982.1 217.2h3.9v3.9h-3.9zM923.6 221.1h3.9v3.9h-3.9zM935.3 221.1h15.6v3.9h-15.6zM962.6 221.1h3.9v3.9h-3.9zM939.2 225.0h11.7v3.9h-11.7zM962.6 225.0h3.9v3.9h-3.9zM989.9 225.0h3.9v3.9h-3.9zM966.5 228.9h3.9v3.9h-3.9zM989.9 228.9h3.9v3.9h-3.9zM935.3 232.8h3.9v3.9h-3.9zM962.6 232.8h3.9v3.9h-3.9zM978.2 232.8h3.9v3.9h-3.9zM954.8 236.7h3.9v3.9h-3.9z"/>
<path fill="#646464" d="M962.6 45.6h3.9v3.9h-3.9zM989.9 49.5h3.9v3.9h-3.9zM958.7 53.4h7.8v3.9h-7.8zM986.0 53.4h11.7v3.9h-11.7zM966.5 57.3h11.7v3.9h-11.7zM989.9 57.3h3.9v3.9h-3.9zM865.1 80.7h3.9v3.9h-3.9zM1048.4 84.6h3.9v3.9h-3.9zM982.1 123.6h3.9v3.9h-3.9zM974.3 127.5h3.9v3.9h-3.9zM935.3 131.4h3.9v3.9h-3.9zM954.8 131.4h3.9v3.9h-3.9zM982.1 131.4h3.9v3.9h-3.9zM974.3 135.3h3.9v3.9h-3.9zM1067.9 135.3h3.9v3.9h-3.9zM896.3 139.2h3.9v3.9h-3.9zM954.8 139.2h3.9v3.9h-3.9zM962.6 139.2h3.9v3.9h-3.9zM958.7 147.0h3.9v3.9h-3.9zM958.7 166.5h3.9v3.9h-3.9zM962.6 170.4h3.9v3.9h-3.9zM954.8 174.3h3.9v3.9h-3.9zM954.8 178.2h3.9v3.9h-3.9zM1036.7 182.1h3.9v3.9h-3.9zM1005.5 193.8h3.9v3.9h-3.9zM904.1 197.7h3.9v3.9h-3.9zM911.9 197.7h3.9v3.9h-3.9zM919.7 197.7h3.9v3.9h-3.9zM943.1 197.7h3.9v3.9h-3.9zM1013.3 197.7h3.9v3.9h-3.9zM904.1 201.6h3.9v3.9h-3.9zM923.6 201.6h3.9v3.9h-3.9zM943.1 201.6h3.9v3.9h-3.9zM919.7 205.5h3.9v3.9h-3.9zM939.2 205.5h3.9v3.9h-3.9zM950.9 205.5h3.9v3.9h-3.9zM908.0 209.4h3.9v3.9h-3.9zM939.2 209.4h3.9v3.9h-3.9zM954.8 209.4h3.9v3.9h-3.9zM962.6 209.4h11.7v3.9h-11.7zM997.7 209.4h3.9v3.9h-3.9zM1009.4 209.4h7.8v3.9h-7.8zM935.3 213.3h3.9v3.9h-3.9zM954.8 213.3h7.8v3.9h-7.8zM974.3 213.3h7.8v3.9h-7.8zM935.3 217.2h7.8v3.9h-7.8zM947.0 217.2h7.8v3.9h-7.8zM962.6 217.2h3.9v3.9h-3.9zM966.5 225.0h3.9v3.9h-3.9zM986.0 225.0h3.9v3.9h-3.9zM939.2 228.9h3.9v3.9h-3.9zM978.2 228.9h7.8v3.9h-7.8zM966.5 232.8h11.7v3.9h-11.7zM958.7 236.7h11.7v3.9h-11.7zM974.3 236.7h3.9v3.9h-3.9zM954.8 240.6h7.8v3.9h-7.8zM966.5 240.6h3.9v3.9h-3.9zM958.7 244.5h3.9v3.9h-3.9z"/>
<path fill="#787878" d="M970.4 45.6h11.7v3.9h-11.7zM962.6 49.5h3.9v3.9h-3.9zM986.0 49.5h3.9v3.9h-3.9zM966.5 53.4h3.9v3.9h-3.9zM974.3 53.4h3.9v3.9h-3.9zM982.1 53.4h3.9v3.9h-3.9zM931.4 127.5h3.9v3.9h-3.9zM950.9 131.4h3.9v3.9h-3.9zM966.5 131.4h3.9v3.9h-3.9zM943.1 135.3h3.9v3.9h-3.9zM958.7 170.4h3.9v3.9h-3.9zM962.6 174.3h3.9v3.9h-3.9zM962.6 178.2h3.9v3.9h-3.9zM958.7 182.1h3.9v3.9h-3.9zM908.0 197.7h3.9v3.9h-3.9zM915.8 197.7h3.9v3.9h-3.9zM1001.6 197.7h11.7v3.9h-11.7zM908.0 201.6h3.9v3.9h-3.9zM915.8 201.6h7.8v3.9h-7.8zM997.7 201.6h3.9v3.9h-3.9zM908.0 205.5h3.9v3.9h-3.9zM915.8 205.5h3.9v3.9h-3.9zM943.1 205.5h7.8v3.9h-7.8zM997.7 205.5h3.9v3.9h-3.9zM1009.4 205.5h7.8v3.9h-7.8zM911.9 209.4h7.8v3.9h-7.8zM943.1 209.4h3.9v3.9h-3.9zM950.9 209.4h3.9v3.9h-3.9zM939.2 213.3h15.6v3.9h-15.6zM962.6 213.3h11.7v3.9h-11.7zM966.5 217.2h15.6v3.9h-15.6zM966.5 221.1h3.9v3.9h-3.9zM978.2 221.1h7.8v3.9h-7.8zM970.4 225.0h3.9v3.9h-3.9zM982.1 225.0h3.9v3.9h-3.9zM970.4 228.9h7.8v3.9h-7.8zM986.0 228.9h3.9v3.9h-3.9zM962.6 240.6h3.9v3.9h-3.9z"/>
<path fill="#919191" d="M966.5 45.6h3.9v3.9h-3.9zM966.5 49.5h3.9v3.9h-3.9zM978.2 49.5h3.9v3.9h-3.9zM970.4 53.4h3.9v3.9h-3.9zM978.2 53.4h3.9v3.9h-3.9zM986.0 123.6h3.9v3.9h-3.9zM939.2 127.5h3.9v3.9h-3.9zM978.2 127.5h3.9v3.9h-3.9zM986.0 127.5h3.9v3.9h-3.9zM939.2 131.4h3.9v3.9h-3.9zM947.0 131.4h3.9v3.9h-3.9zM962.6 131.4h3.9v3.9h-3.9zM970.4 131.4h3.9v3.9h-3.9zM947.0 135.3h3.9v3.9h-3.9zM970.4 135.3h3.9v3.9h-3.9zM958.7 174.3h3.9v3.9h-3.9zM958.7 178.2h3.9v3.9h-3.9zM911.9 201.6h3.9v3.9h-3.9zM1001.6 201.6h15.6v3.9h-15.6zM911.9 205.5h3.9v3.9h-3.9zM1001.6 205.5h7.8v3.9h-7.8zM947.0 209.4h3.9v3.9h-3.9zM970.4 221.1h7.8v3.9h-7.8zM974.3 225.0h7.8v3.9h-7.8zM970.4 236.7h3.9v3.9h-3.9z"/>
<path fill="#afafaf" d="M970.4 49.5h7.8v3.9h-7.8zM982.1 49.5h3.9v3.9h-3.9zM931.4 123.6h3.9v3.9h-3.9zM935.3 127.5h3.9v3.9h-3.9zM982.1 127.5h3.9v3.9h-3.9zM943.1 131.4h3.9v3.9h-3.9zM974.3 131.4h7.8v3.9h-7.8zM950.9 135.3h7.8v3.9h-7.8zM962.6 135.3h7.8v3.9h-7.8z"/>
<path fill="#080808" d="M1618.1 42.8h3.9v3.9h-3.9zM1602.5 46.7h7.8v3.9h-7.8zM1629.8 46.7h7.8v3.9h-7.8zM1590.8 50.6h3.9v3.9h-3.9zM1579.1 54.5h3.9v3.9h-3.9zM1559.6 66.2h3.9v3.9h-3.9zM1547.9 74.0h3.9v3.9h-3.9zM1664.9 74.0h3.9v3.9h-3.9zM1544.0 77.9h3.9v3.9h-3.9zM1668.8 81.8h3.9v3.9h-3.9zM1536.2 89.6h3.9v3.9h-3.9zM1672.7 89.6h3.9v3.9h-3.9zM1676.6 97.4h3.9v3.9h-3.9zM1528.4 105.2h3.9v3.9h-3.9zM1680.5 105.2h3.9v3.9h-3.9zM1684.4 116.9h3.9v3.9h-3.9zM1524.5 120.8h3.9v3.9h-3.9zM1684.4 120.8h3.9v3.9h-3.9zM1520.6 136.4h3.9v3.9h-3.9zM1684.4 136.4h3.9v3.9h-3.9zM1520.6 140.3h3.9v3.9h-3.9zM1688.3 148.1h3.9v3.9h-3.9zM1688.3 152.0h3.9v3.9h-3.9zM1688.3 159.8h3.9v3.9h-3.9zM1688.3 163.7h3.9v3.9h-3.9zM1688.3 167.6h3.9v3.9h-3.9zM1520.6 171.5h3.9v3.9h-3.9zM1520.6 175.4h3.9v3.9h-3.9zM1520.6 179.3h3.9v3.9h-3.9zM1520.6 183.2h3.9v3.9h-3.9zM1684.4 194.9h3.9v3.9h-3.9zM1684.4 198.8h3.9v3.9h-3.9zM1532.3 218.3h3.9v3.9h-3.9zM1672.7 218.3h3.9v3.9h-3.9zM1668.8 222.2h3.9v3.9h-3.9zM1536.2 226.1h3.9v3.9h-3.9zM1664.9 226.1h3.9v3.9h-3.9zM1661.0 230.0h3.9v3.9h-3.9zM1544.0 237.8h3.9v3.9h-3.9zM1555.7 241.7h3.9v3.9h-3.9zM1649.3 241.7h3.9v3.9h-3.9zM1567.4 245.6h3.9v3.9h-3.9zM1641.5 245.6h3.9v3.9h-3.9zM1579.1 249.5h3.9v3.9h-3.9zM1590.8 253.4h3.9v3.9h-3.9zM1614.2 253.4h7.8v3.9h-7.8zM1602.5 257.3h3.9v3.9h-3.9z"/>
<path fill="#101010" d="M1614.2 42.8h3.9v3.9h-3.9zM1610.3 46.7h3.9v3.9h-3.9zM1625.9 46.7h3.9v3.9h-3.9zM1594.7 50.6h3.9v3.9h-3.9zM1641.5 50.6h3.9v3.9h-3.9zM1583.0 54.5h3.9v3.9h-3.9zM1571.3 58.4h3.9v3.9h-3.9zM1567.4 62.3h3.9v3.9h-3.9zM1653.2 62.3h3.9v3.9h-3.9zM1563.5 66.2h3.9v3.9h-3.9zM1555.7 70.1h3.9v3.9h-3.9zM1661.0 70.1h3.9v3.9h-3.9zM1664.9 77.9h3.9v3.9h-3.9zM1544.0 81.8h3.9v3.9h-3.9zM1540.1 85.7h3.9v3.9h-3.9zM1532.3 97.4h3.9v3.9h-3.9zM1528.4 109.1h3.9v3.9h-3.9zM1680.5 113.0h3.9v3.9h-3.9zM1684.4 124.7h3.9v3.9h-3.9zM1684.4 128.6h3.9v3.9h-3.9zM1684.4 132.5h3.9v3.9h-3.9zM1676.6 136.4h3.9v3.9h-3.9zM1680.5 140.3h7.8v3.9h-7.8zM1520.6 144.2h3.9v3.9h-3.9zM1680.5 144.2h7.8v3.9h-7.8zM1520.6 152.0h3.9v3.9h-3.9zM1520.6 159.8h3.9v3.9h-3.9zM1520.6 163.7h3.9v3.9h-3.9zM1520.6 167.6h3.9v3.9h-3.9zM1684.4 187.1h3.9v3.9h-3.9zM1684.4 191.0h3.9v3.9h-3.9zM1524.5 202.7h3.9v3.9h-3.9zM1528.4 210.5h3.9v3.9h-3.9zM1602.5 210.5h3.9v3.9h-3.9zM1532.3 214.4h7.8v3.9h-7.8zM1606.4 214.4h3.9v3.9h-3.9zM1536.2 222.2h3.9v3.9h-3.9zM1540.1 230.0h3.9v3.9h-3.9zM1657.1 233.9h3.9v3.9h-3.9zM1547.9 237.8h7.8v3.9h-7.8zM1653.2 237.8h3.9v3.9h-3.9zM1559.6 241.7h3.9v3.9h-3.9zM1645.4 241.7h3.9v3.9h-3.9zM1571.3 245.6h3.9v3.9h-3.9zM1629.8 245.6h11.7v3.9h-11.7zM1583.0 249.5h7.8v3.9h-7.8zM1622.0 249.5h7.8v3.9h-7.8zM1610.3 253.4h3.9v3.9h-3.9z"/>
<path fill="#181818" d="M1622.0 46.7h3.9v3.9h-3.9zM1598.6 50.6h3.9v3.9h-3.9zM1606.4 50.6h3.9v3.9h-3.9zM1633.7 50.6h7.8v3.9h-7.8zM1641.5 54.5h7.8v3.9h-7.8zM1575.2 58.4h7.8v3.9h-7.8zM1649.3 58.4h3.9v3.9h-3.9zM1567.4 66.2h3.9v3.9h-3.9zM1657.1 66.2h3.9v3.9h-3.9zM1633.7 70.1h7.8v3.9h-7.8zM1551.8 74.0h3.9v3.9h-3.9zM1547.9 77.9h3.9v3.9h-3.9zM1598.6 77.9h3.9v3.9h-3.9zM1602.5 81.8h3.9v3.9h-3.9zM1664.9 81.8h3.9v3.9h-3.9zM1602.5 85.7h3.9v3.9h-3.9zM1668.8 85.7h3.9v3.9h-3.9zM1575.2 93.5h3.9v3.9h-3.9zM1672.7 93.5h3.9v3.9h-3.9zM1532.3 101.3h3.9v3.9h-3.9zM1676.6 101.3h3.9v3.9h-3.9zM1680.5 109.1h3.9v3.9h-3.9zM1680.5 116.9h3.9v3.9h-3.9zM1524.5 124.7h3.9v3.9h-3.9zM1524.5 128.6h3.9v3.9h-3.9zM1571.3 128.6h3.9v3.9h-3.9zM1571.3 132.5h3.9v3.9h-3.9zM1598.6 132.5h3.9v3.9h-3.9zM1606.4 136.4h3.9v3.9h-3.9zM1524.5 144.2h3.9v3.9h-3.9zM1520.6 148.1h3.9v3.9h-3.9zM1684.4 148.1h3.9v3.9h-3.9zM1520.6 155.9h3.9v3.9h-3.9zM1688.3 155.9h3.9v3.9h-3.9zM1622.0 163.7h3.9v3.9h-3.9zM1649.3 163.7h3.9v3.9h-3.9zM1684.4 175.4h3.9v3.9h-3.9zM1684.4 179.3h3.9v3.9h-3.9zM1563.5 183.2h3.9v3.9h-3.9zM1602.5 183.2h7.8v3.9h-7.8zM1684.4 183.2h3.9v3.9h-3.9zM1528.4 191.0h3.9v3.9h-3.9zM1672.7 191.0h3.9v3.9h-3.9zM1524.5 194.9h3.9v3.9h-3.9zM1532.3 194.9h3.9v3.9h-3.9zM1614.2 194.9h3.9v3.9h-3.9zM1524.5 198.8h3.9v3.9h-3.9zM1586.9 198.8h3.9v3.9h-3.9zM1629.8 198.8h3.9v3.9h-3.9zM1633.7 202.7h3.9v3.9h-3.9zM1633.7 206.6h7.8v3.9h-7.8zM1680.5 206.6h3.9v3.9h-3.9zM1610.3 210.5h3.9v3.9h-3.9zM1676.6 210.5h3.9v3.9h-3.9zM1672.7 214.4h3.9v3.9h-3.9zM1668.8 218.3h3.9v3.9h-3.9zM1606.4 222.2h3.9v3.9h-3.9zM1664.9 222.2h3.9v3.9h-3.9zM1540.1 226.1h3.9v3.9h-3.9zM1657.1 230.0h3.9v3.9h-3.9zM1544.0 233.9h3.9v3.9h-3.9zM1653.2 233.9h3.9v3.9h-3.9zM1649.3 237.8h3.9v3.9h-3.9zM1575.2 245.6h7.8v3.9h-7.8zM1618.1 249.5h3.9v3.9h-3.9zM1594.7 253.4h3.9v3.9h-3.9zM1606.4 253.4h3.9v3.9h-3.9z"/>
<path fill="#202020" d="M1614.2 46.7h7.8v3.9h-7.8zM1602.5 50.6h3.9v3.9h-3.9zM1629.8 50.6h3.9v3.9h-3.9zM1586.9 54.5h3.9v3.9h-3.9zM1583.0 58.4h3.9v3.9h-3.9zM1586.9 62.3h3.9v3.9h-3.9zM1586.9 66.2h7.8v3.9h-7.8zM1622.0 66.2h3.9v3.9h-3.9zM1633.7 66.2h7.8v3.9h-7.8zM1559.6 70.1h3.9v3.9h-3.9zM1625.9 70.1h3.9v3.9h-3.9zM1622.0 74.0h3.9v3.9h-3.9zM1637.6 74.0h3.9v3.9h-3.9zM1567.4 77.9h3.9v3.9h-3.9zM1602.5 77.9h7.8v3.9h-7.8zM1622.0 77.9h3.9v3.9h-3.9zM1547.9 81.8h3.9v3.9h-3.9zM1555.7 81.8h3.9v3.9h-3.9zM1571.3 81.8h3.9v3.9h-3.9zM1594.7 81.8h3.9v3.9h-3.9zM1575.2 85.7h3.9v3.9h-3.9zM1606.4 85.7h7.8v3.9h-7.8zM1536.2 93.5h3.9v3.9h-3.9zM1598.6 97.4h3.9v3.9h-3.9zM1606.4 97.4h7.8v3.9h-7.8zM1657.1 101.3h3.9v3.9h-3.9zM1528.4 113.0h3.9v3.9h-3.9zM1664.9 113.0h3.9v3.9h-3.9zM1528.4 116.9h3.9v3.9h-3.9zM1571.3 116.9h3.9v3.9h-3.9zM1551.8 120.8h3.9v3.9h-3.9zM1586.9 120.8h3.9v3.9h-3.9zM1676.6 120.8h3.9v3.9h-3.9zM1598.6 124.7h3.9v3.9h-3.9zM1590.8 128.6h3.9v3.9h-3.9zM1598.6 128.6h7.8v3.9h-7.8zM1524.5 132.5h3.9v3.9h-3.9zM1590.8 132.5h3.9v3.9h-3.9zM1641.5 132.5h7.8v3.9h-7.8zM1668.8 132.5h7.8v3.9h-7.8zM1551.8 136.4h11.7v3.9h-11.7zM1575.2 136.4h3.9v3.9h-3.9zM1590.8 136.4h3.9v3.9h-3.9zM1649.3 136.4h3.9v3.9h-3.9zM1555.7 140.3h3.9v3.9h-3.9zM1583.0 140.3h3.9v3.9h-3.9zM1590.8 140.3h3.9v3.9h-3.9zM1645.4 140.3h3.9v3.9h-3.9zM1590.8 144.2h3.9v3.9h-3.9zM1606.4 144.2h3.9v3.9h-3.9zM1676.6 144.2h3.9v3.9h-3.9zM1602.5 148.1h3.9v3.9h-3.9zM1594.7 152.0h3.9v3.9h-3.9zM1524.5 159.8h3.9v3.9h-3.9zM1532.3 159.8h3.9v3.9h-3.9zM1602.5 159.8h7.8v3.9h-7.8zM1641.5 159.8h3.9v3.9h-3.9zM1657.1 159.8h3.9v3.9h-3.9zM1528.4 163.7h3.9v3.9h-3.9zM1536.2 163.7h3.9v3.9h-3.9zM1602.5 163.7h3.9v3.9h-3.9zM1614.2 163.7h7.8v3.9h-7.8zM1641.5 163.7h7.8v3.9h-7.8zM1653.2 163.7h7.8v3.9h-7.8zM1684.4 163.7h3.9v3.9h-3.9zM1524.5 167.6h3.9v3.9h-3.9zM1625.9 167.6h3.9v3.9h-3.9zM1649.3 167.6h7.8v3.9h-7.8zM1684.4 167.6h3.9v3.9h-3.9zM1606.4 171.5h3.9v3.9h-3.9zM1684.4 171.5h3.9v3.9h-3.9zM1524.5 175.4h3.9v3.9h-3.9zM1567.4 175.4h3.9v3.9h-3.9zM1625.9 175.4h3.9v3.9h-3.9zM1567.4 179.3h3.9v3.9h-3.9zM1575.2 179.3h11.7v3.9h-11.7zM1668.8 179.3h3.9v3.9h-3.9zM1579.1 183.2h3.9v3.9h-3.9zM1672.7 183.2h3.9v3.9h-3.9zM1563.5 187.1h3.9v3.9h-3.9zM1602.5 187.1h7.8v3.9h-7.8zM1668.8 187.1h3.9v3.9h-3.9zM1676.6 187.1h3.9v3.9h-3.9zM1524.5 191.0h3.9v3.9h-3.9zM1602.5 191.0h15.6v3.9h-15.6zM1528.4 194.9h3.9v3.9h-3.9zM1598.6 194.9h3.9v3.9h-3.9zM1618.1 194.9h3.9v3.9h-3.9zM1629.8 194.9h3.9v3.9h-3.9zM1528.4 198.8h3.9v3.9h-3.9zM1602.5 198.8h3.9v3.9h-3.9zM1610.3 198.8h3.9v3.9h-3.9zM1625.9 198.8h3.9v3.9h-3.9zM1633.7 198.8h3.9v3.9h-3.9zM1602.5 202.7h11.7v3.9h-11.7zM1622.0 202.7h3.9v3.9h-3.9zM1629.8 202.7h3.9v3.9h-3.9zM1680.5 202.7h3.9v3.9h-3.9zM1528.4 206.6h3.9v3.9h-3.9zM1551.8 206.6h3.9v3.9h-3.9zM1602.5 206.6h3.9v3.9h-3.9zM1625.9 206.6h3.9v3.9h-3.9zM1657.1 206.6h3.9v3.9h-3.9zM1532.3 210.5h3.9v3.9h-3.9zM1547.9 210.5h3.9v3.9h-3.9zM1606.4 210.5h3.9v3.9h-3.9zM1614.2 210.5h3.9v3.9h-3.9zM1622.0 210.5h3.9v3.9h-3.9zM1540.1 214.4h7.8v3.9h-7.8zM1602.5 214.4h3.9v3.9h-3.9zM1618.1 214.4h3.9v3.9h-3.9zM1625.9 214.4h3.9v3.9h-3.9zM1637.6 214.4h3.9v3.9h-3.9zM1540.1 218.3h3.9v3.9h-3.9zM1602.5 218.3h3.9v3.9h-3.9zM1614.2 218.3h3.9v3.9h-3.9zM1622.0 218.3h3.9v3.9h-3.9zM1614.2 222.2h7.8v3.9h-7.8zM1625.9 222.2h3.9v3.9h-3.9zM1547.9 226.1h7.8v3.9h-7.8zM1614.2 226.1h3.9v3.9h-3.9zM1625.9 226.1h7.8v3.9h-7.8zM1657.1 226.1h7.8v3.9h-7.8zM1571.3 230.0h3.9v3.9h-3.9zM1633.7 230.0h3.9v3.9h-3.9zM1547.9 233.9h3.9v3.9h-3.9zM1606.4 237.8h3.9v3.9h-3.9zM1563.5 241.7h3.9v3.9h-3.9zM1641.5 241.7h3.9v3.9h-3.9zM1622.0 245.6h3.9v3.9h-3.9zM1590.8 249.5h3.9v3.9h-3.9zM1614.2 249.5h3.9v3.9h-3.9z"/>
<path fill="#282828" d="M1622.0 50.6h7.8v3.9h-7.8zM1590.8 54.5h7.8v3.9h-7.8zM1633.7 58.4h3.9v3.9h-3.9zM1641.5 58.4h3.9v3.9h-3.9zM1583.0 62.3h3.9v3.9h-3.9zM1590.8 62.3h3.9v3.9h-3.9zM1614.2 62.3h3.9v3.9h-3.9zM1637.6 62.3h3.9v3.9h-3.9zM1583.0 66.2h3.9v3.9h-3.9zM1594.7 66.2h7.8v3.9h-7.8zM1629.8 66.2h3.9v3.9h-3.9zM1653.2 66.2h3.9v3.9h-3.9zM1586.9 70.1h3.9v3.9h-3.9zM1594.7 70.1h7.8v3.9h-7.8zM1606.4 70.1h3.9v3.9h-3.9zM1618.1 70.1h7.8v3.9h-7.8zM1555.7 74.0h3.9v3.9h-3.9zM1606.4 74.0h3.9v3.9h-3.9zM1618.1 74.0h3.9v3.9h-3.9zM1625.9 74.0h11.7v3.9h-11.7zM1661.0 74.0h3.9v3.9h-3.9zM1551.8 77.9h3.9v3.9h-3.9zM1571.3 77.9h3.9v3.9h-3.9zM1590.8 77.9h7.8v3.9h-7.8zM1625.9 77.9h3.9v3.9h-3.9zM1637.6 77.9h3.9v3.9h-3.9zM1645.4 77.9h3.9v3.9h-3.9zM1661.0 77.9h3.9v3.9h-3.9zM1563.5 81.8h3.9v3.9h-3.9zM1586.9 81.8h3.9v3.9h-3.9zM1598.6 81.8h3.9v3.9h-3.9zM1606.4 81.8h3.9v3.9h-3.9zM1618.1 81.8h3.9v3.9h-3.9zM1661.0 81.8h3.9v3.9h-3.9zM1544.0 85.7h3.9v3.9h-3.9zM1555.7 85.7h3.9v3.9h-3.9zM1583.0 85.7h7.8v3.9h-7.8zM1664.9 85.7h3.9v3.9h-3.9zM1540.1 89.6h3.9v3.9h-3.9zM1571.3 89.6h7.8v3.9h-7.8zM1602.5 89.6h7.8v3.9h-7.8zM1602.5 93.5h7.8v3.9h-7.8zM1645.4 93.5h3.9v3.9h-3.9zM1536.2 97.4h3.9v3.9h-3.9zM1579.1 97.4h3.9v3.9h-3.9zM1661.0 97.4h3.9v3.9h-3.9zM1594.7 101.3h3.9v3.9h-3.9zM1602.5 101.3h3.9v3.9h-3.9zM1610.3 101.3h3.9v3.9h-3.9zM1532.3 105.2h3.9v3.9h-3.9zM1610.3 105.2h3.9v3.9h-3.9zM1657.1 105.2h3.9v3.9h-3.9zM1672.7 105.2h3.9v3.9h-3.9zM1610.3 109.1h3.9v3.9h-3.9zM1653.2 109.1h11.7v3.9h-11.7zM1575.2 113.0h3.9v3.9h-3.9zM1610.3 113.0h3.9v3.9h-3.9zM1618.1 113.0h3.9v3.9h-3.9zM1629.8 113.0h3.9v3.9h-3.9zM1551.8 116.9h3.9v3.9h-3.9zM1664.9 116.9h3.9v3.9h-3.9zM1528.4 120.8h3.9v3.9h-3.9zM1571.3 120.8h3.9v3.9h-3.9zM1590.8 120.8h3.9v3.9h-3.9zM1602.5 120.8h3.9v3.9h-3.9zM1625.9 120.8h3.9v3.9h-3.9zM1664.9 120.8h3.9v3.9h-3.9zM1672.7 120.8h3.9v3.9h-3.9zM1680.5 120.8h3.9v3.9h-3.9zM1528.4 124.7h3.9v3.9h-3.9zM1551.8 124.7h3.9v3.9h-3.9zM1567.4 124.7h7.8v3.9h-7.8zM1590.8 124.7h7.8v3.9h-7.8zM1602.5 124.7h3.9v3.9h-3.9zM1645.4 124.7h3.9v3.9h-3.9zM1676.6 124.7h7.8v3.9h-7.8zM1575.2 128.6h7.8v3.9h-7.8zM1633.7 128.6h3.9v3.9h-3.9zM1641.5 128.6h3.9v3.9h-3.9zM1575.2 132.5h3.9v3.9h-3.9zM1586.9 132.5h3.9v3.9h-3.9zM1602.5 132.5h3.9v3.9h-3.9zM1637.6 132.5h3.9v3.9h-3.9zM1524.5 136.4h3.9v3.9h-3.9zM1547.9 136.4h3.9v3.9h-3.9zM1579.1 136.4h7.8v3.9h-7.8zM1598.6 136.4h7.8v3.9h-7.8zM1641.5 136.4h7.8v3.9h-7.8zM1551.8 140.3h3.9v3.9h-3.9zM1559.6 140.3h3.9v3.9h-3.9zM1579.1 140.3h3.9v3.9h-3.9zM1586.9 140.3h3.9v3.9h-3.9zM1602.5 140.3h11.7v3.9h-11.7zM1637.6 140.3h3.9v3.9h-3.9zM1676.6 140.3h3.9v3.9h-3.9zM1575.2 144.2h3.9v3.9h-3.9zM1583.0 144.2h3.9v3.9h-3.9zM1602.5 144.2h3.9v3.9h-3.9zM1571.3 148.1h3.9v3.9h-3.9zM1586.9 148.1h3.9v3.9h-3.9zM1606.4 148.1h3.9v3.9h-3.9zM1680.5 148.1h3.9v3.9h-3.9zM1524.5 152.0h3.9v3.9h-3.9zM1559.6 152.0h3.9v3.9h-3.9zM1579.1 152.0h3.9v3.9h-3.9zM1586.9 152.0h3.9v3.9h-3.9zM1602.5 152.0h3.9v3.9h-3.9zM1657.1 152.0h3.9v3.9h-3.9zM1524.5 155.9h3.9v3.9h-3.9zM1579.1 155.9h3.9v3.9h-3.9zM1606.4 155.9h3.9v3.9h-3.9zM1618.1 155.9h3.9v3.9h-3.9zM1657.1 155.9h3.9v3.9h-3.9zM1684.4 155.9h3.9v3.9h-3.9zM1540.1 159.8h3.9v3.9h-3.9zM1614.2 159.8h7.8v3.9h-7.8zM1637.6 159.8h3.9v3.9h-3.9zM1645.4 159.8h3.9v3.9h-3.9zM1653.2 159.8h3.9v3.9h-3.9zM1661.0 159.8h3.9v3.9h-3.9zM1684.4 159.8h3.9v3.9h-3.9zM1532.3 163.7h3.9v3.9h-3.9zM1571.3 163.7h3.9v3.9h-3.9zM1606.4 163.7h3.9v3.9h-3.9zM1540.1 167.6h3.9v3.9h-3.9zM1567.4 167.6h3.9v3.9h-3.9zM1602.5 167.6h7.8v3.9h-7.8zM1618.1 167.6h7.8v3.9h-7.8zM1657.1 167.6h3.9v3.9h-3.9zM1524.5 171.5h3.9v3.9h-3.9zM1567.4 171.5h3.9v3.9h-3.9zM1622.0 171.5h3.9v3.9h-3.9zM1645.4 171.5h11.7v3.9h-11.7zM1555.7 175.4h3.9v3.9h-3.9zM1571.3 175.4h11.7v3.9h-11.7zM1590.8 175.4h3.9v3.9h-3.9zM1602.5 175.4h3.9v3.9h-3.9zM1664.9 175.4h3.9v3.9h-3.9zM1555.7 179.3h11.7v3.9h-11.7zM1571.3 179.3h3.9v3.9h-3.9zM1606.4 179.3h3.9v3.9h-3.9zM1555.7 183.2h7.8v3.9h-7.8zM1567.4 183.2h3.9v3.9h-3.9zM1575.2 183.2h3.9v3.9h-3.9zM1583.0 183.2h3.9v3.9h-3.9zM1590.8 183.2h3.9v3.9h-3.9zM1680.5 183.2h3.9v3.9h-3.9zM1567.4 187.1h3.9v3.9h-3.9zM1645.4 187.1h3.9v3.9h-3.9zM1618.1 191.0h3.9v3.9h-3.9zM1668.8 191.0h3.9v3.9h-3.9zM1536.2 194.9h7.8v3.9h-7.8zM1583.0 194.9h3.9v3.9h-3.9zM1606.4 194.9h7.8v3.9h-7.8zM1532.3 198.8h3.9v3.9h-3.9zM1579.1 198.8h3.9v3.9h-3.9zM1614.2 198.8h3.9v3.9h-3.9zM1622.0 198.8h3.9v3.9h-3.9zM1641.5 198.8h7.8v3.9h-7.8zM1680.5 198.8h3.9v3.9h-3.9zM1586.9 202.7h3.9v3.9h-3.9zM1625.9 202.7h3.9v3.9h-3.9zM1641.5 202.7h3.9v3.9h-3.9zM1649.3 202.7h3.9v3.9h-3.9zM1532.3 206.6h3.9v3.9h-3.9zM1583.0 206.6h3.9v3.9h-3.9zM1606.4 206.6h19.5v3.9h-19.5zM1629.8 206.6h3.9v3.9h-3.9zM1661.0 206.6h3.9v3.9h-3.9zM1618.1 210.5h3.9v3.9h-3.9zM1625.9 210.5h7.8v3.9h-7.8zM1637.6 210.5h7.8v3.9h-7.8zM1657.1 210.5h3.9v3.9h-3.9zM1610.3 214.4h7.8v3.9h-7.8zM1629.8 214.4h3.9v3.9h-3.9zM1641.5 214.4h3.9v3.9h-3.9zM1536.2 218.3h3.9v3.9h-3.9zM1610.3 218.3h3.9v3.9h-3.9zM1618.1 218.3h3.9v3.9h-3.9zM1633.7 218.3h3.9v3.9h-3.9zM1629.8 222.2h7.8v3.9h-7.8zM1645.4 222.2h3.9v3.9h-3.9zM1661.0 222.2h3.9v3.9h-3.9zM1555.7 226.1h11.7v3.9h-11.7zM1544.0 230.0h7.8v3.9h-7.8zM1555.7 230.0h3.9v3.9h-3.9zM1625.9 230.0h7.8v3.9h-7.8zM1641.5 230.0h7.8v3.9h-7.8zM1653.2 230.0h3.9v3.9h-3.9zM1551.8 233.9h3.9v3.9h-3.9zM1610.3 233.9h3.9v3.9h-3.9zM1641.5 233.9h3.9v3.9h-3.9zM1649.3 233.9h3.9v3.9h-3.9zM1555.7 237.8h3.9v3.9h-3.9zM1583.0 237.8h3.9v3.9h-3.9zM1590.8 237.8h3.9v3.9h-3.9zM1602.5 237.8h3.9v3.9h-3.9zM1610.3 237.8h3.9v3.9h-3.9zM1645.4 237.8h3.9v3.9h-3.9zM1567.4 241.7h7.8v3.9h-7.8zM1586.9 241.7h3.9v3.9h-3.9zM1606.4 241.7h3.9v3.9h-3.9zM1614.2 245.6h7.8v3.9h-7.8zM1598.6 253.4h3.9v3.9h-3.9z"/>
<path fill="#303030" d="M1629.8 54.5h3.9v3.9h-3.9zM1637.6 54.5h3.9v3.9h-3.9zM1586.9 58.4h7.8v3.9h-7.8zM1598.6 58.4h3.9v3.9h-3.9zM1614.2 58.4h3.9v3.9h-3.9zM1571.3 62.3h11.7v3.9h-11.7zM1594.7 62.3h11.7v3.9h-11.7zM1610.3 62.3h3.9v3.9h-3.9zM1618.1 62.3h3.9v3.9h-3.9zM1629.8 62.3h7.8v3.9h-7.8zM1649.3 62.3h3.9v3.9h-3.9zM1579.1 66.2h3.9v3.9h-3.9zM1606.4 66.2h15.6v3.9h-15.6zM1625.9 66.2h3.9v3.9h-3.9zM1641.5 66.2h3.9v3.9h-3.9zM1590.8 70.1h3.9v3.9h-3.9zM1602.5 70.1h3.9v3.9h-3.9zM1614.2 70.1h3.9v3.9h-3.9zM1629.8 70.1h3.9v3.9h-3.9zM1641.5 70.1h3.9v3.9h-3.9zM1657.1 70.1h3.9v3.9h-3.9zM1567.4 74.0h7.8v3.9h-7.8zM1590.8 74.0h11.7v3.9h-11.7zM1610.3 74.0h3.9v3.9h-3.9zM1645.4 74.0h7.8v3.9h-7.8zM1575.2 77.9h3.9v3.9h-3.9zM1586.9 77.9h3.9v3.9h-3.9zM1618.1 77.9h3.9v3.9h-3.9zM1633.7 77.9h3.9v3.9h-3.9zM1649.3 77.9h3.9v3.9h-3.9zM1551.8 81.8h3.9v3.9h-3.9zM1575.2 81.8h3.9v3.9h-3.9zM1590.8 81.8h3.9v3.9h-3.9zM1610.3 81.8h3.9v3.9h-3.9zM1622.0 81.8h3.9v3.9h-3.9zM1641.5 81.8h3.9v3.9h-3.9zM1547.9 85.7h3.9v3.9h-3.9zM1571.3 85.7h3.9v3.9h-3.9zM1590.8 85.7h3.9v3.9h-3.9zM1598.6 85.7h3.9v3.9h-3.9zM1618.1 85.7h7.8v3.9h-7.8zM1649.3 85.7h3.9v3.9h-3.9zM1544.0 89.6h3.9v3.9h-3.9zM1551.8 89.6h7.8v3.9h-7.8zM1586.9 89.6h3.9v3.9h-3.9zM1598.6 89.6h3.9v3.9h-3.9zM1610.3 89.6h3.9v3.9h-3.9zM1618.1 89.6h3.9v3.9h-3.9zM1641.5 89.6h11.7v3.9h-11.7zM1668.8 89.6h3.9v3.9h-3.9zM1551.8 93.5h3.9v3.9h-3.9zM1571.3 93.5h3.9v3.9h-3.9zM1583.0 93.5h3.9v3.9h-3.9zM1610.3 93.5h7.8v3.9h-7.8zM1629.8 93.5h3.9v3.9h-3.9zM1637.6 93.5h7.8v3.9h-7.8zM1657.1 93.5h3.9v3.9h-3.9zM1575.2 97.4h3.9v3.9h-3.9zM1602.5 97.4h3.9v3.9h-3.9zM1614.2 97.4h3.9v3.9h-3.9zM1625.9 97.4h7.8v3.9h-7.8zM1641.5 97.4h11.7v3.9h-11.7zM1657.1 97.4h3.9v3.9h-3.9zM1664.9 97.4h3.9v3.9h-3.9zM1672.7 97.4h3.9v3.9h-3.9zM1583.0 101.3h3.9v3.9h-3.9zM1629.8 101.3h3.9v3.9h-3.9zM1664.9 101.3h3.9v3.9h-3.9zM1579.1 105.2h3.9v3.9h-3.9zM1629.8 105.2h3.9v3.9h-3.9zM1661.0 105.2h7.8v3.9h-7.8zM1676.6 105.2h3.9v3.9h-3.9zM1532.3 109.1h3.9v3.9h-3.9zM1571.3 109.1h3.9v3.9h-3.9zM1579.1 109.1h3.9v3.9h-3.9zM1606.4 109.1h3.9v3.9h-3.9zM1614.2 109.1h3.9v3.9h-3.9zM1622.0 109.1h3.9v3.9h-3.9zM1664.9 109.1h7.8v3.9h-7.8zM1532.3 113.0h3.9v3.9h-3.9zM1547.9 113.0h3.9v3.9h-3.9zM1567.4 113.0h3.9v3.9h-3.9zM1579.1 113.0h11.7v3.9h-11.7zM1602.5 113.0h7.8v3.9h-7.8zM1614.2 113.0h3.9v3.9h-3.9zM1622.0 113.0h3.9v3.9h-3.9zM1633.7 113.0h3.9v3.9h-3.9zM1649.3 113.0h3.9v3.9h-3.9zM1657.1 113.0h3.9v3.9h-3.9zM1676.6 113.0h3.9v3.9h-3.9zM1532.3 116.9h7.8v3.9h-7.8zM1547.9 116.9h3.9v3.9h-3.9zM1563.5 116.9h3.9v3.9h-3.9zM1579.1 116.9h3.9v3.9h-3.9zM1586.9 116.9h7.8v3.9h-7.8zM1602.5 116.9h3.9v3.9h-3.9zM1622.0 116.9h3.9v3.9h-3.9zM1629.8 116.9h3.9v3.9h-3.9zM1645.4 116.9h3.9v3.9h-3.9zM1668.8 116.9h7.8v3.9h-7.8zM1547.9 120.8h3.9v3.9h-3.9zM1555.7 120.8h7.8v3.9h-7.8zM1594.7 120.8h7.8v3.9h-7.8zM1629.8 120.8h7.8v3.9h-7.8zM1668.8 120.8h3.9v3.9h-3.9zM1536.2 124.7h3.9v3.9h-3.9zM1547.9 124.7h3.9v3.9h-3.9zM1555.7 124.7h7.8v3.9h-7.8zM1586.9 124.7h3.9v3.9h-3.9zM1622.0 124.7h3.9v3.9h-3.9zM1672.7 124.7h3.9v3.9h-3.9zM1540.1 128.6h3.9v3.9h-3.9zM1551.8 128.6h7.8v3.9h-7.8zM1567.4 128.6h3.9v3.9h-3.9zM1583.0 128.6h7.8v3.9h-7.8zM1594.7 128.6h3.9v3.9h-3.9zM1606.4 128.6h3.9v3.9h-3.9zM1645.4 128.6h7.8v3.9h-7.8zM1672.7 128.6h7.8v3.9h-7.8zM1536.2 132.5h3.9v3.9h-3.9zM1551.8 132.5h7.8v3.9h-7.8zM1563.5 132.5h7.8v3.9h-7.8zM1579.1 132.5h7.8v3.9h-7.8zM1606.4 132.5h3.9v3.9h-3.9zM1680.5 132.5h3.9v3.9h-3.9zM1532.3 136.4h3.9v3.9h-3.9zM1563.5 136.4h11.7v3.9h-11.7zM1586.9 136.4h3.9v3.9h-3.9zM1610.3 136.4h3.9v3.9h-3.9zM1633.7 136.4h3.9v3.9h-3.9zM1668.8 136.4h7.8v3.9h-7.8zM1524.5 140.3h7.8v3.9h-7.8zM1547.9 140.3h3.9v3.9h-3.9zM1571.3 140.3h3.9v3.9h-3.9zM1622.0 140.3h3.9v3.9h-3.9zM1641.5 140.3h3.9v3.9h-3.9zM1649.3 140.3h3.9v3.9h-3.9zM1672.7 140.3h3.9v3.9h-3.9zM1551.8 144.2h3.9v3.9h-3.9zM1559.6 144.2h3.9v3.9h-3.9zM1567.4 144.2h3.9v3.9h-3.9zM1614.2 144.2h3.9v3.9h-3.9zM1629.8 144.2h3.9v3.9h-3.9zM1645.4 144.2h3.9v3.9h-3.9zM1524.5 148.1h3.9v3.9h-3.9zM1555.7 148.1h11.7v3.9h-11.7zM1583.0 148.1h3.9v3.9h-3.9zM1590.8 148.1h11.7v3.9h-11.7zM1618.1 148.1h3.9v3.9h-3.9zM1657.1 148.1h7.8v3.9h-7.8zM1668.8 148.1h3.9v3.9h-3.9zM1676.6 148.1h3.9v3.9h-3.9zM1555.7 152.0h3.9v3.9h-3.9zM1563.5 152.0h3.9v3.9h-3.9zM1571.3 152.0h3.9v3.9h-3.9zM1583.0 152.0h3.9v3.9h-3.9zM1590.8 152.0h3.9v3.9h-3.9zM1598.6 152.0h3.9v3.9h-3.9zM1618.1 152.0h3.9v3.9h-3.9zM1629.8 152.0h3.9v3.9h-3.9zM1684.4 152.0h3.9v3.9h-3.9zM1528.4 155.9h3.9v3.9h-3.9zM1559.6 155.9h7.8v3.9h-7.8zM1583.0 155.9h3.9v3.9h-3.9zM1590.8 155.9h7.8v3.9h-7.8zM1602.5 155.9h3.9v3.9h-3.9zM1622.0 155.9h3.9v3.9h-3.9zM1528.4 159.8h3.9v3.9h-3.9zM1563.5 159.8h7.8v3.9h-7.8zM1579.1 159.8h3.9v3.9h-3.9zM1622.0 159.8h3.9v3.9h-3.9zM1649.3 159.8h3.9v3.9h-3.9zM1540.1 163.7h7.8v3.9h-7.8zM1567.4 163.7h3.9v3.9h-3.9zM1610.3 163.7h3.9v3.9h-3.9zM1625.9 163.7h7.8v3.9h-7.8zM1544.0 167.6h3.9v3.9h-3.9zM1571.3 167.6h3.9v3.9h-3.9zM1590.8 167.6h3.9v3.9h-3.9zM1610.3 167.6h7.8v3.9h-7.8zM1629.8 167.6h3.9v3.9h-3.9zM1641.5 167.6h3.9v3.9h-3.9zM1661.0 167.6h3.9v3.9h-3.9zM1528.4 171.5h3.9v3.9h-3.9zM1536.2 171.5h3.9v3.9h-3.9zM1571.3 171.5h7.8v3.9h-7.8zM1586.9 171.5h3.9v3.9h-3.9zM1602.5 171.5h3.9v3.9h-3.9zM1625.9 171.5h3.9v3.9h-3.9zM1633.7 171.5h3.9v3.9h-3.9zM1657.1 171.5h7.8v3.9h-7.8zM1668.8 171.5h3.9v3.9h-3.9zM1547.9 175.4h7.8v3.9h-7.8zM1563.5 175.4h3.9v3.9h-3.9zM1583.0 175.4h3.9v3.9h-3.9zM1598.6 175.4h3.9v3.9h-3.9zM1622.0 175.4h3.9v3.9h-3.9zM1629.8 175.4h19.5v3.9h-19.5zM1657.1 175.4h7.8v3.9h-7.8zM1668.8 175.4h7.8v3.9h-7.8zM1524.5 179.3h3.9v3.9h-3.9zM1590.8 179.3h3.9v3.9h-3.9zM1602.5 179.3h3.9v3.9h-3.9zM1622.0 179.3h3.9v3.9h-3.9zM1645.4 179.3h3.9v3.9h-3.9zM1661.0 179.3h3.9v3.9h-3.9zM1672.7 179.3h3.9v3.9h-3.9zM1524.5 183.2h3.9v3.9h-3.9zM1536.2 183.2h3.9v3.9h-3.9zM1571.3 183.2h3.9v3.9h-3.9zM1594.7 183.2h3.9v3.9h-3.9zM1645.4 183.2h3.9v3.9h-3.9zM1664.9 183.2h3.9v3.9h-3.9zM1524.5 187.1h3.9v3.9h-3.9zM1540.1 187.1h3.9v3.9h-3.9zM1547.9 187.1h3.9v3.9h-3.9zM1555.7 187.1h7.8v3.9h-7.8zM1575.2 187.1h7.8v3.9h-7.8zM1590.8 187.1h3.9v3.9h-3.9zM1544.0 191.0h3.9v3.9h-3.9zM1586.9 191.0h3.9v3.9h-3.9zM1657.1 191.0h3.9v3.9h-3.9zM1551.8 194.9h3.9v3.9h-3.9zM1575.2 194.9h3.9v3.9h-3.9zM1586.9 194.9h7.8v3.9h-7.8zM1602.5 194.9h3.9v3.9h-3.9zM1622.0 194.9h3.9v3.9h-3.9zM1641.5 194.9h11.7v3.9h-11.7zM1668.8 194.9h3.9v3.9h-3.9zM1544.0 198.8h3.9v3.9h-3.9zM1551.8 198.8h3.9v3.9h-3.9zM1571.3 198.8h7.8v3.9h-7.8zM1583.0 198.8h3.9v3.9h-3.9zM1590.8 198.8h3.9v3.9h-3.9zM1618.1 198.8h3.9v3.9h-3.9zM1657.1 198.8h3.9v3.9h-3.9zM1668.8 198.8h3.9v3.9h-3.9zM1528.4 202.7h3.9v3.9h-3.9zM1547.9 202.7h11.7v3.9h-11.7zM1567.4 202.7h3.9v3.9h-3.9zM1575.2 202.7h3.9v3.9h-3.9zM1583.0 202.7h3.9v3.9h-3.9zM1614.2 202.7h7.8v3.9h-7.8zM1645.4 202.7h3.9v3.9h-3.9zM1657.1 202.7h3.9v3.9h-3.9zM1676.6 202.7h3.9v3.9h-3.9zM1544.0 206.6h7.8v3.9h-7.8zM1575.2 206.6h3.9v3.9h-3.9zM1641.5 206.6h3.9v3.9h-3.9zM1649.3 206.6h3.9v3.9h-3.9zM1536.2 210.5h3.9v3.9h-3.9zM1544.0 210.5h3.9v3.9h-3.9zM1567.4 210.5h11.7v3.9h-11.7zM1649.3 210.5h3.9v3.9h-3.9zM1661.0 210.5h3.9v3.9h-3.9zM1672.7 210.5h3.9v3.9h-3.9zM1551.8 214.4h3.9v3.9h-3.9zM1567.4 214.4h3.9v3.9h-3.9zM1594.7 214.4h7.8v3.9h-7.8zM1633.7 214.4h3.9v3.9h-3.9zM1649.3 214.4h3.9v3.9h-3.9zM1657.1 214.4h3.9v3.9h-3.9zM1668.8 214.4h3.9v3.9h-3.9zM1547.9 218.3h3.9v3.9h-3.9zM1563.5 218.3h3.9v3.9h-3.9zM1575.2 218.3h3.9v3.9h-3.9zM1583.0 218.3h3.9v3.9h-3.9zM1606.4 218.3h3.9v3.9h-3.9zM1625.9 218.3h7.8v3.9h-7.8zM1657.1 218.3h11.7v3.9h-11.7zM1551.8 222.2h7.8v3.9h-7.8zM1586.9 222.2h3.9v3.9h-3.9zM1602.5 222.2h3.9v3.9h-3.9zM1610.3 222.2h3.9v3.9h-3.9zM1649.3 222.2h3.9v3.9h-3.9zM1657.1 222.2h3.9v3.9h-3.9zM1544.0 226.1h3.9v3.9h-3.9zM1571.3 226.1h3.9v3.9h-3.9zM1602.5 226.1h11.7v3.9h-11.7zM1618.1 226.1h3.9v3.9h-3.9zM1633.7 226.1h7.8v3.9h-7.8zM1645.4 226.1h7.8v3.9h-7.8zM1563.5 230.0h3.9v3.9h-3.9zM1618.1 230.0h7.8v3.9h-7.8zM1637.6 230.0h3.9v3.9h-3.9zM1579.1 233.9h11.7v3.9h-11.7zM1602.5 233.9h7.8v3.9h-7.8zM1614.2 233.9h7.8v3.9h-7.8zM1629.8 233.9h11.7v3.9h-11.7zM1645.4 233.9h3.9v3.9h-3.9zM1586.9 237.8h3.9v3.9h-3.9zM1614.2 237.8h7.8v3.9h-7.8zM1575.2 241.7h3.9v3.9h-3.9zM1602.5 241.7h3.9v3.9h-3.9zM1633.7 241.7h3.9v3.9h-3.9zM1583.0 245.6h3.9v3.9h-3.9zM1610.3 245.6h3.9v3.9h-3.9zM1610.3 249.5h3.9v3.9h-3.9z"/>
<path fill="#383838" d="M1598.6 54.5h11.7v3.9h-11.7zM1622.0 54.5h7.8v3.9h-7.8zM1594.7 58.4h3.9v3.9h-3.9zM1602.5 58.4h11.7v3.9h-11.7zM1629.8 58.4h3.9v3.9h-3.9zM1637.6 58.4h3.9v3.9h-3.9zM1645.4 58.4h3.9v3.9h-3.9zM1606.4 62.3h3.9v3.9h-3.9zM1625.9 62.3h3.9v3.9h-3.9zM1602.5 66.2h3.9v3.9h-3.9zM1563.5 70.1h3.9v3.9h-3.9zM1610.3 70.1h3.9v3.9h-3.9zM1575.2 74.0h3.9v3.9h-3.9zM1586.9 74.0h3.9v3.9h-3.9zM1602.5 74.0h3.9v3.9h-3.9zM1610.3 77.9h7.8v3.9h-7.8zM1629.8 77.9h3.9v3.9h-3.9zM1641.5 77.9h3.9v3.9h-3.9zM1567.4 81.8h3.9v3.9h-3.9zM1625.9 81.8h7.8v3.9h-7.8zM1637.6 81.8h3.9v3.9h-3.9zM1649.3 81.8h7.8v3.9h-7.8zM1551.8 85.7h3.9v3.9h-3.9zM1567.4 85.7h3.9v3.9h-3.9zM1594.7 85.7h3.9v3.9h-3.9zM1641.5 85.7h7.8v3.9h-7.8zM1653.2 85.7h3.9v3.9h-3.9zM1547.9 89.6h3.9v3.9h-3.9zM1567.4 89.6h3.9v3.9h-3.9zM1583.0 89.6h3.9v3.9h-3.9zM1594.7 89.6h3.9v3.9h-3.9zM1614.2 89.6h3.9v3.9h-3.9zM1625.9 89.6h3.9v3.9h-3.9zM1661.0 89.6h3.9v3.9h-3.9zM1540.1 93.5h3.9v3.9h-3.9zM1555.7 93.5h3.9v3.9h-3.9zM1567.4 93.5h3.9v3.9h-3.9zM1586.9 93.5h7.8v3.9h-7.8zM1598.6 93.5h3.9v3.9h-3.9zM1618.1 93.5h11.7v3.9h-11.7zM1633.7 93.5h3.9v3.9h-3.9zM1649.3 93.5h7.8v3.9h-7.8zM1661.0 93.5h3.9v3.9h-3.9zM1583.0 97.4h3.9v3.9h-3.9zM1618.1 97.4h3.9v3.9h-3.9zM1633.7 97.4h7.8v3.9h-7.8zM1536.2 101.3h3.9v3.9h-3.9zM1563.5 101.3h7.8v3.9h-7.8zM1575.2 101.3h3.9v3.9h-3.9zM1598.6 101.3h3.9v3.9h-3.9zM1606.4 101.3h3.9v3.9h-3.9zM1614.2 101.3h3.9v3.9h-3.9zM1622.0 101.3h7.8v3.9h-7.8zM1633.7 101.3h7.8v3.9h-7.8zM1645.4 101.3h7.8v3.9h-7.8zM1661.0 101.3h3.9v3.9h-3.9zM1668.8 101.3h7.8v3.9h-7.8zM1567.4 105.2h3.9v3.9h-3.9zM1583.0 105.2h3.9v3.9h-3.9zM1598.6 105.2h7.8v3.9h-7.8zM1633.7 105.2h3.9v3.9h-3.9zM1645.4 105.2h3.9v3.9h-3.9zM1547.9 109.1h3.9v3.9h-3.9zM1563.5 109.1h7.8v3.9h-7.8zM1575.2 109.1h3.9v3.9h-3.9zM1583.0 109.1h3.9v3.9h-3.9zM1602.5 109.1h3.9v3.9h-3.9zM1618.1 109.1h3.9v3.9h-3.9zM1629.8 109.1h7.8v3.9h-7.8zM1645.4 109.1h7.8v3.9h-7.8zM1672.7 109.1h3.9v3.9h-3.9zM1551.8 113.0h3.9v3.9h-3.9zM1571.3 113.0h3.9v3.9h-3.9zM1668.8 113.0h7.8v3.9h-7.8zM1540.1 116.9h3.9v3.9h-3.9zM1559.6 116.9h3.9v3.9h-3.9zM1606.4 116.9h15.6v3.9h-15.6zM1633.7 116.9h7.8v3.9h-7.8zM1653.2 116.9h3.9v3.9h-3.9zM1532.3 120.8h15.6v3.9h-15.6zM1563.5 120.8h3.9v3.9h-3.9zM1575.2 120.8h3.9v3.9h-3.9zM1583.0 120.8h3.9v3.9h-3.9zM1606.4 120.8h3.9v3.9h-3.9zM1614.2 120.8h3.9v3.9h-3.9zM1622.0 120.8h3.9v3.9h-3.9zM1637.6 120.8h15.6v3.9h-15.6zM1540.1 124.7h3.9v3.9h-3.9zM1575.2 124.7h11.7v3.9h-11.7zM1625.9 124.7h3.9v3.9h-3.9zM1641.5 124.7h3.9v3.9h-3.9zM1649.3 124.7h3.9v3.9h-3.9zM1668.8 124.7h3.9v3.9h-3.9zM1528.4 128.6h11.7v3.9h-11.7zM1544.0 128.6h7.8v3.9h-7.8zM1559.6 128.6h3.9v3.9h-3.9zM1637.6 128.6h3.9v3.9h-3.9zM1668.8 128.6h3.9v3.9h-3.9zM1680.5 128.6h3.9v3.9h-3.9zM1532.3 132.5h3.9v3.9h-3.9zM1540.1 132.5h11.7v3.9h-11.7zM1559.6 132.5h3.9v3.9h-3.9zM1614.2 132.5h3.9v3.9h-3.9zM1649.3 132.5h3.9v3.9h-3.9zM1536.2 136.4h3.9v3.9h-3.9zM1614.2 136.4h3.9v3.9h-3.9zM1637.6 136.4h3.9v3.9h-3.9zM1653.2 136.4h3.9v3.9h-3.9zM1680.5 136.4h3.9v3.9h-3.9zM1532.3 140.3h3.9v3.9h-3.9zM1563.5 140.3h3.9v3.9h-3.9zM1575.2 140.3h3.9v3.9h-3.9zM1598.6 140.3h3.9v3.9h-3.9zM1614.2 140.3h3.9v3.9h-3.9zM1625.9 140.3h7.8v3.9h-7.8zM1668.8 140.3h3.9v3.9h-3.9zM1547.9 144.2h3.9v3.9h-3.9zM1555.7 144.2h3.9v3.9h-3.9zM1579.1 144.2h3.9v3.9h-3.9zM1598.6 144.2h3.9v3.9h-3.9zM1610.3 144.2h3.9v3.9h-3.9zM1625.9 144.2h3.9v3.9h-3.9zM1672.7 144.2h3.9v3.9h-3.9zM1528.4 148.1h3.9v3.9h-3.9zM1575.2 148.1h7.8v3.9h-7.8zM1625.9 148.1h7.8v3.9h-7.8zM1672.7 148.1h3.9v3.9h-3.9zM1532.3 152.0h3.9v3.9h-3.9zM1540.1 152.0h3.9v3.9h-3.9zM1575.2 152.0h3.9v3.9h-3.9zM1606.4 152.0h3.9v3.9h-3.9zM1614.2 152.0h3.9v3.9h-3.9zM1622.0 152.0h7.8v3.9h-7.8zM1653.2 152.0h3.9v3.9h-3.9zM1672.7 152.0h3.9v3.9h-3.9zM1532.3 155.9h15.6v3.9h-15.6zM1551.8 155.9h7.8v3.9h-7.8zM1575.2 155.9h3.9v3.9h-3.9zM1586.9 155.9h3.9v3.9h-3.9zM1598.6 155.9h3.9v3.9h-3.9zM1614.2 155.9h3.9v3.9h-3.9zM1637.6 155.9h19.5v3.9h-19.5zM1536.2 159.8h3.9v3.9h-3.9zM1544.0 159.8h3.9v3.9h-3.9zM1559.6 159.8h3.9v3.9h-3.9zM1575.2 159.8h3.9v3.9h-3.9zM1583.0 159.8h3.9v3.9h-3.9zM1594.7 159.8h7.8v3.9h-7.8zM1610.3 159.8h3.9v3.9h-3.9zM1625.9 159.8h3.9v3.9h-3.9zM1633.7 159.8h3.9v3.9h-3.9zM1680.5 159.8h3.9v3.9h-3.9zM1524.5 163.7h3.9v3.9h-3.9zM1559.6 163.7h7.8v3.9h-7.8zM1575.2 163.7h3.9v3.9h-3.9zM1598.6 163.7h3.9v3.9h-3.9zM1633.7 163.7h7.8v3.9h-7.8zM1661.0 163.7h7.8v3.9h-7.8zM1676.6 163.7h3.9v3.9h-3.9zM1528.4 167.6h11.7v3.9h-11.7zM1551.8 167.6h3.9v3.9h-3.9zM1563.5 167.6h3.9v3.9h-3.9zM1575.2 167.6h3.9v3.9h-3.9zM1583.0 167.6h3.9v3.9h-3.9zM1598.6 167.6h3.9v3.9h-3.9zM1633.7 167.6h3.9v3.9h-3.9zM1664.9 167.6h3.9v3.9h-3.9zM1544.0 171.5h7.8v3.9h-7.8zM1563.5 171.5h3.9v3.9h-3.9zM1579.1 171.5h7.8v3.9h-7.8zM1594.7 171.5h3.9v3.9h-3.9zM1610.3 171.5h3.9v3.9h-3.9zM1618.1 171.5h3.9v3.9h-3.9zM1629.8 171.5h3.9v3.9h-3.9zM1672.7 171.5h3.9v3.9h-3.9zM1540.1 175.4h3.9v3.9h-3.9zM1559.6 175.4h3.9v3.9h-3.9zM1594.7 175.4h3.9v3.9h-3.9zM1606.4 175.4h7.8v3.9h-7.8zM1618.1 175.4h3.9v3.9h-3.9zM1649.3 175.4h3.9v3.9h-3.9zM1676.6 175.4h3.9v3.9h-3.9zM1536.2 179.3h3.9v3.9h-3.9zM1551.8 179.3h3.9v3.9h-3.9zM1598.6 179.3h3.9v3.9h-3.9zM1610.3 179.3h3.9v3.9h-3.9zM1625.9 179.3h3.9v3.9h-3.9zM1633.7 179.3h7.8v3.9h-7.8zM1649.3 179.3h3.9v3.9h-3.9zM1657.1 179.3h3.9v3.9h-3.9zM1664.9 179.3h3.9v3.9h-3.9zM1676.6 179.3h7.8v3.9h-7.8zM1551.8 183.2h3.9v3.9h-3.9zM1598.6 183.2h3.9v3.9h-3.9zM1610.3 183.2h3.9v3.9h-3.9zM1637.6 183.2h7.8v3.9h-7.8zM1657.1 183.2h3.9v3.9h-3.9zM1668.8 183.2h3.9v3.9h-3.9zM1676.6 183.2h3.9v3.9h-3.9zM1536.2 187.1h3.9v3.9h-3.9zM1583.0 187.1h3.9v3.9h-3.9zM1594.7 187.1h3.9v3.9h-3.9zM1610.3 187.1h7.8v3.9h-7.8zM1622.0 187.1h3.9v3.9h-3.9zM1637.6 187.1h7.8v3.9h-7.8zM1657.1 187.1h7.8v3.9h-7.8zM1672.7 187.1h3.9v3.9h-3.9zM1532.3 191.0h11.7v3.9h-11.7zM1555.7 191.0h15.6v3.9h-15.6zM1579.1 191.0h3.9v3.9h-3.9zM1598.6 191.0h3.9v3.9h-3.9zM1625.9 191.0h3.9v3.9h-3.9zM1637.6 191.0h15.6v3.9h-15.6zM1661.0 191.0h7.8v3.9h-7.8zM1567.4 194.9h7.8v3.9h-7.8zM1625.9 194.9h3.9v3.9h-3.9zM1661.0 194.9h3.9v3.9h-3.9zM1536.2 198.8h7.8v3.9h-7.8zM1606.4 198.8h3.9v3.9h-3.9zM1661.0 198.8h3.9v3.9h-3.9zM1544.0 202.7h3.9v3.9h-3.9zM1559.6 202.7h3.9v3.9h-3.9zM1571.3 202.7h3.9v3.9h-3.9zM1579.1 202.7h3.9v3.9h-3.9zM1637.6 202.7h3.9v3.9h-3.9zM1661.0 202.7h3.9v3.9h-3.9zM1672.7 202.7h3.9v3.9h-3.9zM1555.7 206.6h7.8v3.9h-7.8zM1571.3 206.6h3.9v3.9h-3.9zM1579.1 206.6h3.9v3.9h-3.9zM1590.8 206.6h7.8v3.9h-7.8zM1645.4 206.6h3.9v3.9h-3.9zM1664.9 206.6h3.9v3.9h-3.9zM1676.6 206.6h3.9v3.9h-3.9zM1540.1 210.5h3.9v3.9h-3.9zM1555.7 210.5h11.7v3.9h-11.7zM1579.1 210.5h3.9v3.9h-3.9zM1633.7 210.5h3.9v3.9h-3.9zM1645.4 210.5h3.9v3.9h-3.9zM1547.9 214.4h3.9v3.9h-3.9zM1555.7 214.4h11.7v3.9h-11.7zM1575.2 214.4h11.7v3.9h-11.7zM1622.0 214.4h3.9v3.9h-3.9zM1653.2 214.4h3.9v3.9h-3.9zM1551.8 218.3h3.9v3.9h-3.9zM1567.4 218.3h7.8v3.9h-7.8zM1598.6 218.3h3.9v3.9h-3.9zM1637.6 218.3h3.9v3.9h-3.9zM1649.3 218.3h3.9v3.9h-3.9zM1547.9 222.2h3.9v3.9h-3.9zM1559.6 222.2h3.9v3.9h-3.9zM1571.3 222.2h3.9v3.9h-3.9zM1579.1 222.2h7.8v3.9h-7.8zM1622.0 222.2h3.9v3.9h-3.9zM1637.6 222.2h3.9v3.9h-3.9zM1653.2 222.2h3.9v3.9h-3.9zM1567.4 226.1h3.9v3.9h-3.9zM1575.2 226.1h3.9v3.9h-3.9zM1583.0 226.1h3.9v3.9h-3.9zM1551.8 230.0h3.9v3.9h-3.9zM1567.4 230.0h3.9v3.9h-3.9zM1579.1 230.0h11.7v3.9h-11.7zM1606.4 230.0h11.7v3.9h-11.7zM1555.7 233.9h3.9v3.9h-3.9zM1575.2 233.9h3.9v3.9h-3.9zM1590.8 233.9h11.7v3.9h-11.7zM1625.9 233.9h3.9v3.9h-3.9zM1559.6 237.8h3.9v3.9h-3.9zM1594.7 237.8h3.9v3.9h-3.9zM1610.3 241.7h7.8v3.9h-7.8zM1622.0 241.7h3.9v3.9h-3.9zM1629.8 241.7h3.9v3.9h-3.9zM1637.6 241.7h3.9v3.9h-3.9zM1625.9 245.6h3.9v3.9h-3.9zM1602.5 253.4h3.9v3.9h-3.9z"/>
<path fill="#404040" d="M1618.1 50.6h3.9v3.9h-3.9zM1610.3 54.5h3.9v3.9h-3.9zM1633.7 54.5h3.9v3.9h-3.9zM1618.1 58.4h7.8v3.9h-7.8zM1622.0 62.3h3.9v3.9h-3.9zM1641.5 62.3h3.9v3.9h-3.9zM1583.0 74.0h3.9v3.9h-3.9zM1614.2 74.0h3.9v3.9h-3.9zM1653.2 74.0h3.9v3.9h-3.9zM1653.2 77.9h3.9v3.9h-3.9zM1559.6 81.8h3.9v3.9h-3.9zM1583.0 81.8h3.9v3.9h-3.9zM1633.7 81.8h3.9v3.9h-3.9zM1645.4 81.8h3.9v3.9h-3.9zM1657.1 81.8h3.9v3.9h-3.9zM1559.6 85.7h7.8v3.9h-7.8zM1625.9 85.7h3.9v3.9h-3.9zM1633.7 85.7h7.8v3.9h-7.8zM1657.1 85.7h7.8v3.9h-7.8zM1590.8 89.6h3.9v3.9h-3.9zM1633.7 89.6h7.8v3.9h-7.8zM1653.2 89.6h3.9v3.9h-3.9zM1547.9 93.5h3.9v3.9h-3.9zM1664.9 93.5h3.9v3.9h-3.9zM1567.4 97.4h3.9v3.9h-3.9zM1586.9 97.4h7.8v3.9h-7.8zM1622.0 97.4h3.9v3.9h-3.9zM1653.2 97.4h3.9v3.9h-3.9zM1668.8 97.4h3.9v3.9h-3.9zM1579.1 101.3h3.9v3.9h-3.9zM1641.5 101.3h3.9v3.9h-3.9zM1653.2 101.3h3.9v3.9h-3.9zM1563.5 105.2h3.9v3.9h-3.9zM1571.3 105.2h3.9v3.9h-3.9zM1606.4 105.2h3.9v3.9h-3.9zM1618.1 105.2h7.8v3.9h-7.8zM1641.5 105.2h3.9v3.9h-3.9zM1649.3 105.2h7.8v3.9h-7.8zM1668.8 105.2h3.9v3.9h-3.9zM1551.8 109.1h3.9v3.9h-3.9zM1598.6 109.1h3.9v3.9h-3.9zM1641.5 109.1h3.9v3.9h-3.9zM1676.6 109.1h3.9v3.9h-3.9zM1540.1 113.0h3.9v3.9h-3.9zM1563.5 113.0h3.9v3.9h-3.9zM1645.4 113.0h3.9v3.9h-3.9zM1653.2 113.0h3.9v3.9h-3.9zM1555.7 116.9h3.9v3.9h-3.9zM1567.4 116.9h3.9v3.9h-3.9zM1575.2 116.9h3.9v3.9h-3.9zM1583.0 116.9h3.9v3.9h-3.9zM1598.6 116.9h3.9v3.9h-3.9zM1641.5 116.9h3.9v3.9h-3.9zM1649.3 116.9h3.9v3.9h-3.9zM1676.6 116.9h3.9v3.9h-3.9zM1579.1 120.8h3.9v3.9h-3.9zM1610.3 120.8h3.9v3.9h-3.9zM1618.1 120.8h3.9v3.9h-3.9zM1532.3 124.7h3.9v3.9h-3.9zM1606.4 124.7h7.8v3.9h-7.8zM1629.8 124.7h11.7v3.9h-11.7zM1664.9 124.7h3.9v3.9h-3.9zM1610.3 128.6h3.9v3.9h-3.9zM1625.9 128.6h7.8v3.9h-7.8zM1664.9 128.6h3.9v3.9h-3.9zM1528.4 132.5h3.9v3.9h-3.9zM1594.7 132.5h3.9v3.9h-3.9zM1610.3 132.5h3.9v3.9h-3.9zM1664.9 132.5h3.9v3.9h-3.9zM1676.6 132.5h3.9v3.9h-3.9zM1540.1 136.4h7.8v3.9h-7.8zM1629.8 136.4h3.9v3.9h-3.9zM1664.9 136.4h3.9v3.9h-3.9zM1540.1 140.3h7.8v3.9h-7.8zM1567.4 140.3h3.9v3.9h-3.9zM1594.7 140.3h3.9v3.9h-3.9zM1633.7 140.3h3.9v3.9h-3.9zM1653.2 140.3h3.9v3.9h-3.9zM1532.3 144.2h3.9v3.9h-3.9zM1540.1 144.2h7.8v3.9h-7.8zM1563.5 144.2h3.9v3.9h-3.9zM1571.3 144.2h3.9v3.9h-3.9zM1586.9 144.2h3.9v3.9h-3.9zM1594.7 144.2h3.9v3.9h-3.9zM1618.1 144.2h7.8v3.9h-7.8zM1637.6 144.2h7.8v3.9h-7.8zM1649.3 144.2h3.9v3.9h-3.9zM1664.9 144.2h3.9v3.9h-3.9zM1532.3 148.1h3.9v3.9h-3.9zM1547.9 148.1h3.9v3.9h-3.9zM1567.4 148.1h3.9v3.9h-3.9zM1645.4 148.1h3.9v3.9h-3.9zM1664.9 148.1h3.9v3.9h-3.9zM1528.4 152.0h3.9v3.9h-3.9zM1544.0 152.0h11.7v3.9h-11.7zM1567.4 152.0h3.9v3.9h-3.9zM1610.3 152.0h3.9v3.9h-3.9zM1633.7 152.0h19.5v3.9h-19.5zM1661.0 152.0h3.9v3.9h-3.9zM1680.5 152.0h3.9v3.9h-3.9zM1547.9 155.9h3.9v3.9h-3.9zM1610.3 155.9h3.9v3.9h-3.9zM1625.9 155.9h3.9v3.9h-3.9zM1633.7 155.9h3.9v3.9h-3.9zM1547.9 159.8h7.8v3.9h-7.8zM1586.9 159.8h3.9v3.9h-3.9zM1629.8 159.8h3.9v3.9h-3.9zM1547.9 163.7h3.9v3.9h-3.9zM1555.7 163.7h3.9v3.9h-3.9zM1579.1 163.7h3.9v3.9h-3.9zM1586.9 163.7h3.9v3.9h-3.9zM1594.7 163.7h3.9v3.9h-3.9zM1680.5 163.7h3.9v3.9h-3.9zM1555.7 167.6h7.8v3.9h-7.8zM1586.9 167.6h3.9v3.9h-3.9zM1645.4 167.6h3.9v3.9h-3.9zM1668.8 167.6h11.7v3.9h-11.7zM1540.1 171.5h3.9v3.9h-3.9zM1551.8 171.5h11.7v3.9h-11.7zM1590.8 171.5h3.9v3.9h-3.9zM1598.6 171.5h3.9v3.9h-3.9zM1637.6 171.5h7.8v3.9h-7.8zM1664.9 171.5h3.9v3.9h-3.9zM1544.0 175.4h3.9v3.9h-3.9zM1586.9 175.4h3.9v3.9h-3.9zM1547.9 179.3h3.9v3.9h-3.9zM1586.9 179.3h3.9v3.9h-3.9zM1594.7 179.3h3.9v3.9h-3.9zM1614.2 179.3h3.9v3.9h-3.9zM1629.8 179.3h3.9v3.9h-3.9zM1641.5 179.3h3.9v3.9h-3.9zM1540.1 183.2h11.7v3.9h-11.7zM1618.1 183.2h3.9v3.9h-3.9zM1633.7 183.2h3.9v3.9h-3.9zM1649.3 183.2h3.9v3.9h-3.9zM1661.0 183.2h3.9v3.9h-3.9zM1544.0 187.1h3.9v3.9h-3.9zM1551.8 187.1h3.9v3.9h-3.9zM1571.3 187.1h3.9v3.9h-3.9zM1618.1 187.1h3.9v3.9h-3.9zM1649.3 187.1h3.9v3.9h-3.9zM1664.9 187.1h3.9v3.9h-3.9zM1680.5 187.1h3.9v3.9h-3.9zM1571.3 191.0h3.9v3.9h-3.9zM1583.0 191.0h3.9v3.9h-3.9zM1594.7 191.0h3.9v3.9h-3.9zM1622.0 191.0h3.9v3.9h-3.9zM1629.8 191.0h7.8v3.9h-7.8zM1680.5 191.0h3.9v3.9h-3.9zM1544.0 194.9h3.9v3.9h-3.9zM1559.6 194.9h7.8v3.9h-7.8zM1579.1 194.9h3.9v3.9h-3.9zM1594.7 194.9h3.9v3.9h-3.9zM1633.7 194.9h7.8v3.9h-7.8zM1547.9 198.8h3.9v3.9h-3.9zM1559.6 198.8h11.7v3.9h-11.7zM1594.7 198.8h7.8v3.9h-7.8zM1649.3 198.8h3.9v3.9h-3.9zM1672.7 198.8h3.9v3.9h-3.9zM1532.3 202.7h3.9v3.9h-3.9zM1563.5 202.7h3.9v3.9h-3.9zM1594.7 202.7h3.9v3.9h-3.9zM1664.9 202.7h3.9v3.9h-3.9zM1540.1 206.6h3.9v3.9h-3.9zM1563.5 206.6h7.8v3.9h-7.8zM1672.7 206.6h3.9v3.9h-3.9zM1551.8 210.5h3.9v3.9h-3.9zM1583.0 210.5h3.9v3.9h-3.9zM1590.8 210.5h11.7v3.9h-11.7zM1668.8 210.5h3.9v3.9h-3.9zM1571.3 214.4h3.9v3.9h-3.9zM1590.8 214.4h3.9v3.9h-3.9zM1645.4 214.4h3.9v3.9h-3.9zM1661.0 214.4h7.8v3.9h-7.8zM1544.0 218.3h3.9v3.9h-3.9zM1555.7 218.3h7.8v3.9h-7.8zM1579.1 218.3h3.9v3.9h-3.9zM1586.9 218.3h11.7v3.9h-11.7zM1641.5 218.3h3.9v3.9h-3.9zM1653.2 218.3h3.9v3.9h-3.9zM1540.1 222.2h7.8v3.9h-7.8zM1563.5 222.2h3.9v3.9h-3.9zM1594.7 222.2h7.8v3.9h-7.8zM1594.7 226.1h7.8v3.9h-7.8zM1622.0 226.1h3.9v3.9h-3.9zM1653.2 226.1h3.9v3.9h-3.9zM1559.6 230.0h3.9v3.9h-3.9zM1575.2 230.0h3.9v3.9h-3.9zM1598.6 230.0h7.8v3.9h-7.8zM1567.4 233.9h7.8v3.9h-7.8zM1567.4 237.8h7.8v3.9h-7.8zM1598.6 237.8h3.9v3.9h-3.9zM1633.7 237.8h3.9v3.9h-3.9zM1641.5 237.8h3.9v3.9h-3.9zM1579.1 241.7h7.8v3.9h-7.8zM1594.7 241.7h3.9v3.9h-3.9zM1618.1 241.7h3.9v3.9h-3.9zM1586.9 245.6h3.9v3.9h-3.9z"/>
<path fill="#4a4a4a" d="M1610.3 50.6h3.9v3.9h-3.9zM1614.2 54.5h3.9v3.9h-3.9zM1625.9 58.4h3.9v3.9h-3.9zM1649.3 66.2h3.9v3.9h-3.9zM1567.4 70.1h3.9v3.9h-3.9zM1583.0 70.1h3.9v3.9h-3.9zM1645.4 70.1h7.8v3.9h-7.8zM1559.6 74.0h3.9v3.9h-3.9zM1641.5 74.0h3.9v3.9h-3.9zM1657.1 74.0h3.9v3.9h-3.9zM1559.6 77.9h7.8v3.9h-7.8zM1579.1 77.9h3.9v3.9h-3.9zM1579.1 81.8h3.9v3.9h-3.9zM1614.2 81.8h3.9v3.9h-3.9zM1614.2 85.7h3.9v3.9h-3.9zM1629.8 85.7h3.9v3.9h-3.9zM1559.6 89.6h7.8v3.9h-7.8zM1622.0 89.6h3.9v3.9h-3.9zM1629.8 89.6h3.9v3.9h-3.9zM1657.1 89.6h3.9v3.9h-3.9zM1664.9 89.6h3.9v3.9h-3.9zM1559.6 93.5h7.8v3.9h-7.8zM1540.1 97.4h23.4v3.9h-23.4zM1571.3 97.4h3.9v3.9h-3.9zM1594.7 97.4h3.9v3.9h-3.9zM1540.1 101.3h11.7v3.9h-11.7zM1555.7 101.3h7.8v3.9h-7.8zM1571.3 101.3h3.9v3.9h-3.9zM1590.8 101.3h3.9v3.9h-3.9zM1618.1 101.3h3.9v3.9h-3.9zM1536.2 105.2h7.8v3.9h-7.8zM1547.9 105.2h3.9v3.9h-3.9zM1555.7 105.2h7.8v3.9h-7.8zM1575.2 105.2h3.9v3.9h-3.9zM1594.7 105.2h3.9v3.9h-3.9zM1614.2 105.2h3.9v3.9h-3.9zM1625.9 105.2h3.9v3.9h-3.9zM1536.2 109.1h11.7v3.9h-11.7zM1594.7 109.1h3.9v3.9h-3.9zM1625.9 109.1h3.9v3.9h-3.9zM1536.2 113.0h3.9v3.9h-3.9zM1555.7 113.0h7.8v3.9h-7.8zM1590.8 113.0h11.7v3.9h-11.7zM1637.6 113.0h7.8v3.9h-7.8zM1544.0 116.9h3.9v3.9h-3.9zM1657.1 116.9h3.9v3.9h-3.9zM1567.4 120.8h3.9v3.9h-3.9zM1653.2 120.8h7.8v3.9h-7.8zM1614.2 124.7h7.8v3.9h-7.8zM1653.2 124.7h3.9v3.9h-3.9zM1661.0 124.7h3.9v3.9h-3.9zM1563.5 128.6h3.9v3.9h-3.9zM1614.2 128.6h11.7v3.9h-11.7zM1618.1 132.5h7.8v3.9h-7.8zM1629.8 132.5h7.8v3.9h-7.8zM1653.2 132.5h3.9v3.9h-3.9zM1661.0 132.5h3.9v3.9h-3.9zM1622.0 136.4h7.8v3.9h-7.8zM1657.1 136.4h3.9v3.9h-3.9zM1536.2 140.3h3.9v3.9h-3.9zM1657.1 140.3h11.7v3.9h-11.7zM1528.4 144.2h3.9v3.9h-3.9zM1633.7 144.2h3.9v3.9h-3.9zM1653.2 144.2h11.7v3.9h-11.7zM1668.8 144.2h3.9v3.9h-3.9zM1536.2 148.1h3.9v3.9h-3.9zM1544.0 148.1h3.9v3.9h-3.9zM1610.3 148.1h7.8v3.9h-7.8zM1633.7 148.1h7.8v3.9h-7.8zM1649.3 148.1h7.8v3.9h-7.8zM1664.9 152.0h7.8v3.9h-7.8zM1676.6 152.0h3.9v3.9h-3.9zM1629.8 155.9h3.9v3.9h-3.9zM1661.0 155.9h15.6v3.9h-15.6zM1680.5 155.9h3.9v3.9h-3.9zM1555.7 159.8h3.9v3.9h-3.9zM1571.3 159.8h3.9v3.9h-3.9zM1590.8 159.8h3.9v3.9h-3.9zM1668.8 159.8h7.8v3.9h-7.8zM1551.8 163.7h3.9v3.9h-3.9zM1583.0 163.7h3.9v3.9h-3.9zM1590.8 163.7h3.9v3.9h-3.9zM1668.8 163.7h7.8v3.9h-7.8zM1547.9 167.6h3.9v3.9h-3.9zM1579.1 167.6h3.9v3.9h-3.9zM1594.7 167.6h3.9v3.9h-3.9zM1637.6 167.6h3.9v3.9h-3.9zM1680.5 167.6h3.9v3.9h-3.9zM1532.3 171.5h3.9v3.9h-3.9zM1614.2 171.5h3.9v3.9h-3.9zM1676.6 171.5h7.8v3.9h-7.8zM1536.2 175.4h3.9v3.9h-3.9zM1614.2 175.4h3.9v3.9h-3.9zM1653.2 175.4h3.9v3.9h-3.9zM1540.1 179.3h7.8v3.9h-7.8zM1618.1 179.3h3.9v3.9h-3.9zM1653.2 179.3h3.9v3.9h-3.9zM1528.4 183.2h7.8v3.9h-7.8zM1586.9 183.2h3.9v3.9h-3.9zM1614.2 183.2h3.9v3.9h-3.9zM1622.0 183.2h11.7v3.9h-11.7zM1528.4 187.1h3.9v3.9h-3.9zM1586.9 187.1h3.9v3.9h-3.9zM1598.6 187.1h3.9v3.9h-3.9zM1625.9 187.1h11.7v3.9h-11.7zM1547.9 191.0h7.8v3.9h-7.8zM1575.2 191.0h3.9v3.9h-3.9zM1590.8 191.0h3.9v3.9h-3.9zM1653.2 191.0h3.9v3.9h-3.9zM1547.9 194.9h3.9v3.9h-3.9zM1653.2 194.9h7.8v3.9h-7.8zM1672.7 194.9h3.9v3.9h-3.9zM1680.5 194.9h3.9v3.9h-3.9zM1555.7 198.8h3.9v3.9h-3.9zM1637.6 198.8h3.9v3.9h-3.9zM1653.2 198.8h3.9v3.9h-3.9zM1664.9 198.8h3.9v3.9h-3.9zM1540.1 202.7h3.9v3.9h-3.9zM1590.8 202.7h3.9v3.9h-3.9zM1653.2 202.7h3.9v3.9h-3.9zM1586.9 206.6h3.9v3.9h-3.9zM1598.6 206.6h3.9v3.9h-3.9zM1668.8 206.6h3.9v3.9h-3.9zM1586.9 210.5h3.9v3.9h-3.9zM1653.2 210.5h3.9v3.9h-3.9zM1664.9 210.5h3.9v3.9h-3.9zM1567.4 222.2h3.9v3.9h-3.9zM1575.2 222.2h3.9v3.9h-3.9zM1590.8 222.2h3.9v3.9h-3.9zM1579.1 226.1h3.9v3.9h-3.9zM1586.9 226.1h3.9v3.9h-3.9zM1641.5 226.1h3.9v3.9h-3.9zM1590.8 230.0h7.8v3.9h-7.8zM1559.6 233.9h7.8v3.9h-7.8zM1622.0 233.9h3.9v3.9h-3.9zM1575.2 237.8h7.8v3.9h-7.8zM1622.0 237.8h3.9v3.9h-3.9zM1629.8 237.8h3.9v3.9h-3.9zM1606.4 245.6h3.9v3.9h-3.9zM1594.7 249.5h3.9v3.9h-3.9zM1606.4 249.5h3.9v3.9h-3.9z"/>
<path fill="#565656" d="M1618.1 54.5h3.9v3.9h-3.9zM1645.4 62.3h3.9v3.9h-3.9zM1571.3 66.2h3.9v3.9h-3.9zM1571.3 70.1h11.7v3.9h-11.7zM1653.2 70.1h3.9v3.9h-3.9zM1579.1 74.0h3.9v3.9h-3.9zM1555.7 77.9h3.9v3.9h-3.9zM1583.0 77.9h3.9v3.9h-3.9zM1657.1 77.9h3.9v3.9h-3.9zM1579.1 85.7h3.9v3.9h-3.9zM1579.1 89.6h3.9v3.9h-3.9zM1544.0 93.5h3.9v3.9h-3.9zM1594.7 93.5h3.9v3.9h-3.9zM1668.8 93.5h3.9v3.9h-3.9zM1563.5 97.4h3.9v3.9h-3.9zM1551.8 101.3h3.9v3.9h-3.9zM1586.9 101.3h3.9v3.9h-3.9zM1544.0 105.2h3.9v3.9h-3.9zM1551.8 105.2h3.9v3.9h-3.9zM1637.6 105.2h3.9v3.9h-3.9zM1555.7 109.1h7.8v3.9h-7.8zM1586.9 109.1h7.8v3.9h-7.8zM1637.6 109.1h3.9v3.9h-3.9zM1544.0 113.0h3.9v3.9h-3.9zM1661.0 113.0h3.9v3.9h-3.9zM1594.7 116.9h3.9v3.9h-3.9zM1625.9 116.9h3.9v3.9h-3.9zM1661.0 116.9h3.9v3.9h-3.9zM1544.0 124.7h3.9v3.9h-3.9zM1563.5 124.7h3.9v3.9h-3.9zM1653.2 128.6h11.7v3.9h-11.7zM1625.9 132.5h3.9v3.9h-3.9zM1657.1 132.5h3.9v3.9h-3.9zM1594.7 136.4h3.9v3.9h-3.9zM1618.1 136.4h3.9v3.9h-3.9zM1661.0 136.4h3.9v3.9h-3.9zM1618.1 140.3h3.9v3.9h-3.9zM1540.1 148.1h3.9v3.9h-3.9zM1551.8 148.1h3.9v3.9h-3.9zM1664.9 159.8h3.9v3.9h-3.9zM1532.3 175.4h3.9v3.9h-3.9zM1680.5 175.4h3.9v3.9h-3.9zM1528.4 179.3h3.9v3.9h-3.9zM1653.2 183.2h3.9v3.9h-3.9zM1555.7 194.9h3.9v3.9h-3.9zM1664.9 194.9h3.9v3.9h-3.9zM1676.6 194.9h3.9v3.9h-3.9zM1668.8 202.7h3.9v3.9h-3.9zM1536.2 206.6h3.9v3.9h-3.9zM1653.2 206.6h3.9v3.9h-3.9zM1586.9 214.4h3.9v3.9h-3.9zM1645.4 218.3h3.9v3.9h-3.9zM1641.5 222.2h3.9v3.9h-3.9zM1590.8 226.1h3.9v3.9h-3.9zM1649.3 230.0h3.9v3.9h-3.9zM1563.5 237.8h3.9v3.9h-3.9zM1637.6 237.8h3.9v3.9h-3.9zM1590.8 241.7h3.9v3.9h-3.9zM1598.6 241.7h3.9v3.9h-3.9zM1602.5 245.6h3.9v3.9h-3.9zM1598.6 249.5h3.9v3.9h-3.9z"/>
<path fill="#646464" d="M1614.2 50.6h3.9v3.9h-3.9zM1575.2 66.2h3.9v3.9h-3.9zM1645.4 66.2h3.9v3.9h-3.9zM1563.5 74.0h3.9v3.9h-3.9zM1579.1 93.5h3.9v3.9h-3.9zM1586.9 105.2h7.8v3.9h-7.8zM1625.9 113.0h3.9v3.9h-3.9zM1661.0 120.8h3.9v3.9h-3.9zM1657.1 124.7h3.9v3.9h-3.9zM1528.4 136.4h3.9v3.9h-3.9zM1536.2 144.2h3.9v3.9h-3.9zM1622.0 148.1h3.9v3.9h-3.9zM1641.5 148.1h3.9v3.9h-3.9zM1536.2 152.0h3.9v3.9h-3.9zM1567.4 155.9h7.8v3.9h-7.8zM1676.6 155.9h3.9v3.9h-3.9zM1676.6 159.8h3.9v3.9h-3.9zM1528.4 175.4h3.9v3.9h-3.9zM1532.3 179.3h3.9v3.9h-3.9zM1532.3 187.1h3.9v3.9h-3.9zM1653.2 187.1h3.9v3.9h-3.9zM1676.6 191.0h3.9v3.9h-3.9zM1676.6 198.8h3.9v3.9h-3.9zM1536.2 202.7h3.9v3.9h-3.9zM1598.6 202.7h3.9v3.9h-3.9zM1625.9 241.7h3.9v3.9h-3.9zM1594.7 245.6h3.9v3.9h-3.9z"/>
<path fill="#787878" d="M1625.9 237.8h3.9v3.9h-3.9zM1590.8 245.6h3.9v3.9h-3.9zM1598.6 245.6h3.9v3.9h-3.9z"/>
<path fill="#919191" d="M1602.5 249.5h3.9v3.9h-3.9z"/>
<!-- crosshairs -->
<g stroke="#30c030" stroke-width="1.9">
<line x1="114" y1="102.8" x2="528" y2="102.8"/>
<line x1="321" y1="39" x2="321" y2="311.5"/>
<line x1="750" y1="102.8" x2="1163.6" y2="102.8"/>
<line x1="881.3" y1="39" x2="881.3" y2="311.5"/>
<line x1="1448" y1="145" x2="1756" y2="145"/>
<line x1="1546" y1="0" x2="1546" y2="300"/>
</g>
</svg>

<div class="t" style="left:615px;top:144.5px;font-size:17.5px;color:#f0f0f0">A</div>
<div class="t" style="left:640px;top:144.5px;font-size:17.5px;color:#f0f0f0">R</div>
<div class="t" style="left:1264px;top:144.5px;font-size:17.5px;color:#f0f0f0">L</div>
<div class="t" style="left:1286px;top:144.5px;font-size:17.5px;color:#f0f0f0">R</div>
<div class="t" style="left:1909px;top:144.5px;font-size:17.5px;color:#f0f0f0">L</div>
<div class="t" style="left:-8px;top:144.5px;font-size:17.5px;color:#f0f0f0">P</div>
<div class="t" style="left:305px;top:300px;font-size:17.5px;color:#f0f0f0">I</div>
<div class="t" style="left:952px;top:300px;font-size:17.5px;color:#f0f0f0">I</div>
<div class="t" style="left:1594px;top:300px;font-size:17.5px;color:#f0f0f0">P</div>
<div class="t" style="left:302px;top:-12px;font-size:17.5px;color:#f0f0f0">S</div>
<div class="t" style="left:948px;top:-12px;font-size:17.5px;color:#f0f0f0">S</div>
<div class="t" style="left:1594px;top:-12px;font-size:17.5px;color:#f0f0f0">A</div>
</div>

<!-- separator -->
<div class="a" style="left:0;top:322px;width:1920px;height:7px;background:linear-gradient(#e6e5e1,#dad9d5 50%,#e6e5e1)"></div>
<div class="a" style="left:0;top:329px;width:1920px;height:1px;background:#a9a8a3"></div>

<!-- ===== overlay list panel ===== -->
<div class="hdr" style="left:0;top:330px;width:952px;height:22px"></div>
<div class="t" style="left:-1px;top:333px;font-size:11px;color:#222;letter-spacing:0.55px;-webkit-text-stroke:0.45px #222">verlay list</div>
<div class="cls" style="left:936px;top:333px"></div>
<div class="a" style="left:0;top:350px;width:952px;height:191px;background:#dcdad5"></div>
<div class="wh" style="left:6px;top:363px;width:946px;height:163px"></div>
<!-- left cut-off toolbar -->
<div class="a" style="left:0;top:349px;width:6px;height:101px;border-right:2px solid #333;background:#dcdad5"></div>
<div class="a" style="left:0;top:373px;width:5px;height:1px;background:#333"></div>
<div class="a" style="left:0;top:398px;width:5px;height:1px;background:#333"></div>
<div class="a" style="left:0;top:424px;width:5px;height:1px;background:#333"></div>
<!-- rows -->
<svg class="a" style="left:0;top:0;width:0;height:0">
<defs>
<g id="floppy"><path d="M1.5 1.5 H10 L13.5 5 V13.5 H1.5 Z" fill="none" stroke="#555" stroke-width="1.6" stroke-linejoin="round"/><path d="M4 1.5 V5 H9 V1.5" fill="none" stroke="#666" stroke-width="1.4"/><path d="M4.5 10.5 H10.5" stroke="#444" stroke-width="1.6"/></g>
<g id="link"><g><ellipse cx="5.4" cy="10.9" rx="4.6" ry="3.1" transform="rotate(-45 5.4 10.9)" fill="#a8c0ff" stroke="#0a1850" stroke-width="1.9"/><ellipse cx="10" cy="5.6" rx="4.7" ry="3.2" transform="rotate(-45 10 5.6)" fill="#a8c0ff" stroke="#0a1850" stroke-width="1.9"/><path d="M7.6 10 A3 3 0 0 0 6.2 7.2" fill="none" stroke="#0a1850" stroke-width="1.9"/></g></g>
<g id="eye"><path d="M0.9 5.4 C3.5 -0.2, 12.5 -0.2, 15.1 5.4 C12.5 11, 3.5 11, 0.9 5.4 Z" fill="#90b4ff" stroke="#143a8e" stroke-width="1.9"/><circle cx="8" cy="5.4" r="3.1" fill="#143a8e"/><circle cx="8" cy="5.4" r="1" fill="#d0e0ff"/></g>
</defs></svg>
<div class="a" style="left:6px;top:363px;width:26px;height:26px;background:#dedcd7;border-top:1px solid #f7f6f4;border-left:1px solid #f7f6f4;border-bottom:2px solid #333"></div>
<div class="a" style="left:6px;top:389px;width:26px;height:26px;background:#dedcd7;border-top:1px solid #f7f6f4;border-left:1px solid #f7f6f4;border-bottom:2px solid #333"></div>
<div class="a" style="left:32px;top:363px;width:27px;height:26px;background:#cfcdc8;border-top:2px solid #333;border-left:2px solid #333;border-right:1px solid #fafaf8;border-bottom:1px solid #fafaf8"></div>
<div class="a" style="left:32px;top:389px;width:27px;height:26px;background:#cfcdc8;border-top:2px solid #333;border-left:2px solid #333;border-right:1px solid #fafaf8;border-bottom:1px solid #fafaf8"></div>
<div class="a" style="left:59px;top:363px;width:26px;height:26px;background:#cfcdc8;border-top:2px solid #333;border-left:2px solid #333;border-right:1px solid #fafaf8;border-bottom:1px solid #fafaf8"></div>
<div class="a" style="left:59px;top:389px;width:26px;height:26px;background:#cfcdc8;border-top:2px solid #333;border-left:2px solid #333;border-right:1px solid #fafaf8;border-bottom:1px solid #fafaf8"></div>
<svg class="a" style="left:12px;top:369px;width:16px;height:16px"><use href="#floppy"/></svg>
<svg class="a" style="left:12px;top:395px;width:16px;height:16px"><use href="#floppy"/></svg>
<svg class="a" style="left:38px;top:368px;width:16px;height:16px"><use href="#link"/></svg>
<svg class="a" style="left:38px;top:394px;width:16px;height:16px"><use href="#link"/></svg>
<svg class="a" style="left:64px;top:371px;width:16px;height:12px"><use href="#eye"/></svg>
<svg class="a" style="left:64px;top:397px;width:16px;height:12px"><use href="#eye"/></svg>
<div class="sel" style="left:85px;top:363px;width:867px;height:26px"></div>
<div class="t" style="left:86px;top:368px;font-size:14px;letter-spacing:0.25px;color:#10202e">004_0001_rest_ep2d_bold_ME_wholebrain_21min_20251031082825_e2</div>
<div class="t" style="left:86px;top:395px;font-size:14px;letter-spacing:0.25px;color:#111">004_0001_rest_ep2d_bold_ME_wholebrain_21min_20251031082825_e1</div>
<!-- scroll arrows -->
<div class="a" style="left:474px;top:354px;border-left:4.5px solid transparent;border-right:4.5px solid transparent;border-bottom:7.5px solid #8a8a8a"></div>
<div class="a" style="left:474px;top:530px;border-left:4.5px solid transparent;border-right:4.5px solid transparent;border-top:8px solid #7a7a7a"></div>

<!-- vertical separator -->
<div class="a" style="left:952px;top:328px;width:6px;height:213px;background:#d9d8d3;border-left:1px solid #e8e7e3;border-right:1px solid #b9b8b3"></div>

<!-- ===== location panel ===== -->
<div class="hdr" style="left:958px;top:330px;width:962px;height:20px"></div>
<div class="t" style="left:962px;top:333px;font-size:11px;letter-spacing:0.6px;color:#222;-webkit-text-stroke:0.45px #222">Location</div>
<div class="cls" style="left:1909px;top:333px"></div>
<div class="wh" style="left:1304px;top:349px;width:616px;height:191px"></div>
<!-- tabs -->
<div class="a" style="left:957px;top:349px;width:1px;height:191px;background:#b5b4af"></div>
<div class="a" style="left:976px;top:350px;width:1px;height:190px;background:#9a9994"></div>
<div class="a" style="left:960px;top:352px;width:16px;height:62px;background:#eceae6;border-left:1px solid #fff;border-top:1px solid #fff"></div>
<div class="a" style="left:960px;top:414px;width:16px;height:60px;background:#d6d4cf;border-left:1px solid #f5f5f3;border-bottom:1px solid #9a9994"></div>
<div class="t" style="left:961px;top:412px;font-size:13.4px;letter-spacing:0.5px;transform-origin:0 0;transform:rotate(-90deg);color:#111">Location</div>
<div class="t" style="left:961px;top:468px;font-size:13.4px;letter-spacing:0.8px;transform-origin:0 0;transform:rotate(-90deg);color:#111">History</div>
<div class="t" style="left:979px;top:350px;font-size:13.4px;letter-spacing:0.57px;color:#111">Coordinates: Scanner anatomical</div>
<div class="t" style="left:1206px;top:350px;font-size:13.4px;letter-spacing:0.6px;color:#111">Voxel location</div>
<div class="t" style="left:1152px;top:443px;font-size:13.4px;letter-spacing:0.4px;color:#111">Volume</div>
<div class="inp" style="left:979px;top:367px;width:207px;height:23px"></div>
<div class="inp" style="left:979px;top:392px;width:207px;height:23px"></div>
<div class="inp" style="left:979px;top:417px;width:207px;height:23px"></div>
<div class="inp" style="left:1206px;top:367px;width:66px;height:23px"></div>
<div class="inp" style="left:1206px;top:392px;width:66px;height:23px"></div>
<div class="inp" style="left:1206px;top:417px;width:66px;height:23px"></div>
<div class="inp" style="left:1206px;top:443px;width:66px;height:23px"></div>
<div class="spin" style="left:1186px;top:367px;width:14px;height:23px"></div>
<div class="spin" style="left:1186px;top:392px;width:14px;height:23px"></div>
<div class="spin" style="left:1186px;top:417px;width:14px;height:23px"></div>
<div class="spin" style="left:1272px;top:367px;width:14px;height:23px"></div>
<div class="spin" style="left:1272px;top:392px;width:14px;height:23px"></div>
<div class="spin" style="left:1272px;top:417px;width:14px;height:23px"></div>
<div class="spin" style="left:1272px;top:443px;width:14px;height:23px"></div>
<div class="t" style="left:983px;top:372px;font-size:13.8px;letter-spacing:0.3px;color:#111">40.88028</div>
<div class="t" style="left:983px;top:397px;font-size:13.8px;letter-spacing:0.3px;color:#111">10.00408</div>
<div class="t" style="left:983px;top:422px;font-size:13.8px;letter-spacing:0.3px;color:#111">26.57174</div>
<div class="t" style="left:1210px;top:372px;font-size:13.8px;letter-spacing:0.3px;color:#111">35</div>
<div class="t" style="left:1210px;top:397px;font-size:13.8px;letter-spacing:0.3px;color:#111">54</div>
<div class="t" style="left:1210px;top:422px;font-size:13.8px;letter-spacing:0.3px;color:#111">55</div>
<div class="t" style="left:1210px;top:448px;font-size:13.8px;letter-spacing:0.3px;color:#111">0</div>
<!-- info -->
<div class="t" style="left:1314px;top:361px;font-size:14px;font-weight:bold;letter-spacing:0.93px;color:#5a5ad6">004_0001_rest_ep2d_bold_ME_wholebrain_21min_20251031082825_e2</div>
<div class="t" style="left:1314px;top:378px;font-size:14px;letter-spacing:0.3px;color:#7474e0">[35 54 55 0]: 5735</div>
<div class="t" style="left:1314px;top:395px;font-size:14px;font-weight:bold;letter-spacing:0.93px;color:#0a0a0a">004_0001_rest_ep2d_bold_ME_wholebrain_21min_20251031082825_e1</div>
<div class="t" style="left:1314px;top:412px;font-size:14px;letter-spacing:0.3px;color:#111">[35 54 55 0]: 13725</div>

<!-- separator 2 -->
<div class="a" style="left:0;top:540px;width:1920px;height:2px;background:#a8a7a2"></div>
<div class="a" style="left:0;top:542px;width:1920px;height:5px;background:#e5e4e0"></div>
<div class="a" style="left:0;top:547px;width:1920px;height:2px;background:#a9a8a3"></div>

<!-- ===== time series panel ===== -->
<div class="hdr" style="left:0;top:549px;width:1920px;height:19px"></div>
<div class="t" style="left:-1px;top:551px;font-size:11px;letter-spacing:0.55px;color:#222;-webkit-text-stroke:0.45px #222">me series 2</div>
<div class="cls" style="left:1911px;top:552px"></div>
<div class="a" style="left:0;top:567px;width:1920px;height:43px;background:linear-gradient(to right,#dfded9 0,#dfded9 420px,#e9e8e4 1200px,#f6f6f4 1920px);border-bottom:1px solid #f8f8f6"></div>
<div class="a" style="left:0;top:567px;width:421px;height:43px;background:#dcdad5"></div>

<!-- toolbar -->
<div class="a" style="left:-2px;top:568px;width:34px;height:38px;background:#dfded9;border-top:1px solid #fafaf8;border-right:2px solid #222;border-bottom:2px solid #222"></div>
<div class="a" style="left:31px;top:572px;width:34px;height:35px;background:#d3d1cc;border-top:2px solid #2a2a2a;border-left:2px solid #2a2a2a;border-right:1px solid #fafaf8;border-bottom:1px solid #fafaf8"></div>
<div class="a" style="left:65px;top:569px;width:34px;height:37px;background:#dfded9;border-top:1px solid #fafaf8;border-left:1px solid #fafaf8;border-right:2px solid #222;border-bottom:2px solid #222"></div>
<div class="a" style="left:99px;top:569px;width:34px;height:37px;background:#dfded9;border-top:1px solid #fafaf8;border-left:1px solid #fafaf8;border-right:2px solid #222;border-bottom:2px solid #222"></div>
<div class="a" style="left:133px;top:569px;width:35px;height:37px;background:#dfded9;border-top:1px solid #fafaf8;border-left:1px solid #fafaf8;border-right:2px solid #222;border-bottom:2px solid #222"></div>
<div class="a" style="left:168px;top:569px;width:34px;height:37px;background:#dfded9;border-top:1px solid #fafaf8;border-left:1px solid #fafaf8;border-right:2px solid #222;border-bottom:2px solid #222"></div>
<div class="a" style="left:202px;top:569px;width:35px;height:37px;background:#dfded9;border-top:1px solid #fafaf8;border-left:1px solid #fafaf8;border-right:2px solid #222;border-bottom:2px solid #222"></div>
<svg class="a" style="left:0;top:560px;width:240px;height:50px" viewBox="0 560 240 50">
 <!-- wrench -->
 <g transform="translate(19.5 582.5) rotate(-45)">
  <line x1="-21" y1="0" x2="-6" y2="0" stroke="#111" stroke-width="5.6" stroke-linecap="round"/>
  <circle cx="0" cy="0" r="6.4" fill="#111"/>
  <line x1="-21" y1="0" x2="-6" y2="0" stroke="#fafaf8" stroke-width="2.4" stroke-linecap="round"/>
  <circle cx="0" cy="0" r="4.1" fill="#fafaf8"/>
  <path d="M1.5 -2.1 L8 -2.1 L8 2.1 L1.5 2.1 Z" fill="#dfded9"/>
  <path d="M8 -2.1 L1.2 -2.1 A2.2 2.2 0 0 0 1.2 2.1 L8 2.1" fill="none" stroke="#111" stroke-width="1.5"/>
 </g>
 <!-- list -->
 <g stroke="#7a9cff" stroke-width="4.5"><path d="M37 581.5 H58 M37 586.3 H58 M37 591.2 H58 M37 596 H58"/></g>
 <g stroke="#08187a" stroke-width="2.2" stroke-linecap="round"><path d="M38 581.5 H57 M38 586.3 H57 M38 591.2 H57 M38 596 H57"/></g>
 <!-- camera -->
 <path d="M72.5 584 H77 L79.5 580.5 H86 L88.5 584 H92 V597 H72.5 Z" fill="none" stroke="#111" stroke-width="1.6" stroke-linejoin="round"/>
 <circle cx="82.2" cy="590" r="3.3" fill="none" stroke="#111" stroke-width="1.6"/>
 <!-- import -->
 <rect x="105" y="577.5" width="7" height="10" fill="#fff" stroke="#222" stroke-width="1.2"/>
 <path d="M106 580.5 H111 M106 583 H111 M106 585.5 H111" stroke="#222" stroke-width="1"/>
 <path d="M114.5 581 L119 584.5" stroke="#111" stroke-width="1.6"/><path d="M117 586 L120.5 585.5 L119.5 582.5 Z" fill="#111"/>
 <path d="M108 598 L110 594 L112 596 L114 592 L116 594 L118 588 L121 599 L124 592 L126 595" fill="none" stroke="#111" stroke-width="1.3"/>
 <!-- export -->
 <path d="M139.5 598 L141.5 594 L143.5 596 L145.5 592 L147.5 594 L149.5 588 L152.5 599 L155.5 592 L158 595" fill="none" stroke="#111" stroke-width="1.3"/>
 <path d="M146.5 586 Q147 581.5 151 580" fill="none" stroke="#111" stroke-width="1.6"/><path d="M149.5 578 L153.5 579.5 L150.5 582.5 Z" fill="#111"/>
 <rect x="155" y="577.5" width="7" height="10" fill="#fff" stroke="#222" stroke-width="1.2"/>
 <path d="M156 580.5 H161 M156 583 H161 M156 585.5 H161" stroke="#222" stroke-width="1"/>
 <!-- plus minus -->
 <path d="M175.5 588.7 H195 M185.2 579 V598.7" stroke="#111" stroke-width="2.2"/>
 <path d="M209.5 588.7 H229.5" stroke="#333" stroke-width="1.6"/>
</svg>
<!-- plotting mode -->
<div class="a" style="left:237px;top:568px;width:184px;height:16px;background:#e4e3df;border-top:1px solid #fafaf8;border-left:1px solid #fafaf8;border-right:1px solid #c8c7c2"></div>
<div class="t" style="left:289px;top:570px;font-size:11px;letter-spacing:0.85px;color:#1a1a1a">Plotting mode</div>
<div class="a" style="left:237px;top:583px;width:183px;height:25px;background:#e3e2de;border-top:1px solid #fafaf8;border-left:1px solid #fafaf8;border-right:2px solid #1a1a1a;border-bottom:2px solid #1a1a1a"></div>
<div class="t" style="left:243px;top:590px;font-size:11px;letter-spacing:0.85px;color:#111">Normal - no scaling/offsets</div>
<div class="a" style="left:399px;top:586px;width:1px;height:19px;background:#bbb"></div>
<div class="a" style="left:401px;top:586px;width:1px;height:19px;background:#fff"></div>
<div class="a" style="left:402px;top:594px;border-left:5px solid transparent;border-right:5px solid transparent;border-top:6px solid #111"></div>
<div class="a" style="left:0;top:608px;width:272px;height:2px;background:#dcdad5"></div>

<!-- left lists -->
<div class="hdr" style="left:0;top:610px;width:267px;height:21px"></div>
<div class="t" style="left:-1px;top:614px;font-size:11px;color:#222;letter-spacing:0.55px;-webkit-text-stroke:0.45px #222">verlay list</div>
<div class="cls" style="left:251px;top:614px"></div>
<div class="wh" style="left:0;top:630px;width:267px;height:93px"></div>
<div class="a" style="left:0;top:630px;width:13px;height:52px;background:#cfcdc8;border-top:2px solid #333"></div>
<div class="a" style="left:0;top:656px;width:13px;height:2px;background:#333"></div>
<div class="sel" style="left:13px;top:656px;width:254px;height:27px"></div>
<svg class="a" style="left:-7px;top:637px;width:16px;height:12px"><use href="#eye"/></svg>
<svg class="a" style="left:-7px;top:663px;width:16px;height:12px"><use href="#eye"/></svg>
<div class="t" style="left:14px;top:636px;font-size:14px;letter-spacing:0.25px;color:#111">004_0001_rest_ep...251031082825_e2</div>
<div class="t" style="left:14px;top:662px;font-size:14px;letter-spacing:0.25px;color:#10202e">004_0001_rest_ep...251031082825_e1</div>
<div class="a" style="left:0;top:723px;width:267px;height:7px;background:#dcdad5;border-top:1.5px solid #b8b7b2"></div>
<div class="hdr" style="left:0;top:729px;width:267px;height:20px"></div>
<div class="t" style="left:-1px;top:733px;font-size:11px;color:#222;letter-spacing:0.55px;-webkit-text-stroke:0.45px #222">ot list</div>
<div class="cls" style="left:251px;top:734px"></div>
<div class="wh" style="left:6px;top:749px;width:261px;height:88px"></div>
<div class="a" style="left:0;top:749px;width:6px;height:50px;background:#dcdad5;border-right:2px solid #333"></div>
<div class="a" style="left:0;top:772px;width:5px;height:1.5px;background:#333"></div>
<div class="a" style="left:0;top:798px;width:5px;height:1.5px;background:#333"></div>
<div class="a" style="left:267px;top:610px;width:5px;height:227px;background:#e3e2de;border-left:1px solid #c9c8c3;border-right:1px solid #bdbcb7"></div>

<!-- plot area -->
<div class="a" style="left:272px;top:609px;width:1648px;height:1.5px;background:#a9a8a4;z-index:2"></div>
<svg class="a" style="left:0;top:0;width:1920px;height:837px;pointer-events:none" viewBox="0 0 1920 837">
<rect x="272" y="610" width="1648" height="227" fill="#cecece"/>
<line x1="321.5" y1="610" x2="321.5" y2="837" stroke="#f4f4f4" stroke-width="1.6"/>
<line x1="516.9" y1="610" x2="516.9" y2="837" stroke="#f4f4f4" stroke-width="1.6"/>
<line x1="712.4" y1="610" x2="712.4" y2="837" stroke="#f4f4f4" stroke-width="1.6"/>
<line x1="907.8" y1="610" x2="907.8" y2="837" stroke="#f4f4f4" stroke-width="1.6"/>
<line x1="1103.2" y1="610" x2="1103.2" y2="837" stroke="#f4f4f4" stroke-width="1.6"/>
<line x1="1298.7" y1="610" x2="1298.7" y2="837" stroke="#f4f4f4" stroke-width="1.6"/>
<line x1="1494.1" y1="610" x2="1494.1" y2="837" stroke="#f4f4f4" stroke-width="1.6"/>
<line x1="1689.6" y1="610" x2="1689.6" y2="837" stroke="#f4f4f4" stroke-width="1.6"/>
<line x1="1885.0" y1="610" x2="1885.0" y2="837" stroke="#f4f4f4" stroke-width="1.6"/>
<line x1="272" y1="641" x2="1920" y2="641" stroke="#f4f4f4" stroke-width="1.6"/>
<line x1="273.5" y1="641.5" x2="278" y2="641.5" stroke="#222" stroke-width="1.6"/>
<line x1="272" y1="697" x2="1920" y2="697" stroke="#f4f4f4" stroke-width="1.6"/>
<line x1="273.5" y1="697.5" x2="278" y2="697.5" stroke="#222" stroke-width="1.6"/>
<line x1="272" y1="753" x2="1920" y2="753" stroke="#f4f4f4" stroke-width="1.6"/>
<line x1="273.5" y1="753.5" x2="278" y2="753.5" stroke="#222" stroke-width="1.6"/>
<line x1="272" y1="809" x2="1920" y2="809" stroke="#f4f4f4" stroke-width="1.6"/>
<line x1="273.5" y1="809.5" x2="278" y2="809.5" stroke="#222" stroke-width="1.6"/>
<polyline points="321.5,655.2 329.3,653.0 337.1,655.1 345.0,655.4 352.8,657.1 360.6,655.1 368.4,651.4 376.2,653.3 384.0,651.6 391.9,653.8 399.7,653.4 407.5,654.0 415.3,659.2 423.1,652.2 430.9,653.2 438.8,653.2 446.6,659.4 454.4,659.5 462.2,657.1 470.0,656.0 477.9,653.8 485.7,654.8 493.5,653.2 501.3,656.5 509.1,653.8 516.9,653.6 524.8,656.6 532.6,649.9 540.4,653.2 548.2,651.4 556.0,656.5 563.8,656.9 571.7,655.8 579.5,655.1 587.3,653.1 595.1,654.1 602.9,656.1 610.7,657.5 618.6,656.3 626.4,651.5 634.2,657.2 642.0,654.2 649.8,653.7 657.7,659.1 665.5,654.8 673.3,651.3 681.1,660.6 688.9,655.9 696.7,655.3 704.6,657.3 712.4,653.6 720.2,655.2 728.0,659.1 735.8,652.7 743.6,653.2 751.5,652.4 759.3,651.0 767.1,654.1 774.9,654.8 782.7,658.7 790.5,653.4 798.4,656.8 806.2,656.4 814.0,658.7 821.8,657.9 829.6,656.7 837.5,651.6 845.3,660.9 853.1,659.3 860.9,654.5 868.7,651.2 876.5,653.6 884.4,660.6 892.2,662.3 900.0,654.3 907.8,657.3 915.6,658.4 923.4,652.6 931.3,652.2 939.1,654.9 946.9,654.6 954.7,654.1 962.5,650.9 970.4,653.6 978.2,653.9 986.0,653.9 993.8,659.8 1001.6,651.8 1009.4,652.8 1017.3,654.0 1025.1,661.0 1032.9,657.2 1040.7,653.1 1048.5,660.6 1056.3,656.0 1064.2,652.6 1072.0,659.2 1079.8,651.0 1087.6,654.0 1095.4,656.0 1103.2,654.7 1111.1,653.9 1118.9,655.6 1126.7,652.9 1134.5,658.1 1142.3,657.6 1150.2,653.7 1158.0,656.7 1165.8,659.5 1173.6,654.5 1181.4,653.2 1189.2,658.8 1197.1,661.6 1204.9,658.3 1212.7,658.5 1220.5,659.1 1228.3,654.5 1236.1,661.5 1244.0,655.3 1251.8,662.5 1259.6,661.3 1267.4,657.6 1275.2,656.3 1283.1,657.3 1290.9,658.9 1298.7,659.6 1306.5,659.8 1314.3,658.9 1322.1,661.2 1330.0,660.2 1337.8,659.6 1345.6,661.4 1353.4,659.5 1361.2,660.2 1369.0,656.4 1376.9,661.4 1384.7,663.7 1392.5,663.8 1400.3,663.0 1408.1,660.6 1416.0,664.3 1423.8,662.5 1431.6,658.7 1439.4,671.3 1447.2,667.4 1455.0,663.8 1462.9,663.6 1470.7,664.3 1478.5,666.4 1486.3,663.6 1494.1,664.9 1501.9,667.2 1509.8,659.0 1517.6,664.9 1525.4,667.5 1533.2,666.3 1541.0,666.7 1548.8,666.3 1556.7,673.9 1564.5,667.7 1572.3,663.5 1580.1,669.7 1587.9,666.7 1595.8,663.9 1603.6,664.3 1611.4,662.6 1619.2,671.6 1627.0,667.9 1634.8,667.9 1642.7,665.3 1650.5,664.0 1658.3,674.7 1666.1,664.2 1673.9,671.4 1681.7,665.5 1689.6,671.6 1697.4,667.0 1705.2,664.3 1713.0,668.1 1720.8,667.2 1728.7,665.6 1736.5,667.5 1744.3,668.2 1752.1,663.8 1759.9,665.2 1767.7,669.0 1775.6,660.6 1783.4,671.6 1791.2,665.9 1799.0,669.2 1806.8,668.2 1814.6,666.7 1822.5,668.1 1830.3,667.0 1838.1,673.1 1845.9,673.2 1853.7,667.3 1861.5,803.6 1869.4,803.6 1877.2,803.6" fill="none" stroke="#1b8431" stroke-width="2.8" stroke-dasharray="18 4.4 3 4.2" stroke-linejoin="round"/>
<polyline points="321.5,742.6 329.3,744.1 337.1,742.0 345.0,749.0 352.8,746.3 360.6,749.6 368.4,744.0 376.2,741.7 384.0,748.9 391.9,741.7 399.7,743.4 407.5,746.8 415.3,752.0 423.1,742.2 430.9,746.6 438.8,748.0 446.6,745.1 454.4,745.1 462.2,741.9 470.0,749.3 477.9,743.0 485.7,741.9 493.5,742.1 501.3,746.8 509.1,748.4 516.9,743.3 524.8,745.9 532.6,745.9 540.4,742.1 548.2,747.0 556.0,753.0 563.8,747.4 571.7,751.7 579.5,743.9 587.3,745.4 595.1,748.1 602.9,746.3 610.7,743.9 618.6,746.1 626.4,742.4 634.2,746.5 642.0,743.3 649.8,741.9 657.7,741.6 665.5,748.2 673.3,743.7 681.1,751.7 688.9,749.4 696.7,752.0 704.6,743.2 712.4,749.9 720.2,746.3 728.0,746.8 735.8,746.4 743.6,748.0 751.5,745.6 759.3,741.1 767.1,746.2 774.9,744.7 782.7,743.4 790.5,746.9 798.4,749.9 806.2,747.9 814.0,743.2 821.8,751.1 829.6,748.0 837.5,743.3 845.3,744.0 853.1,746.3 860.9,743.9 868.7,745.8 876.5,749.7 884.4,750.8 892.2,748.1 900.0,743.6 907.8,747.9 915.6,748.9 923.4,748.5 931.3,750.7 939.1,746.6 946.9,749.7 954.7,745.2 962.5,753.2 970.4,745.3 978.2,748.1 986.0,751.9 993.8,744.2 1001.6,747.1 1009.4,752.8 1017.3,748.8 1025.1,745.4 1032.9,747.6 1040.7,744.0 1048.5,744.1 1056.3,744.3 1064.2,745.3 1072.0,742.4 1079.8,744.4 1087.6,745.0 1095.4,752.3 1103.2,743.7 1111.1,742.5 1118.9,747.1 1126.7,747.6 1134.5,740.6 1142.3,751.4 1150.2,744.9 1158.0,739.2 1165.8,749.0 1173.6,744.3 1181.4,740.8 1189.2,746.6 1197.1,744.6 1204.9,743.7 1212.7,748.9 1220.5,746.5 1228.3,745.4 1236.1,743.9 1244.0,746.4 1251.8,746.8 1259.6,749.2 1267.4,747.3 1275.2,743.7 1283.1,746.0 1290.9,748.8 1298.7,748.7 1306.5,738.5 1314.3,743.0 1322.1,744.4 1330.0,753.8 1337.8,744.5 1345.6,744.9 1353.4,741.4 1361.2,745.0 1369.0,746.5 1376.9,744.8 1384.7,751.9 1392.5,743.3 1400.3,745.3 1408.1,748.3 1416.0,742.4 1423.8,741.0 1431.6,750.4 1439.4,748.2 1447.2,745.4 1455.0,745.7 1462.9,747.4 1470.7,749.1 1478.5,740.1 1486.3,743.3 1494.1,749.8 1501.9,750.2 1509.8,741.3 1517.6,743.4 1525.4,741.0 1533.2,743.9 1541.0,748.8 1548.8,745.5 1556.7,752.6 1564.5,748.5 1572.3,746.5 1580.1,744.8 1587.9,748.4 1595.8,746.6 1603.6,744.9 1611.4,745.2 1619.2,744.4 1627.0,745.7 1634.8,747.2 1642.7,744.0 1650.5,746.1 1658.3,748.7 1666.1,748.1 1673.9,746.3 1681.7,746.6 1689.6,745.8 1697.4,746.3 1705.2,745.8 1713.0,746.7 1720.8,749.9 1728.7,745.1 1736.5,743.2 1744.3,745.0 1752.1,746.8 1759.9,745.0 1767.7,749.1 1775.6,751.8 1783.4,746.1 1791.2,749.0 1799.0,744.1 1806.8,749.4 1814.6,753.9 1822.5,749.3 1830.3,741.7 1838.1,747.4 1845.9,750.3 1853.7,749.6 1861.5,803.6 1869.4,803.6 1877.2,803.6" fill="none" stroke="#8e2a4a" stroke-width="3.3" stroke-dasharray="0.1 20.5" stroke-linecap="round"/>
</svg>
<div class="t" style="left:281px;top:635px;font-size:14.5px;letter-spacing:0.3px;color:#111">15000</div>
<div class="t" style="left:281px;top:691px;font-size:14.5px;letter-spacing:0.3px;color:#111">10000</div>
<div class="t" style="left:281px;top:747px;font-size:14.5px;letter-spacing:0.3px;color:#111">5000</div>
<div class="t" style="left:281px;top:803px;font-size:14.5px;letter-spacing:0.3px;color:#111">0</div>
<div class="t" style="left:317px;top:823px;font-size:14.5px;letter-spacing:0.3px;color:#111">0</div>
<div class="t" style="left:508px;top:823px;font-size:14.5px;letter-spacing:0.3px;color:#111">25</div>
<div class="t" style="left:704px;top:823px;font-size:14.5px;letter-spacing:0.3px;color:#111">50</div>
<div class="t" style="left:899px;top:823px;font-size:14.5px;letter-spacing:0.3px;color:#111">75</div>
<div class="t" style="left:1090px;top:823px;font-size:14.5px;letter-spacing:0.3px;color:#111">100</div>
<div class="t" style="left:1286px;top:823px;font-size:14.5px;letter-spacing:0.3px;color:#111">125</div>
<div class="t" style="left:1481px;top:823px;font-size:14.5px;letter-spacing:0.3px;color:#111">150</div>
<div class="t" style="left:1677px;top:823px;font-size:14.5px;letter-spacing:0.3px;color:#111">175</div>
<div class="t" style="left:1872px;top:823px;font-size:14.5px;letter-spacing:0.3px;color:#111">200</div>
<div class="t" style="left:1074px;top:819px;font-size:14.5px;letter-spacing:0.3px;color:#111">volume</div>
<!-- legend -->
<div class="a" style="left:1271px;top:619px;width:646px;height:45px;background:rgba(255,255,255,0.6);border-radius:2px"></div>
<svg class="a" style="left:1270px;top:620px;width:60px;height:40px"><path d="M4.8 9.8 H48" stroke="#1b8431" stroke-width="2.8" stroke-dasharray="18 4.4 3 4.2"/><path d="M6.3 30.9 H30" stroke="#8e2a4a" stroke-width="3.3" stroke-dasharray="0.1 22.6" stroke-linecap="round"/></svg>
<div class="t" style="left:1329px;top:623.5px;font-size:14.5px;letter-spacing:0.56px;color:#111">004_0001_rest_ep2d_bold_ME_wholebrain_21min_20251031082825_e1 [35 54 55]</div>
<div class="t" style="left:1329px;top:644.5px;font-size:14.5px;letter-spacing:0.56px;color:#111">004_0001_rest_ep2d_bold_ME_wholebrain_21min_20251031082825_e2 [35 54 55]</div>

</body></html>
